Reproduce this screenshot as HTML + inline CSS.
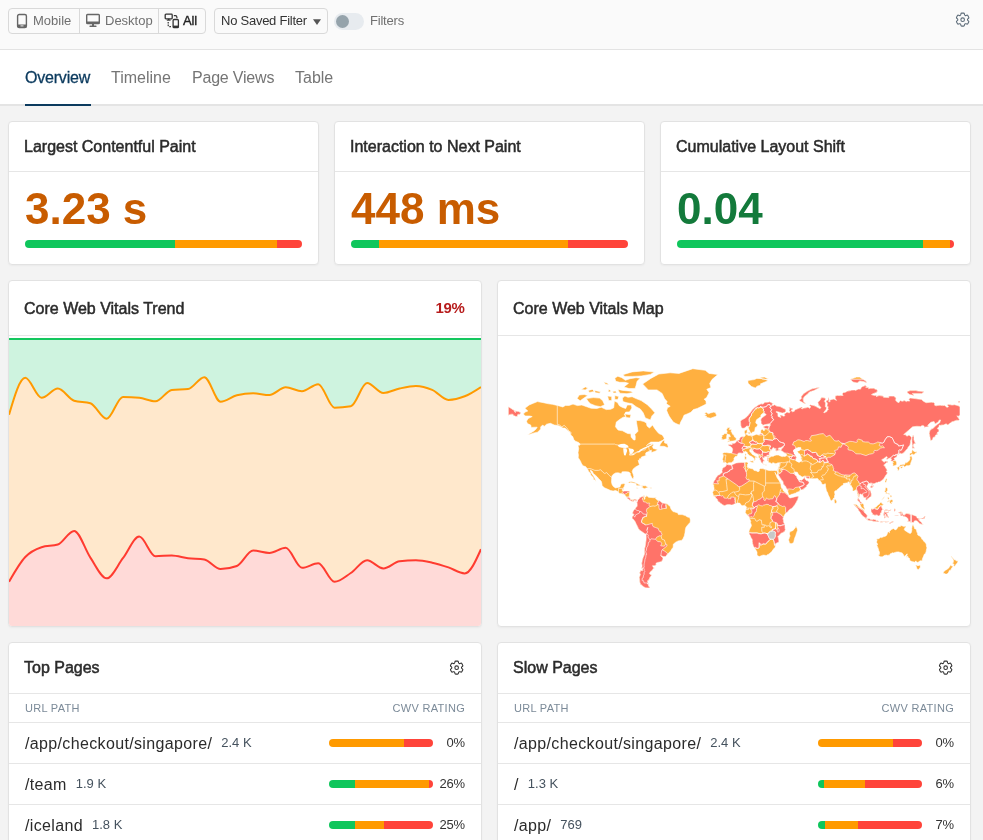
<!DOCTYPE html>
<html><head><meta charset="utf-8">
<style>
*{box-sizing:border-box;margin:0;padding:0}
html,body{width:983px;height:840px;overflow:hidden;background:#f3f3f3;font-family:"Liberation Sans",sans-serif;color:#222}
.abs{position:absolute}
#hdr,#tabs,.card{will-change:transform}
#hdr{position:absolute;left:0;top:0;width:983px;height:50px;background:#fafafa;border-bottom:1px solid #e3e3e3}
.btn{position:absolute;top:8px;height:26px;border:1px solid #d9d9d9;border-radius:4px;background:#fafafa}
.txt13{font-size:13px;line-height:13px;position:absolute;white-space:nowrap}
#tabs{position:absolute;left:0;top:50px;width:983px;height:56px;background:#fff;border-bottom:2px solid #e4e4e4}
.tab{position:absolute;top:20px;font-size:16px;line-height:16px;color:#757575;white-space:nowrap}
.card{position:absolute;background:#fff;border:1px solid #e2e2e2;border-radius:4px;box-shadow:0 1px 2px rgba(0,0,0,.04);overflow:hidden}
.ttl{position:absolute;left:15px;font-size:16px;line-height:16px;color:#2b2b2b;white-space:nowrap;-webkit-text-stroke:.5px #2b2b2b}
.hline{position:absolute;left:0;right:0;height:1px;background:#e6e6e6}
.bar{position:absolute;height:8px;border-radius:4px;overflow:hidden;display:flex}
.g{background:#0fc65c}.o{background:#ff9a00}.r{background:#ff443a}
.val{position:absolute;left:16px;font-size:44px;line-height:44px;font-weight:700;white-space:nowrap}
.colh{position:absolute;font-size:11px;line-height:11px;color:#7b8a98;letter-spacing:.3px;white-space:nowrap;margin-top:-.7px}
.url{position:absolute;left:16px;font-size:16px;line-height:16px;color:#2b2b2b;white-space:nowrap;letter-spacing:.35px;margin-top:-.5px}
.url small{font-size:13px;color:#45525e;margin-left:9px;letter-spacing:0;position:relative;top:-2px}
.pct{position:absolute;right:16.2px;font-size:13px;line-height:13px;color:#333;white-space:nowrap;letter-spacing:-.2px;margin-top:-3.3px}
</style></head><body>

<div id="hdr">
  <div class="btn" style="left:8px;width:198px"></div>
  <div class="abs" style="left:79px;top:9px;width:1px;height:24px;background:#d9d9d9"></div>
  <div class="abs" style="left:158px;top:9px;width:1px;height:24px;background:#d9d9d9"></div>
  <!-- mobile icon -->
  <svg class="abs" style="left:16px;top:13px" width="12" height="16" viewBox="0 0 12 16"><rect x="1.6" y="1.5" width="8.8" height="13" rx="1.6" fill="none" stroke="#666" stroke-width="1.4"/><rect x="1.6" y="11.5" width="8.8" height="3" fill="#666"/><rect x="4.5" y="12.4" width="3" height="1" fill="#eee"/></svg>
  <div class="txt13" style="left:33px;top:14px;color:#707070">Mobile</div>
  <!-- desktop icon -->
  <svg class="abs" style="left:85px;top:13px" width="16" height="16" viewBox="0 0 16 16"><rect x="1.7" y="1.5" width="12.6" height="9" rx=".8" fill="none" stroke="#666" stroke-width="1.4"/><rect x="1.7" y="8.5" width="12.6" height="2" fill="#666"/><rect x="7" y="10" width="2" height="3.5" fill="#666"/><rect x="4.5" y="12.6" width="7" height="1.4" rx=".5" fill="#666"/></svg>
  <div class="txt13" style="left:105px;top:14px;color:#707070">Desktop</div>
  <!-- all icon -->
  <svg class="abs" style="left:164px;top:13px" width="16" height="16" viewBox="0 0 16 16"><rect x="1.2" y="1.2" width="7" height="4.6" rx=".8" fill="none" stroke="#333" stroke-width="1.3"/><path d="M4.7 5.8v1.2" stroke="#333" stroke-width="1.4"/><rect x="2.8" y="6.6" width="3.8" height="1.1" fill="#333"/><path d="M4.2 9v3.2c0 1 .6 1.5 1.6 1.5h2" fill="none" stroke="#333" stroke-width="1.2" stroke-dasharray="1.6 1"/><path d="M9.8 2.6h1.6c.9 0 1.5.6 1.5 1.6v1" fill="none" stroke="#333" stroke-width="1.2"/><rect x="9.1" y="6.5" width="5.3" height="8.2" rx="1" fill="none" stroke="#333" stroke-width="1.3"/><rect x="9.1" y="12.6" width="5.3" height="2.1" fill="#333"/></svg>
  <div class="txt13" style="left:183px;top:14px;color:#222;-webkit-text-stroke:.35px #222;letter-spacing:-.1px">All</div>

  <div class="btn" style="left:214px;width:114px"></div>
  <div class="txt13" style="left:221px;top:14px;color:#333;letter-spacing:-.25px">No Saved Filter</div>
  <svg class="abs" style="left:312px;top:18px" width="10" height="8" viewBox="0 0 10 8"><path d="M1 1.2h8L5 7z" fill="#555"/></svg>

  <div class="abs" style="left:334px;top:13px;width:30px;height:17px;border-radius:9px;background:#e7ebef"></div>
  <div class="abs" style="left:336px;top:15px;width:13px;height:13px;border-radius:50%;background:#95a3ab"></div>
  <div class="txt13" style="left:370px;top:14px;color:#707070;letter-spacing:-.2px">Filters</div>

  <svg class="abs" style="left:954.4px;top:11.4px" width="17.3" height="17.3" viewBox="0 0 24 24" stroke="#5c6b78"><path d="M9.594 3.94c.09-.542.56-.94 1.11-.94h2.593c.55 0 1.02.398 1.11.94l.213 1.281c.063.374.313.686.645.87.074.04.147.083.22.127.325.196.72.257 1.075.124l1.217-.456a1.125 1.125 0 0 1 1.37.49l1.296 2.247a1.125 1.125 0 0 1-.26 1.431l-1.003.827c-.293.241-.438.613-.43.992a7.723 7.723 0 0 1 0 .255c-.008.378.137.75.43.991l1.004.827c.424.35.534.955.26 1.43l-1.298 2.247a1.125 1.125 0 0 1-1.369.491l-1.217-.456c-.355-.133-.75-.072-1.076.124a6.47 6.47 0 0 1-.22.128c-.331.183-.581.495-.644.869l-.213 1.281c-.09.543-.56.94-1.11.94h-2.594c-.55 0-1.019-.398-1.11-.94l-.213-1.281c-.062-.374-.312-.686-.644-.87a6.52 6.52 0 0 1-.22-.127c-.325-.196-.72-.257-1.076-.124l-1.217.456a1.125 1.125 0 0 1-1.369-.49l-1.297-2.247a1.125 1.125 0 0 1 .26-1.431l1.004-.827c.292-.24.437-.613.43-.991a6.932 6.932 0 0 1 0-.255c.007-.38-.138-.751-.43-.992l-1.004-.827a1.125 1.125 0 0 1-.26-1.43l1.297-2.247a1.125 1.125 0 0 1 1.37-.491l1.216.456c.356.133.751.072 1.076-.124.072-.044.146-.086.22-.128.332-.183.582-.495.644-.869l.214-1.28Z M14.5 12a2.5 2.5 0 1 1-5 0 2.5 2.5 0 0 1 5 0Z" fill="none" stroke-width="1.5" stroke-linejoin="round"/></svg>
</div>

<div id="tabs">
  <div class="tab" style="left:25px;color:#0b3a5e;-webkit-text-stroke:.3px #0b3a5e;letter-spacing:-.2px">Overview</div>
  <div class="abs" style="left:25px;top:54px;width:66px;height:2px;background:#0b3a5e"></div>
  <div class="tab" style="left:111px">Timeline</div>
  <div class="tab" style="left:192px;letter-spacing:-.2px">Page Views</div>
  <div class="tab" style="left:295px">Table</div>
</div>

<!-- KPI cards -->
<div class="card" style="left:8px;top:121px;width:311px;height:144px">
  <div class="ttl" style="top:17px">Largest Contentful Paint</div>
  <div class="hline" style="top:49px"></div>
  <div class="val" style="top:65px;color:#c85c00">3.23 s</div>
  <div class="bar" style="left:16px;top:118px;width:277px"><div class="g" style="width:150px"></div><div class="o" style="width:102px"></div><div class="r" style="flex:1"></div></div>
</div>
<div class="card" style="left:334px;top:121px;width:311px;height:144px">
  <div class="ttl" style="top:17px">Interaction to Next Paint</div>
  <div class="hline" style="top:49px"></div>
  <div class="val" style="top:65px;color:#c85c00">448 ms</div>
  <div class="bar" style="left:16px;top:118px;width:277px"><div class="g" style="width:27.5px"></div><div class="o" style="width:189px"></div><div class="r" style="flex:1"></div></div>
</div>
<div class="card" style="left:660px;top:121px;width:311px;height:144px">
  <div class="ttl" style="top:17px">Cumulative Layout Shift</div>
  <div class="hline" style="top:49px"></div>
  <div class="val" style="top:65px;color:#137a3b">0.04</div>
  <div class="bar" style="left:16px;top:118px;width:277px"><div class="g" style="width:246px"></div><div class="o" style="width:27px"></div><div class="r" style="flex:1"></div></div>
</div>

<!-- Trend -->
<div class="card" style="left:8px;top:280px;width:474px;height:347px">
  <div class="ttl" style="top:20px">Core Web Vitals Trend</div>
  <div class="abs" style="right:16.5px;top:18.5px;font-size:15px;line-height:15px;color:#b71c1c;font-weight:700;letter-spacing:-.3px">19%</div>
  <div class="hline" style="top:54px"></div>
  <svg id="trend" class="abs" style="left:0;top:55px" width="472" height="290" viewBox="0 0 472 290"><path d="M0,3H472V51.00L472.00,51.00C466.57,54.58 461.15,58.15 455.72,60.30C450.30,62.45 444.87,63.90 439.45,63.90C434.02,63.90 428.60,56.22 423.17,53.90C417.75,51.58 412.32,50.00 406.90,50.00C401.47,50.00 396.05,51.33 390.62,52.50C385.20,53.67 379.77,57.00 374.34,57.00C368.92,57.00 363.49,47.10 358.07,47.10C352.64,47.10 347.22,69.37 341.79,70.30C336.37,71.23 330.94,71.70 325.52,71.70C320.09,71.70 314.67,48.20 309.24,48.20C303.82,48.20 298.39,55.20 292.97,55.20C287.54,55.20 282.11,51.30 276.69,51.30C271.26,51.30 265.84,59.00 260.41,59.00C254.99,59.00 249.56,57.30 244.14,57.30C238.71,57.30 233.29,57.97 227.86,59.30C222.44,60.63 217.01,65.70 211.59,65.70C206.16,65.70 200.74,41.20 195.31,41.20C189.89,41.20 184.46,52.40 179.03,53.00C173.61,53.60 168.18,53.30 162.76,53.90C157.33,54.50 151.91,65.30 146.48,65.30C141.06,65.30 135.63,62.40 130.21,61.80C124.78,61.20 119.36,60.90 113.93,60.90C108.51,60.90 103.08,82.70 97.66,82.70C92.23,82.70 86.80,68.87 81.38,67.20C75.95,65.53 70.53,66.37 65.10,64.70C59.68,63.03 54.25,52.60 48.83,52.60C43.40,52.60 37.98,61.80 32.55,61.80C27.13,61.80 21.70,41.80 16.28,41.80C10.85,41.80 5.43,60.25 0.00,78.70Z" fill="#cef3df"/>
<path d="M0.00,78.70C5.43,60.25 10.85,41.80 16.28,41.80C21.70,41.80 27.13,61.80 32.55,61.80C37.98,61.80 43.40,52.60 48.83,52.60C54.25,52.60 59.68,63.03 65.10,64.70C70.53,66.37 75.95,65.53 81.38,67.20C86.80,68.87 92.23,82.70 97.66,82.70C103.08,82.70 108.51,60.90 113.93,60.90C119.36,60.90 124.78,61.20 130.21,61.80C135.63,62.40 141.06,65.30 146.48,65.30C151.91,65.30 157.33,54.50 162.76,53.90C168.18,53.30 173.61,53.60 179.03,53.00C184.46,52.40 189.89,41.20 195.31,41.20C200.74,41.20 206.16,65.70 211.59,65.70C217.01,65.70 222.44,60.63 227.86,59.30C233.29,57.97 238.71,57.30 244.14,57.30C249.56,57.30 254.99,59.00 260.41,59.00C265.84,59.00 271.26,51.30 276.69,51.30C282.11,51.30 287.54,55.20 292.97,55.20C298.39,55.20 303.82,48.20 309.24,48.20C314.67,48.20 320.09,71.70 325.52,71.70C330.94,71.70 336.37,71.23 341.79,70.30C347.22,69.37 352.64,47.10 358.07,47.10C363.49,47.10 368.92,57.00 374.34,57.00C379.77,57.00 385.20,53.67 390.62,52.50C396.05,51.33 401.47,50.00 406.90,50.00C412.32,50.00 417.75,51.58 423.17,53.90C428.60,56.22 434.02,63.90 439.45,63.90C444.87,63.90 450.30,62.45 455.72,60.30C461.15,58.15 466.57,54.58 472.00,51.00L472,213.20L472.00,213.20C466.57,225.30 461.15,237.40 455.72,237.40C450.30,237.40 444.87,233.18 439.45,231.40C434.02,229.62 428.60,227.88 423.17,226.70C417.75,225.52 412.32,224.30 406.90,224.30C401.47,224.30 396.05,224.63 390.62,225.30C385.20,225.97 379.77,232.40 374.34,232.40C368.92,232.40 363.49,224.30 358.07,224.30C352.64,224.30 347.22,233.42 341.79,237.00C336.37,240.58 330.94,245.80 325.52,245.80C320.09,245.80 314.67,227.30 309.24,227.30C303.82,227.30 298.39,231.80 292.97,231.80C287.54,231.80 282.11,211.80 276.69,211.80C271.26,211.80 265.84,216.90 260.41,216.90C254.99,216.90 249.56,214.60 244.14,214.60C238.71,214.60 233.29,228.00 227.86,230.00C222.44,232.00 217.01,233.00 211.59,233.00C206.16,233.00 200.74,224.37 195.31,223.50C189.89,222.63 184.46,222.88 179.03,222.20C173.61,221.52 168.18,219.40 162.76,219.40C157.33,219.40 151.91,220.30 146.48,220.30C141.06,220.30 135.63,200.60 130.21,200.60C124.78,200.60 119.36,215.25 113.93,222.20C108.51,229.15 103.08,242.30 97.66,242.30C92.23,242.30 86.80,229.50 81.38,221.60C75.95,213.70 70.53,194.90 65.10,194.90C59.68,194.90 54.25,206.70 48.83,208.50C43.40,210.30 37.98,209.40 32.55,211.20C27.13,213.00 21.70,215.23 16.28,221.00C10.85,226.77 5.43,236.28 0.00,245.80Z" fill="#ffe8cc"/>
<path d="M0.00,245.80C5.43,236.28 10.85,226.77 16.28,221.00C21.70,215.23 27.13,213.00 32.55,211.20C37.98,209.40 43.40,210.30 48.83,208.50C54.25,206.70 59.68,194.90 65.10,194.90C70.53,194.90 75.95,213.70 81.38,221.60C86.80,229.50 92.23,242.30 97.66,242.30C103.08,242.30 108.51,229.15 113.93,222.20C119.36,215.25 124.78,200.60 130.21,200.60C135.63,200.60 141.06,220.30 146.48,220.30C151.91,220.30 157.33,219.40 162.76,219.40C168.18,219.40 173.61,221.52 179.03,222.20C184.46,222.88 189.89,222.63 195.31,223.50C200.74,224.37 206.16,233.00 211.59,233.00C217.01,233.00 222.44,232.00 227.86,230.00C233.29,228.00 238.71,214.60 244.14,214.60C249.56,214.60 254.99,216.90 260.41,216.90C265.84,216.90 271.26,211.80 276.69,211.80C282.11,211.80 287.54,231.80 292.97,231.80C298.39,231.80 303.82,227.30 309.24,227.30C314.67,227.30 320.09,245.80 325.52,245.80C330.94,245.80 336.37,240.58 341.79,237.00C347.22,233.42 352.64,224.30 358.07,224.30C363.49,224.30 368.92,232.40 374.34,232.40C379.77,232.40 385.20,225.97 390.62,225.30C396.05,224.63 401.47,224.30 406.90,224.30C412.32,224.30 417.75,225.52 423.17,226.70C428.60,227.88 434.02,229.62 439.45,231.40C444.87,233.18 450.30,237.40 455.72,237.40C461.15,237.40 466.57,225.30 472.00,213.20L472,290L0,290Z" fill="#ffdad8"/>
<path d="M0,3H472" stroke="#14c75e" stroke-width="2" fill="none"/>
<path d="M0.00,78.70C5.43,60.25 10.85,41.80 16.28,41.80C21.70,41.80 27.13,61.80 32.55,61.80C37.98,61.80 43.40,52.60 48.83,52.60C54.25,52.60 59.68,63.03 65.10,64.70C70.53,66.37 75.95,65.53 81.38,67.20C86.80,68.87 92.23,82.70 97.66,82.70C103.08,82.70 108.51,60.90 113.93,60.90C119.36,60.90 124.78,61.20 130.21,61.80C135.63,62.40 141.06,65.30 146.48,65.30C151.91,65.30 157.33,54.50 162.76,53.90C168.18,53.30 173.61,53.60 179.03,53.00C184.46,52.40 189.89,41.20 195.31,41.20C200.74,41.20 206.16,65.70 211.59,65.70C217.01,65.70 222.44,60.63 227.86,59.30C233.29,57.97 238.71,57.30 244.14,57.30C249.56,57.30 254.99,59.00 260.41,59.00C265.84,59.00 271.26,51.30 276.69,51.30C282.11,51.30 287.54,55.20 292.97,55.20C298.39,55.20 303.82,48.20 309.24,48.20C314.67,48.20 320.09,71.70 325.52,71.70C330.94,71.70 336.37,71.23 341.79,70.30C347.22,69.37 352.64,47.10 358.07,47.10C363.49,47.10 368.92,57.00 374.34,57.00C379.77,57.00 385.20,53.67 390.62,52.50C396.05,51.33 401.47,50.00 406.90,50.00C412.32,50.00 417.75,51.58 423.17,53.90C428.60,56.22 434.02,63.90 439.45,63.90C444.87,63.90 450.30,62.45 455.72,60.30C461.15,58.15 466.57,54.58 472.00,51.00" stroke="#ff9a00" stroke-width="2" fill="none"/>
<path d="M0.00,245.80C5.43,236.28 10.85,226.77 16.28,221.00C21.70,215.23 27.13,213.00 32.55,211.20C37.98,209.40 43.40,210.30 48.83,208.50C54.25,206.70 59.68,194.90 65.10,194.90C70.53,194.90 75.95,213.70 81.38,221.60C86.80,229.50 92.23,242.30 97.66,242.30C103.08,242.30 108.51,229.15 113.93,222.20C119.36,215.25 124.78,200.60 130.21,200.60C135.63,200.60 141.06,220.30 146.48,220.30C151.91,220.30 157.33,219.40 162.76,219.40C168.18,219.40 173.61,221.52 179.03,222.20C184.46,222.88 189.89,222.63 195.31,223.50C200.74,224.37 206.16,233.00 211.59,233.00C217.01,233.00 222.44,232.00 227.86,230.00C233.29,228.00 238.71,214.60 244.14,214.60C249.56,214.60 254.99,216.90 260.41,216.90C265.84,216.90 271.26,211.80 276.69,211.80C282.11,211.80 287.54,231.80 292.97,231.80C298.39,231.80 303.82,227.30 309.24,227.30C314.67,227.30 320.09,245.80 325.52,245.80C330.94,245.80 336.37,240.58 341.79,237.00C347.22,233.42 352.64,224.30 358.07,224.30C363.49,224.30 368.92,232.40 374.34,232.40C379.77,232.40 385.20,225.97 390.62,225.30C396.05,224.63 401.47,224.30 406.90,224.30C412.32,224.30 417.75,225.52 423.17,226.70C428.60,227.88 434.02,229.62 439.45,231.40C444.87,233.18 450.30,237.40 455.72,237.40C461.15,237.40 466.57,225.30 472.00,213.20" stroke="#ff3b30" stroke-width="2" fill="none"/></svg>
</div>

<!-- Map -->
<div class="card" style="left:497px;top:280px;width:474px;height:347px">
  <div class="ttl" style="top:20px">Core Web Vitals Map</div>
  <div class="hline" style="top:54px"></div>
  <svg id="map" class="abs" style="left:0;top:55px" width="472" height="290" viewBox="0 0 472 290"><defs><clipPath id="lc"><path d="M25.3,78.0 27.3,76.1 29.8,75.0 26.9,72.3 31.1,69.0 35.4,67.2 39.5,65.6 45.5,66.7 50.5,67.8 54.3,68.3 59.3,69.4 64.9,71.0 67.4,69.4 71.2,69.4 75.0,68.1 79.4,69.6 83.8,69.0 89.4,71.0 93.2,72.3 98.8,72.5 103.2,71.2 108.2,73.6 112.6,73.3 115.7,71.8 116.4,65.1 119.5,66.5 121.4,69.8 124.5,71.4 127.7,72.5 129.2,69.0 133.3,69.0 133.9,72.0 131.4,75.9 127.7,76.1 126.4,78.6 128.0,80.8 125.2,81.2 122.0,83.2 118.3,86.1 117.5,90.8 120.1,94.1 124.5,94.8 129.6,97.5 132.9,97.8 133.1,101.1 135.6,104.0 137.1,104.0 137.3,100.6 136.8,98.5 140.0,95.2 139.2,90.5 138.7,87.5 138.3,84.4 142.1,84.6 145.9,85.5 148.4,87.1 149.0,89.9 151.5,92.1 154.6,89.0 156.5,92.3 159.0,95.4 160.9,97.6 164.3,98.9 166.3,102.3 165.3,104.1 160.9,106.1 152.8,106.1 148.4,109.7 150.3,108.1 154.9,107.7 155.6,108.9 154.4,110.5 155.3,112.4 158.4,113.3 159.7,113.8 160.9,113.0 157.2,115.2 153.4,116.6 153.3,114.1 151.5,115.2 148.1,116.6 147.4,118.2 148.4,119.3 146.5,120.0 143.4,121.1 143.1,122.7 141.5,122.7 141.1,125.2 140.2,124.2 140.8,126.7 141.5,128.8 139.8,129.8 137.7,130.9 135.2,133.0 134.2,135.5 135.2,138.3 135.8,140.6 135.3,142.7 134.3,142.6 133.3,140.6 132.4,138.9 132.3,137.3 130.8,136.1 128.3,135.7 125.2,135.7 123.9,135.9 124.0,137.3 122.6,137.4 120.1,136.8 117.6,136.9 115.1,138.5 114.0,139.9 113.7,142.3 113.5,146.3 114.2,148.7 115.4,150.5 117.5,151.9 120.1,151.4 122.0,150.9 122.6,148.9 123.2,148.0 125.8,147.6 127.2,147.9 126.4,150.2 125.7,151.5 125.4,153.3 124.7,154.9 126.2,154.9 128.9,154.9 130.6,155.0 131.8,156.0 131.4,158.6 131.2,161.1 132.7,162.9 134.2,163.8 136.3,163.0 138.3,163.4 139.2,164.2 139.3,165.1 138.0,165.6 137.6,164.2 135.8,164.6 135.3,165.8 133.9,165.3 132.2,164.8 131.3,163.6 129.4,162.5 128.4,161.1 127.5,159.9 126.3,158.6 124.2,158.0 121.6,157.4 119.5,155.3 117.4,154.5 115.1,155.1 112.6,154.5 108.8,152.8 106.3,151.8 104.1,149.6 103.8,147.3 103.2,145.2 100.7,142.7 99.1,140.8 97.4,139.2 95.4,137.7 94.4,135.4 92.3,133.9 92.9,136.2 94.7,138.9 96.2,141.0 97.6,144.0 98.3,145.8 97.1,144.3 95.4,143.2 95.3,141.5 92.9,139.2 92.2,136.9 90.7,135.5 89.3,132.7 87.5,130.6 84.9,129.8 83.3,127.2 82.5,125.2 80.9,122.7 80.2,121.4 80.4,119.0 80.0,116.7 80.7,112.5 79.9,109.2 81.6,109.2 82.1,108.1 80.6,106.4 77.5,105.3 75.8,103.6 74.7,100.6 72.7,98.9 72.1,96.4 69.1,93.9 66.9,92.1 64.9,92.1 62.4,90.6 59.9,89.5 56.2,89.0 52.4,87.3 48.6,88.2 46.1,90.5 44.9,89.0 42.7,90.8 42.7,93.0 39.6,96.2 36.1,96.9 32.9,98.0 29.6,98.9 31.7,97.5 35.2,95.5 37.7,93.4 39.2,91.2 37.3,91.2 33.2,91.4 32.7,89.0 29.4,87.6 28.5,85.2 30.1,82.6 34.2,80.6 31.7,80.0 27.3,80.0 25.3,78.0ZM181.6,89.1 177.9,87.5 175.3,86.1 172.8,82.6 171.2,80.2 169.7,77.1 168.7,74.6 169.4,71.8 172.2,70.3 168.4,67.8 169.1,65.6 166.6,62.8 164.1,57.4 159.0,53.9 150.3,53.9 144.6,48.0 152.8,42.4 160.9,38.0 172.2,36.8 181.0,37.4 194.8,32.7 207.3,34.3 211.1,37.4 219.9,38.6 214.2,43.3 211.7,47.5 213.0,51.5 208.8,53.3 211.1,56.7 208.6,61.6 206.1,63.2 208.0,65.1 208.2,68.1 204.2,70.1 199.2,72.5 195.4,73.6 192.9,76.3 189.1,78.0 186.0,79.2 184.8,82.2 182.7,86.1 181.6,89.1ZM161.8,110.3 165.9,110.3 169.7,111.7 170.2,110.3 169.1,107.6 166.6,106.9 166.4,103.8 164.2,105.3 161.9,108.9ZM129.7,147.1 131.4,145.8 133.3,145.4 136.5,146.2 139.0,147.6 141.5,148.7 143.1,149.3 141.1,149.7 138.7,149.7 137.7,147.6 135.2,147.1 132.7,146.6 131.4,147.0ZM142.9,149.8 145.2,149.7 147.7,149.8 150.4,151.4 148.4,151.9 146.5,152.7 144.9,152.0 142.9,151.8 144.9,151.0ZM138.0,151.7 140.5,152.0 139.3,152.6 138.1,151.9ZM151.9,151.5 153.9,151.7 153.8,152.2 151.9,152.2ZM139.2,164.2 140.8,163.0 141.5,161.7 143.1,160.9 144.9,160.1 146.0,159.4 147.0,160.0 146.1,161.1 146.4,162.2 145.9,163.4 147.1,162.7 146.6,161.3 148.2,160.6 148.6,159.4 150.6,161.3 153.1,161.5 155.5,161.7 158.5,161.5 157.5,162.4 159.8,164.3 162.0,164.9 163.9,166.8 166.9,167.5 169.1,167.8 171.3,169.7 172.2,170.6 172.8,172.6 173.5,173.7 175.0,175.6 176.2,175.8 179.9,177.0 180.4,178.6 184.1,178.6 187.3,179.6 189.5,181.0 191.7,181.5 192.4,183.9 192.2,186.3 189.8,188.9 187.9,191.4 187.3,194.0 187.0,196.8 186.3,199.9 184.9,202.9 183.5,204.4 180.2,204.9 177.4,206.4 175.3,208.2 175.2,211.3 174.0,212.7 172.6,215.2 170.6,217.0 169.2,218.9 167.3,220.6 165.7,220.6 163.7,220.1 162.9,219.2 162.8,219.9 164.4,221.2 165.1,222.8 163.7,225.4 161.8,226.1 159.4,226.5 158.0,227.3 158.2,229.1 156.2,229.8 154.5,229.7 155.4,231.6 156.5,231.9 155.4,232.4 154.4,234.0 152.8,235.6 151.8,236.5 151.4,237.6 152.6,238.7 153.9,239.0 151.9,241.4 150.9,243.9 149.5,244.7 149.9,246.5 150.6,247.4 149.0,247.4 150.1,247.9 150.6,250.1 152.1,251.8 150.1,252.0 147.7,251.8 145.5,250.8 144.2,249.4 142.5,248.2 141.8,246.2 141.3,241.4 142.5,238.1 141.5,237.1 142.9,234.2 144.4,234.8 145.0,231.6 143.6,233.1 144.1,229.7 143.7,227.3 144.4,223.8 145.1,221.5 146.5,218.0 146.4,215.0 146.6,212.3 147.2,210.5 147.9,205.2 148.2,202.3 148.0,198.2 146.6,197.6 144.1,195.8 141.8,194.3 140.3,192.4 139.5,190.4 138.2,188.1 137.1,185.6 135.3,183.2 134.3,182.7 134.1,180.9 135.4,179.3 136.1,178.4 134.7,177.8 134.7,176.3 135.7,174.0 137.1,172.9 137.8,171.7 139.1,170.2 139.2,169.1 139.0,166.6 138.5,166.0ZM228.8,128.1 230.4,128.8 233.4,128.9 236.1,127.9 238.1,126.9 240.2,126.7 243.1,126.5 246.7,126.5 248.1,125.9 249.9,126.4 250.1,127.8 249.1,128.9 249.8,129.9 248.9,130.9 250.1,131.6 252.1,132.3 255.3,133.0 255.9,134.3 258.2,134.8 260.0,135.8 261.4,135.0 261.0,133.7 262.4,132.5 264.9,132.6 267.6,133.6 270.8,134.4 273.5,134.6 276.4,134.4 278.6,134.8 279.2,134.6 280.0,136.9 279.1,138.9 278.4,139.2 276.9,136.3 278.0,138.7 279.0,141.5 281.0,144.4 282.5,147.0 282.9,148.3 283.3,151.4 284.4,152.2 285.5,154.9 287.9,156.7 289.7,158.6 290.5,159.4 290.3,160.5 292.2,161.9 294.7,161.4 296.4,160.9 298.6,160.4 300.2,159.9 300.3,161.1 300.2,161.9 299.7,163.4 298.3,166.2 297.2,168.3 296.0,169.7 294.7,171.4 293.4,172.5 291.5,173.6 289.9,175.4 288.6,176.8 287.5,177.6 286.5,179.1 285.9,180.4 285.4,181.3 284.9,183.2 285.6,183.9 285.4,185.7 286.3,187.7 286.8,188.0 287.0,189.9 287.1,192.9 287.4,193.6 287.0,194.5 286.5,195.4 284.5,196.7 283.1,197.3 281.7,198.7 280.4,199.9 279.9,200.4 280.4,202.1 280.6,203.2 280.9,205.3 280.1,206.4 277.6,207.6 277.1,208.5 277.4,210.5 277.0,211.5 275.5,213.0 274.0,215.3 272.5,216.8 270.7,218.2 269.3,218.8 268.6,219.4 267.6,219.4 265.8,219.1 264.6,219.2 263.2,219.8 261.4,220.5 260.3,220.1 259.3,219.5 259.0,218.4 259.0,216.1 258.3,214.8 257.7,213.7 256.7,211.9 255.8,210.8 255.3,209.8 254.6,207.6 254.3,205.6 254.3,204.0 254.1,203.2 253.0,201.6 252.0,199.1 251.0,198.0 250.9,196.1 251.0,195.0 251.4,193.8 251.9,192.7 253.3,190.1 253.4,189.2 253.0,188.1 252.4,186.6 252.8,185.8 252.1,183.8 251.5,182.7 251.6,182.2 251.1,181.3 250.1,179.9 248.9,178.7 248.0,177.6 247.2,176.4 247.5,175.6 247.9,173.5 248.2,172.1 248.5,171.1 248.0,170.4 247.4,170.1 246.9,169.4 245.6,169.5 245.1,169.4 244.6,169.7 243.6,169.6 243.0,168.8 242.5,168.0 241.6,167.1 239.6,167.1 238.6,167.3 237.6,167.6 235.6,168.3 234.8,168.7 233.7,169.1 232.6,168.7 231.2,168.5 230.4,168.5 228.9,168.7 226.8,169.6 226.5,169.5 224.9,169.0 223.7,168.0 222.6,167.3 221.9,166.5 221.5,166.2 220.6,165.8 220.0,165.2 219.8,164.7 219.6,163.8 219.0,163.0 218.5,162.5 217.9,162.2 217.3,161.1 216.5,160.5 216.0,160.5 215.7,160.1 215.4,159.6 215.2,159.4 215.1,158.3 214.7,156.8 214.1,156.4 214.6,156.2 215.2,155.3 215.5,154.6 216.0,153.5 216.0,152.0 215.6,150.1 215.7,149.4 215.5,148.8 214.7,148.3 214.9,147.7 215.7,146.0 216.1,144.7 217.3,143.6 217.6,142.8 218.1,141.2 218.9,140.8 219.8,139.5 220.4,138.9 221.5,138.8 222.5,137.8 223.2,137.4 224.2,136.3 223.9,134.6 224.4,133.4 224.5,132.6 225.3,131.8 226.5,131.1 227.5,130.5 228.4,129.1 228.8,128.1ZM298.3,190.8 299.1,192.2 299.6,194.2 299.2,195.2 298.7,196.7 298.3,197.8 297.7,199.9 297.1,201.1 296.3,203.6 295.8,206.0 295.3,206.9 294.3,207.3 293.2,207.8 292.4,207.4 291.4,207.0 291.2,206.4 291.0,205.2 290.5,204.1 290.7,203.2 291.3,202.0 291.3,201.5 291.9,200.6 292.0,199.6 291.7,199.1 291.4,198.2 291.4,197.0 291.8,196.4 291.9,195.5 293.3,195.2 293.8,195.0 294.3,195.0 295.0,194.2 296.0,193.4 296.4,192.8 296.3,192.3 296.8,192.4 297.4,191.5 297.6,190.8 297.9,190.1ZM124.9,38.7 134.1,35.9 145.2,34.9 156.4,36.1 152.4,38.4 143.2,40.0 134.1,40.4 126.9,40.4ZM116.8,42.2 119.8,40.2 123.9,41.7 127.4,44.3 132.0,42.7 138.1,41.7 142.2,42.2 139.1,45.3 138.1,49.3 137.1,52.4 131.0,52.6 125.9,50.9 130.5,47.3 126.9,46.3 121.8,46.3 117.8,45.3ZM105.6,45.8 109.6,47.3 110.7,48.8 107.6,48.3ZM83.2,53.4 87.3,50.9 89.8,51.9 87.3,53.9ZM90.3,54.4 94.4,53.4 96.4,55.4 91.3,56.5ZM96.4,54.4 102.5,55.7 101.5,57.2 97.4,56.7ZM110.7,53.4 112.7,54.4 112.2,56.0 110.1,55.7ZM114.7,55.4 117.8,54.9 118.3,57.0 115.2,57.0ZM119.8,53.4 124.9,54.4 133.0,55.2 135.1,56.5 129.0,57.7 121.8,57.2ZM79.1,62.6 81.2,59.0 86.2,58.5 89.8,59.5 85.2,62.6 82.2,64.8ZM88.3,62.6 95.4,61.6 101.5,62.1 104.6,64.6 106.6,68.7 102.5,70.7 97.4,69.7 92.3,67.7 90.3,65.6ZM109.6,60.0 113.7,60.5 113.7,64.6 110.7,64.6ZM116.8,59.5 120.8,60.5 119.8,63.6 116.8,63.6ZM124.4,62.1 126.9,60.0 130.0,61.3 134.1,60.7 138.1,62.6 143.2,64.6 149.3,68.7 153.4,72.7 156.9,76.8 153.9,79.9 152.4,83.9 147.3,81.9 145.2,76.8 142.2,72.9 138.1,70.7 134.1,67.7 129.0,66.8 124.9,65.6ZM126.9,78.0 133.0,78.8 132.0,82.1 128.0,81.4ZM224.9,126.4 225.2,124.5 224.3,123.7 225.2,120.8 225.0,119.0 224.5,117.5 226.2,116.4 228.7,116.6 231.2,116.9 233.8,116.9 234.4,115.2 234.7,112.9 233.4,111.1 232.4,110.3 230.6,109.8 230.4,108.6 232.4,108.4 234.2,108.7 233.8,106.8 234.7,107.4 236.5,107.3 238.0,106.3 238.2,105.0 239.3,104.6 240.3,104.3 241.2,104.0 242.1,101.6 243.0,100.9 244.9,100.6 246.4,100.6 247.2,99.7 247.0,98.0 246.4,97.1 246.4,95.2 247.0,94.3 249.5,93.2 249.1,94.6 249.2,95.9 249.9,95.4 249.6,96.4 248.2,97.1 248.6,98.3 249.9,99.0 251.1,99.4 251.9,98.9 253.3,99.6 253.9,99.9 256.8,98.9 258.3,98.3 260.9,99.0 262.4,98.2 262.9,97.6 262.7,96.2 262.7,94.8 263.3,93.7 264.4,93.1 265.4,94.5 266.4,94.5 266.8,91.9 265.6,91.6 265.7,90.5 267.1,89.9 268.7,89.7 270.1,89.9 271.3,89.9 272.7,89.0 271.5,88.0 269.2,88.2 266.9,88.8 264.9,89.3 264.2,88.2 262.9,87.6 263.2,85.7 262.7,84.0 263.2,82.8 264.3,81.6 267.2,79.4 268.1,79.0 267.9,78.2 266.2,77.1 264.1,77.8 262.8,79.2 263.1,80.4 261.0,82.0 258.5,83.8 257.7,86.5 258.5,87.8 259.8,88.8 258.7,90.9 257.3,91.4 256.8,94.5 256.1,96.1 254.6,95.9 253.9,97.3 252.4,97.3 252.0,95.7 251.0,93.7 250.0,91.0 249.2,89.9 246.7,92.1 245.0,92.5 243.4,91.6 242.8,89.5 242.5,85.2 243.6,84.0 247.0,82.2 249.4,80.2 251.8,77.3 254.8,73.3 256.8,71.6 260.3,69.0 263.1,67.8 265.1,68.1 266.9,66.2 269.3,66.3 271.6,65.8 275.5,67.4 273.8,68.1 275.2,69.4 276.5,68.7 278.6,70.1 282.0,70.5 286.8,73.1 287.8,74.0 287.8,75.5 286.4,76.5 284.4,77.1 278.7,75.5 277.9,75.9 279.9,77.3 280.0,80.4 281.6,81.0 282.6,81.6 282.7,80.6 282.0,79.6 282.9,79.0 285.9,80.2 286.9,79.6 286.1,78.2 289.0,76.1 291.3,76.9 292.0,75.5 291.0,74.2 291.7,72.9 290.8,71.6 294.3,72.3 294.9,73.6 293.4,73.8 293.4,75.0 294.3,75.7 296.3,75.3 296.6,74.0 303.6,71.0 304.6,71.2 303.3,72.5 304.8,72.7 305.7,72.0 308.1,71.8 310.0,71.0 311.4,72.3 312.9,71.0 311.5,69.6 312.1,68.7 315.9,69.6 317.6,70.3 322.1,72.7 323.0,71.6 321.8,70.5 321.6,69.8 320.1,69.6 320.6,68.7 319.9,66.9 319.9,66.2 322.1,64.2 323.0,62.0 323.9,61.6 327.3,62.0 327.5,63.5 326.3,65.3 327.2,66.0 327.5,67.6 327.3,70.7 328.7,72.0 328.0,73.6 325.7,76.5 327.0,76.7 327.5,76.1 328.9,75.5 329.3,74.4 330.4,73.3 329.7,72.3 330.2,70.7 328.8,70.5 329.5,67.2 327.9,65.3 330.2,63.7 329.9,62.0 330.6,61.8 331.2,63.2 330.7,65.6 332.1,65.8 331.6,64.2 335.2,63.0 333.6,62.3 336.1,63.2 338.5,64.4 337.3,62.5 337.2,60.1 339.3,59.4 342.5,59.6 345.1,59.4 344.1,57.9 345.6,56.4 347.0,56.4 349.5,55.1 352.8,54.6 353.1,54.1 356.5,53.9 357.5,54.4 360.3,53.1 362.7,53.1 362.9,51.8 364.2,50.7 367.2,49.6 369.3,50.5 367.6,51.2 370.4,51.6 370.7,52.8 372.0,52.3 375.6,52.3 378.4,53.6 379.4,54.6 379.1,55.9 377.7,56.7 374.5,57.9 373.5,58.6 375.0,59.1 376.9,59.6 378.0,59.1 378.6,60.8 379.2,60.1 381.2,59.6 385.3,60.1 385.5,61.3 390.8,61.6 390.9,59.9 393.5,60.1 395.5,60.1 397.6,61.6 398.2,63.0 397.4,63.9 398.9,65.8 400.9,66.7 402.2,64.4 404.2,65.3 406.3,64.6 408.7,65.6 409.6,64.9 411.7,65.1 410.7,63.0 412.5,62.0 423.8,63.5 424.9,64.9 428.1,66.7 433.2,66.2 435.7,66.5 436.7,67.4 436.6,69.2 438.1,69.8 439.8,69.4 442.1,69.2 444.4,69.6 446.7,69.4 449.0,71.4 450.5,70.7 449.5,69.2 450.1,68.3 454.0,69.0 456.7,68.7 460.3,69.8 462.0,70.7 462.0,79.2 460.4,80.2 458.8,80.0 459.9,81.0 460.7,82.6 461.3,83.2 461.0,84.6 458.8,84.2 455.3,85.5 454.1,85.7 452.3,87.1 450.4,88.4 449.9,89.1 448.1,87.8 444.9,89.3 444.2,88.6 443.1,89.5 441.3,89.1 441.0,90.5 439.5,92.3 439.6,93.0 441.0,93.4 440.8,95.9 439.6,96.1 439.1,97.5 439.6,98.2 437.5,99.2 437.0,101.1 435.1,101.4 434.7,103.3 432.9,104.8 432.4,103.6 431.9,101.1 431.2,97.3 431.8,94.8 432.9,93.7 432.9,93.0 434.9,92.5 437.2,90.3 439.3,88.4 441.6,86.9 442.6,84.0 441.1,84.2 440.3,85.9 437.1,88.0 436.1,85.5 432.8,86.3 429.7,89.3 430.7,90.6 427.9,91.0 426.0,91.2 426.0,89.9 424.2,89.5 422.5,90.5 418.8,90.3 414.6,90.8 410.6,94.3 405.7,98.5 407.7,98.7 408.3,99.8 409.6,100.1 410.4,99.2 411.7,99.4 413.5,101.3 413.6,102.8 412.6,104.5 412.5,106.4 412.0,109.0 410.1,111.3 409.6,112.4 405.5,116.9 403.7,117.8 402.9,117.8 402.2,117.0 400.3,118.7 400.3,118.7 399.8,118.5 399.3,119.1 398.9,119.6 398.9,120.6 398.3,120.9 398.1,121.2 396.8,122.0 396.2,122.3 396.0,123.0 396.6,123.3 397.2,124.0 398.3,125.8 398.7,126.7 398.7,128.4 398.2,129.1 397.1,129.4 396.0,129.9 394.9,130.1 394.8,129.4 395.0,128.2 394.4,126.8 395.4,126.5 394.5,125.3 393.9,125.3 393.5,125.1 392.7,124.8 393.0,124.2 393.3,123.9 393.5,122.9 392.2,122.1 390.4,122.6 389.4,123.2 388.1,123.6 388.8,122.9 388.5,122.3 389.5,121.4 388.8,120.6 387.8,121.1 386.3,122.1 385.5,123.0 384.3,123.2 383.6,123.9 384.4,124.8 385.4,125.1 385.4,125.8 386.4,126.1 387.8,125.1 388.9,125.6 389.8,125.6 389.9,126.5 388.1,126.8 387.5,127.7 386.4,128.4 385.8,129.4 387.0,130.1 387.5,131.5 388.3,132.7 389.1,133.9 389.1,135.0 388.4,135.2 388.6,136.1 389.4,136.5 389.1,137.6 388.9,138.7 388.1,138.8 387.3,140.2 386.3,142.0 385.1,143.6 383.4,144.8 381.6,145.9 380.2,146.0 379.5,146.7 379.0,146.3 378.2,146.8 376.5,147.5 375.2,147.7 374.7,149.2 374.1,149.2 373.7,148.3 374.1,147.7 372.3,147.3 371.8,147.5 370.5,147.2 370.0,148.3 369.1,149.8 368.8,150.7 369.7,152.2 371.0,153.9 372.1,154.6 372.8,155.7 373.3,158.1 373.2,160.3 372.2,161.1 370.7,161.9 369.7,163.0 368.2,164.2 367.7,163.4 368.1,162.5 367.1,161.8 366.1,161.7 365.6,160.9 364.9,159.6 364.6,158.1 362.9,159.0 362.9,158.1 361.8,158.1 361.7,159.5 360.7,162.5 360.7,163.4 361.5,163.4 362.0,164.6 362.3,165.7 362.9,166.3 363.7,166.6 364.3,167.2 364.7,167.5 365.4,168.1 365.9,168.8 365.9,169.7 365.8,170.4 365.9,170.7 366.1,171.5 366.6,171.9 366.9,173.0 366.9,173.4 366.1,173.5 364.9,172.5 363.4,171.5 363.3,170.9 362.5,170.1 362.4,169.0 361.9,168.3 362.0,167.5 361.8,166.8 361.3,166.5 361.0,165.8 360.4,165.1 359.8,164.4 359.5,165.2 359.4,164.4 359.5,163.4 359.9,162.5 359.8,161.5 360.2,160.6 359.7,159.9 359.8,158.5 359.3,157.8 358.9,156.3 358.7,154.6 358.2,153.6 357.3,154.2 355.9,155.1 355.1,155.0 354.4,154.8 354.8,153.1 354.5,151.9 353.5,150.4 353.8,150.0 353.0,149.7 352.1,148.7 351.8,148.0 351.6,147.3 351.4,146.7 350.9,145.9 349.8,145.9 349.9,146.4 349.5,147.2 348.9,147.0 348.7,147.1 348.4,147.0 347.9,146.8 347.7,147.3 346.9,147.3 345.3,147.6 345.4,148.7 344.7,149.3 343.0,150.2 341.5,151.8 340.6,152.6 339.3,153.5 339.3,154.0 338.7,154.4 337.6,154.8 337.0,154.9 336.6,155.9 336.8,157.6 337.0,158.6 336.5,159.7 336.5,161.9 335.7,162.0 335.2,163.0 335.6,163.4 334.4,163.8 333.9,164.6 333.4,165.0 332.3,163.8 331.7,162.0 331.2,160.8 330.8,160.1 330.2,159.0 329.8,157.3 329.5,156.6 328.4,154.8 327.9,152.3 327.5,150.6 327.5,149.1 327.3,147.7 325.5,148.5 324.7,148.4 323.0,146.8 323.5,146.3 323.2,145.9 321.8,144.7 320.8,144.4 320.4,143.4 319.5,142.4 317.1,142.7 315.1,142.7 313.4,142.8 311.0,142.4 309.6,142.2 308.2,142.0 307.7,140.3 307.1,140.2 306.1,140.3 304.8,141.0 303.3,140.6 302.1,139.5 300.8,139.1 300.1,137.8 299.1,136.1 298.4,136.2 297.6,135.8 297.2,136.3 296.4,136.2 296.7,137.6 296.9,138.3 297.4,139.3 298.1,139.6 298.3,140.2 299.2,140.7 299.1,141.6 299.8,143.0 300.2,143.5 300.7,143.5 300.9,142.7 300.9,141.9 300.6,141.5 300.9,144.0 301.2,144.3 302.2,144.0 304.0,144.2 304.8,143.2 305.7,142.4 306.6,141.5 307.0,141.1 307.1,141.2 307.0,141.8 306.8,142.0 307.0,143.1 308.2,144.4 309.1,144.7 309.9,144.8 310.9,146.0 311.2,146.3 310.6,147.7 310.1,148.1 309.6,149.1 309.0,148.9 308.7,149.3 308.6,150.0 308.7,150.7 308.1,151.0 307.2,151.4 307.1,152.0 306.8,152.3 306.1,152.3 305.6,152.7 305.6,153.2 305.0,153.5 304.2,153.5 303.5,153.9 302.8,153.9 301.9,154.2 301.7,154.9 301.7,155.3 300.4,155.8 298.4,156.4 297.3,157.3 296.7,157.4 296.3,157.3 295.7,157.8 294.8,158.1 293.8,158.2 293.4,158.2 293.2,158.6 292.8,158.7 292.6,159.0 292.0,159.0 291.7,159.1 290.8,159.1 290.4,158.3 290.5,157.6 290.3,157.2 290.0,156.3 289.7,155.8 289.9,155.7 289.8,155.1 289.9,154.9 289.9,154.4 289.7,153.7 289.3,153.3 289.3,152.8 288.6,152.4 287.9,151.3 287.5,150.2 286.6,149.3 286.1,149.2 285.3,147.9 285.1,146.2 284.5,144.7 283.9,144.2 283.3,143.9 282.9,143.1 282.9,142.8 282.5,142.2 282.1,141.9 281.6,140.8 280.9,139.8 280.2,138.8 279.6,138.8 279.9,138.1 279.9,137.3 280.1,137.0 279.6,134.1 280.1,132.0 280.7,130.8 281.4,129.8 281.2,128.7 281.5,128.1 281.4,126.5 280.9,126.9 279.7,126.7 278.9,127.5 277.0,127.7 276.0,126.9 274.6,126.8 274.3,127.4 273.5,127.7 272.2,126.8 270.8,126.8 270.1,125.3 269.2,124.6 269.8,123.5 269.1,122.7 270.5,121.4 272.3,121.2 272.8,120.2 275.2,120.3 276.7,119.4 278.2,119.0 280.4,119.0 282.5,120.0 284.3,120.6 285.8,120.3 286.9,120.5 288.4,119.7 288.5,119.0 288.3,118.1 287.5,117.5 286.8,117.3 286.3,116.9 284.8,115.5 283.3,114.9 282.2,114.1 283.1,113.8 284.1,112.5 283.5,111.9 285.3,111.3 285.3,110.8 284.1,111.1 283.1,111.3 282.4,111.7 281.1,111.9 280.1,112.4 280.1,113.3 280.7,113.6 282.0,113.6 281.7,114.3 280.4,114.6 278.7,115.3 278.0,115.0 278.2,114.4 277.1,113.9 277.1,113.6 278.4,113.0 278.0,112.7 276.0,112.4 276.0,111.7 274.7,111.9 274.3,112.9 273.3,113.9 273.3,114.4 272.7,114.7 272.3,114.6 272.1,116.4 271.3,117.0 271.0,118.1 271.3,119.0 271.5,119.6 272.6,120.0 272.3,120.3 270.8,120.5 270.3,120.9 269.3,121.7 268.8,120.8 268.1,120.6 267.4,120.6 265.9,120.9 266.8,121.8 266.2,122.0 265.4,122.0 264.8,121.2 264.6,121.5 264.8,122.4 265.6,123.2 265.0,123.5 265.7,124.2 266.3,124.6 266.3,125.3 265.2,125.1 265.6,125.8 264.8,125.9 265.3,127.2 264.4,127.2 263.4,126.7 262.9,125.5 262.7,124.5 262.2,123.7 261.5,123.0 261.5,122.6 261.3,122.4 261.2,122.1 260.5,121.5 260.4,120.9 260.5,119.9 260.7,119.4 260.5,119.1 260.3,119.1 259.9,118.5 259.4,118.1 258.2,117.8 257.4,117.2 256.3,116.7 255.3,115.6 255.5,115.5 254.9,114.9 254.9,114.3 254.1,114.1 253.7,114.7 253.4,114.3 253.4,113.6 253.6,113.5 252.6,113.3 251.6,113.8 251.8,114.6 251.6,115.0 252.0,115.8 253.1,116.6 253.8,117.8 255.1,119.1 256.1,119.1 256.5,119.4 256.1,119.7 258.2,120.6 259.3,121.4 259.4,121.7 259.2,122.3 258.4,121.5 257.4,121.4 256.8,122.3 257.8,122.9 257.6,123.6 257.0,123.7 256.4,124.9 255.9,125.1 255.9,124.6 256.1,123.7 256.4,123.5 255.5,122.0 255.0,121.7 254.6,121.1 253.9,120.8 253.3,120.2 252.4,120.0 251.4,119.4 250.3,118.4 249.4,117.6 249.0,116.1 248.4,116.0 247.4,115.3 246.7,115.6 246.1,116.3 245.5,116.4 244.4,117.3 242.0,116.9 240.1,117.3 240.0,118.2 240.0,119.1 238.8,120.2 237.2,120.5 237.1,120.9 236.3,121.8 235.8,123.0 236.3,123.9 235.6,124.5 235.3,125.5 234.4,125.8 233.6,126.8 230.7,126.8 229.9,127.4 229.4,127.9 228.8,127.8 228.4,127.2 228.0,126.5 226.8,126.2 226.3,126.7 225.7,126.4 224.9,126.4ZM10.4,70.7 13.4,72.5 16.8,74.6 16.6,75.9 17.5,76.5 17.1,74.8 20.5,75.3 23.0,77.1 21.8,78.2 19.8,78.4 19.2,80.6 18.0,80.6 15.4,79.4 15.1,78.4 13.9,78.2 12.4,78.4 10.4,79.2ZM229.0,106.3 230.8,105.8 232.4,105.3 234.9,105.1 237.8,104.6 238.2,103.0 238.3,102.0 236.6,101.1 235.9,99.0 234.6,98.3 233.9,96.6 233.1,95.2 233.8,93.4 231.2,93.4 232.3,91.6 229.9,91.6 228.4,93.6 229.2,95.7 228.4,97.3 229.9,98.3 231.7,98.7 232.1,99.9 232.4,100.8 230.8,100.8 230.4,101.6 230.9,102.6 229.6,103.6 231.9,104.1 230.8,104.5ZM228.7,102.8 228.7,101.1 228.7,99.7 229.2,98.7 228.4,97.6 226.7,97.6 225.8,98.5 223.7,99.4 224.2,100.8 223.4,101.6 224.0,102.5 223.2,103.5 225.4,103.8 227.7,103.0ZM207.7,81.3 208.8,80.4 206.1,79.4 208.3,78.4 206.2,77.6 208.3,76.3 210.4,77.8 212.5,76.9 215.9,76.1 218.0,77.1 217.8,78.2 219.1,79.0 217.5,80.4 212.7,82.2 207.6,81.3ZM250.0,47.2 253.5,50.5 257.3,52.0 259.2,50.2 263.2,49.1 262.2,48.0 270.1,44.7 265.7,42.7 258.8,42.4 256.3,43.6 249.9,44.4ZM261.9,41.5 265.1,43.6 270.6,43.0 266.3,41.0ZM302.1,65.1 306.0,67.2 308.3,66.9 307.6,67.2 305.5,65.6 305.2,62.5 306.6,60.4 309.0,58.6 311.5,55.9 315.9,54.6 320.3,52.3 321.8,51.6 319.0,51.8 314.0,52.8 309.6,55.1 305.8,57.4 303.3,60.4 303.3,62.8 301.1,64.2ZM355.0,46.1 359.2,46.9 361.7,45.0 365.7,45.5 368.4,46.9 368.1,45.3 361.5,41.0 358.5,41.0 352.3,43.3ZM409.3,56.7 411.7,58.6 416.2,59.4 414.4,57.4 423.8,57.4 426.3,55.6 420.0,55.1 417.8,54.6 412.5,54.6 409.3,55.4ZM460.2,66.5 462.0,66.2 462.0,64.9 460.4,65.1ZM416.4,105.3 417.8,108.1 415.9,107.6 415.1,109.8 416.2,111.6 416.2,112.7 415.2,111.7 414.5,112.9 414.2,111.6 414.4,110.0 414.2,108.2 413.9,105.6 413.9,103.3 414.0,100.9 415.1,100.1 414.6,99.4 415.2,99.0 416.0,101.4 415.9,103.5ZM414.2,123.2 413.1,126.2 412.6,127.4 412.9,128.1 412.2,129.1 410.6,129.7 408.3,129.8 406.6,131.3 405.7,129.8 403.5,130.1 402.1,130.8 400.6,130.8 401.8,131.9 400.9,134.1 400.2,134.8 399.6,134.3 399.8,133.0 399.1,132.6 398.6,131.6 399.8,131.2 400.4,130.4 401.7,129.7 402.6,128.7 405.1,128.2 406.5,128.5 407.7,125.9 408.6,126.7 410.5,125.2 411.1,124.6 412.0,122.9 411.7,121.1 412.2,120.2 413.6,119.9 414.2,122.0ZM402.3,131.3 403.1,132.5 405.1,130.9 404.6,130.4 403.5,130.4ZM413.6,116.9 413.9,114.7 414.3,113.5 415.7,115.2 417.6,116.0 418.5,115.3 418.8,117.0 417.0,117.5 415.9,119.0 413.9,117.9 413.2,119.3 411.9,119.6 411.6,118.1 412.2,117.0ZM389.0,143.8 388.3,145.9 387.6,147.0 386.9,145.6 387.6,143.6 388.6,142.6 389.2,143.0ZM374.6,151.3 373.6,151.9 372.6,151.5 372.5,150.4 373.1,149.8 374.5,149.4 375.2,149.4 375.5,150.0ZM338.8,165.6 338.6,166.8 338.1,167.2 337.0,167.5 336.5,166.5 336.2,164.7 336.7,162.7 337.6,163.3ZM387.8,151.5 389.6,151.9 389.5,153.3 389.9,154.4 388.9,154.9 388.6,155.9 388.9,156.9 389.6,157.1 390.4,157.3 391.7,157.6 391.5,158.3 391.9,159.2 390.9,158.6 390.4,157.8 390.2,158.3 389.3,157.6 388.1,157.8 387.5,156.9 388.0,156.7 387.6,156.3 387.5,156.8 386.9,156.0 386.6,155.5 386.6,154.2 387.1,154.8 387.3,152.7ZM394.8,164.4 394.9,165.2 394.5,167.1 394.0,165.8 393.5,166.5 393.9,167.5 393.5,168.0 392.0,167.2 391.7,166.3 392.0,165.7 391.3,165.2 390.9,165.7 390.3,165.6 389.4,166.3 389.1,166.0 389.6,164.9 390.4,164.7 391.2,164.1 391.5,164.7 392.5,164.3 392.8,163.7 393.5,163.7 393.5,162.7ZM389.9,162.8 390.7,163.7 391.2,162.4 390.5,161.1 389.3,161.9ZM392.2,159.1 393.4,159.2 394.0,161.1 393.0,161.1 393.4,162.0 392.2,160.5ZM383.3,164.4 386.1,161.7 386.4,160.6 384.9,161.9ZM355.8,168.1 358.5,168.5 359.7,169.6 360.5,170.5 361.3,171.0 362.4,172.4 363.4,172.5 364.8,173.2 365.6,174.2 366.4,174.9 365.9,175.9 367.3,177.3 367.8,177.9 368.7,178.8 369.3,178.9 369.1,180.4 368.9,182.3 367.6,182.4 366.6,181.3 364.9,180.3 364.4,179.5 363.4,178.5 362.8,177.6 361.8,175.9 360.8,174.7 360.4,173.7 359.9,172.7 358.8,171.9 358.2,170.9 357.2,170.0 355.9,168.7ZM369.3,182.4 370.8,182.5 372.3,183.0 372.5,183.5 374.8,183.7 375.2,183.2 377.5,183.7 378.0,184.6 379.9,184.8 381.4,185.6 380.0,186.0 378.6,185.4 377.5,185.6 376.1,185.4 375.0,185.2 373.5,184.7 372.6,184.6 372.1,184.8 369.8,184.3 369.6,183.7 368.4,183.7 369.3,182.4ZM384.1,169.9 383.4,171.0 384.3,172.1 384.1,172.7 385.5,173.9 384.0,174.0 383.6,174.9 383.6,176.0 382.5,176.9 382.4,178.1 381.9,180.0 381.7,179.6 380.4,180.1 379.9,179.4 378.4,178.9 376.9,179.4 376.3,178.8 375.5,178.8 374.5,178.6 374.3,177.0 373.7,176.6 373.1,175.6 373.0,174.5 373.1,173.4 373.8,172.5 374.7,172.9 375.7,172.6 376.0,171.6 378.0,171.1 378.9,170.1 380.0,168.8 381.1,168.2 382.0,167.3 382.6,166.3 383.1,166.3 383.8,167.0 383.9,167.5 384.6,167.8 385.8,168.2 385.6,168.7 384.8,168.8 385.0,169.4ZM393.3,173.2 392.3,174.5 391.4,174.7 390.2,174.5 388.1,174.5 387.0,174.7 386.9,175.6 387.9,176.8 388.6,176.2 390.9,175.8 390.9,176.4 389.9,176.8 388.6,177.4 389.9,179.0 389.6,179.4 390.8,180.9 390.5,181.8 389.6,181.7 390.0,180.6 388.9,181.2 388.6,180.8 388.8,180.3 388.0,180.3 388.0,178.3 387.1,178.6 387.3,180.0 387.3,181.9 386.5,182.2 386.0,181.8 386.4,180.6 386.1,179.4 385.6,179.4 385.3,178.5 385.8,177.6 385.9,176.8 386.5,174.8 386.8,174.2 387.9,173.4 388.9,173.7 390.4,173.9 391.9,173.9ZM393.0,186.2 393.2,185.9 394.2,185.6 395.9,185.6 395.0,186.3 393.2,186.8 392.3,187.7 391.3,188.1 391.2,187.8 391.8,186.7ZM386.6,185.6 388.4,185.7 390.5,185.6 390.3,185.9 387.6,186.2 386.6,186.1ZM382.0,185.7 383.8,185.6 385.4,185.4 385.6,185.9 383.4,186.3 382.6,186.3ZM396.7,172.2 397.7,173.6 397.2,174.2 396.8,176.1 396.0,174.5 396.3,172.7ZM396.9,179.0 399.9,178.9 400.3,179.9 398.3,179.4 396.7,179.3ZM404.5,176.4 404.8,178.5 406.2,179.3 408.6,177.1 409.7,177.1 410.9,177.6 413.1,178.3 417.6,179.9 418.5,180.5 419.1,181.9 421.4,182.7 421.8,183.3 420.6,183.4 420.9,184.3 422.0,185.1 423.5,186.4 424.4,188.1 425.4,188.0 424.2,188.7 421.8,187.7 419.4,185.2 417.8,184.6 416.8,184.9 416.0,185.3 416.1,186.3 415.1,186.7 413.1,186.4 410.7,185.2 409.5,185.4 410.2,184.2 409.9,182.8 409.2,181.8 406.8,180.6 405.8,180.6 404.0,179.4 403.6,180.0 403.1,180.1 402.8,179.6 401.8,178.5 403.2,178.1 404.1,178.1 404.0,177.8 402.1,177.8 401.6,177.0 400.4,176.8 399.9,176.1 401.7,175.9 402.3,175.5 404.3,176.0ZM422.3,182.0 424.2,181.9 424.8,181.9 425.8,181.3 426.8,180.3 427.3,180.4 426.3,182.4 424.7,182.9 423.0,182.5ZM378.4,203.0 379.5,202.8 380.0,203.0 381.1,202.4 382.6,201.3 383.6,201.6 385.3,200.8 387.9,200.0 388.9,198.7 389.5,196.7 390.5,195.8 391.5,196.7 391.3,195.4 392.2,194.7 392.9,194.1 393.3,193.6 394.4,193.1 395.7,192.4 397.1,193.9 398.6,193.2 399.2,192.2 400.3,190.6 401.4,190.5 402.6,190.3 402.6,189.6 403.1,189.4 404.8,190.1 406.0,190.4 407.2,190.1 408.0,190.6 407.5,191.8 406.8,191.8 406.7,193.1 406.1,193.6 407.2,194.7 408.2,195.2 409.7,196.3 411.0,197.0 412.1,197.4 413.0,197.0 413.5,195.8 413.9,193.4 413.7,192.3 414.0,191.3 414.1,190.1 414.5,189.2 414.5,188.9 415.0,188.5 415.4,189.1 415.7,190.0 415.9,190.5 416.2,191.1 416.4,191.9 416.4,192.4 417.6,192.9 418.6,193.9 418.5,194.5 418.8,195.6 418.9,196.3 419.3,196.4 419.6,197.6 419.5,198.1 419.9,199.1 421.3,199.8 422.9,200.9 423.5,202.1 424.0,203.4 424.5,203.2 425.0,203.8 425.3,204.4 425.4,205.0 426.4,205.8 428.0,207.4 428.3,208.5 428.4,209.2 428.3,210.1 428.9,211.2 428.8,212.4 428.3,214.3 428.3,215.0 428.0,216.0 427.5,217.4 426.5,218.0 426.0,219.1 425.7,219.8 425.3,221.1 424.8,221.8 424.5,222.8 424.3,223.8 424.4,224.2 423.7,224.8 422.3,224.8 421.1,225.4 420.5,226.0 419.8,226.5 418.8,226.0 418.0,225.7 418.1,224.9 417.5,225.2 416.4,226.3 415.2,225.8 414.6,225.7 413.9,225.5 412.6,225.1 411.8,224.2 411.6,223.1 411.4,222.3 410.7,221.8 409.5,221.6 409.9,220.9 409.6,219.9 409.0,220.9 407.8,221.2 408.6,220.3 408.7,219.5 409.2,218.8 409.1,217.8 408.1,219.1 407.3,219.5 406.8,220.6 405.8,220.1 405.8,219.2 405.1,218.2 404.5,217.7 404.7,217.4 403.1,216.6 402.2,216.6 400.9,215.9 398.7,216.0 397.1,216.4 395.7,217.0 394.4,216.8 393.2,217.5 392.0,218.0 391.8,218.7 391.4,219.2 390.3,219.2 389.5,219.4 388.4,219.1 387.5,219.2 386.6,219.3 385.9,220.1 385.5,220.1 384.9,220.3 384.3,220.9 383.4,220.8 382.5,220.8 381.2,219.9 380.5,219.6 380.5,218.8 381.1,218.7 381.4,218.4 381.4,217.8 381.5,216.8 381.4,216.0 380.7,214.6 380.5,213.8 380.5,213.1 380.0,212.2 380.0,211.7 379.5,211.2 379.2,210.1 378.7,209.0 378.4,208.5 379.0,209.0 378.5,207.8 379.1,208.2 379.5,208.8 379.5,208.1 378.9,207.0 378.7,206.6 378.5,206.2 378.6,205.4 378.9,205.2 379.0,204.5 378.9,203.7ZM421.5,229.2 422.3,229.4 422.4,231.2 421.9,231.6 421.8,232.8 421.4,232.4 420.5,233.4 420.3,233.4 419.4,233.3 418.6,232.1 418.5,231.0 417.8,229.8 417.8,229.1 418.6,229.2 419.9,229.7ZM453.3,220.1 455.3,222.5 456.3,223.9 456.8,223.6 458.8,225.0 460.2,224.7 459.5,226.8 458.3,227.9 457.0,230.0 456.0,230.6 455.9,230.1 455.4,230.0 456.0,228.8 455.6,227.9 454.3,227.3 455.3,226.3 455.4,224.2 454.9,223.2 454.9,222.9 454.3,222.3 453.4,221.1 452.8,220.1ZM453.0,228.8 453.5,230.0 454.8,230.0 454.8,230.7 453.5,232.5 452.9,233.1 453.4,233.9 451.4,234.4 451.0,235.4 450.3,237.0 449.2,237.8 448.6,238.1 447.5,238.1 446.7,237.6 445.4,237.5 445.1,237.0 445.7,235.7 447.4,234.2 448.1,233.9 450.1,232.5 450.9,231.8 451.5,230.7 451.9,230.3 452.1,229.4 453.0,228.8ZM255.6,124.6 255.3,125.8 255.4,126.2 255.1,126.9 254.1,126.4 253.5,126.2 251.8,125.5 252.0,124.8 253.4,124.9 254.8,124.8ZM247.7,120.2 248.5,121.2 248.4,123.2 247.7,123.2 247.2,123.6 246.7,123.2 246.7,121.4 246.5,120.6 247.1,120.6ZM248.2,118.7 247.7,119.9 247.2,119.6 246.9,118.5 247.1,118.1 248.0,117.5ZM265.9,128.2 266.6,128.7 267.6,128.7 268.6,128.7 268.6,129.2 267.6,129.3 266.7,128.9 265.7,128.8ZM278.8,129.1 279.6,128.2 278.7,128.9 278.2,129.2 277.2,129.1 277.5,128.7 277.9,128.9ZM252.1,96.9 251.4,98.3 250.0,97.3 250.3,96.3 251.8,96.1Z"/></clipPath></defs><path d="M25.3,78.0 27.3,76.1 29.8,75.0 26.9,72.3 31.1,69.0 35.4,67.2 39.5,65.6 45.5,66.7 50.5,67.8 54.3,68.3 59.3,69.4 64.9,71.0 67.4,69.4 71.2,69.4 75.0,68.1 79.4,69.6 83.8,69.0 89.4,71.0 93.2,72.3 98.8,72.5 103.2,71.2 108.2,73.6 112.6,73.3 115.7,71.8 116.4,65.1 119.5,66.5 121.4,69.8 124.5,71.4 127.7,72.5 129.2,69.0 133.3,69.0 133.9,72.0 131.4,75.9 127.7,76.1 126.4,78.6 128.0,80.8 125.2,81.2 122.0,83.2 118.3,86.1 117.5,90.8 120.1,94.1 124.5,94.8 129.6,97.5 132.9,97.8 133.1,101.1 135.6,104.0 137.1,104.0 137.3,100.6 136.8,98.5 140.0,95.2 139.2,90.5 138.7,87.5 138.3,84.4 142.1,84.6 145.9,85.5 148.4,87.1 149.0,89.9 151.5,92.1 154.6,89.0 156.5,92.3 159.0,95.4 160.9,97.6 164.3,98.9 166.3,102.3 165.3,104.1 160.9,106.1 152.8,106.1 148.4,109.7 150.3,108.1 154.9,107.7 155.6,108.9 154.4,110.5 155.3,112.4 158.4,113.3 159.7,113.8 160.9,113.0 157.2,115.2 153.4,116.6 153.3,114.1 151.5,115.2 148.1,116.6 147.4,118.2 148.4,119.3 146.5,120.0 143.4,121.1 143.1,122.7 141.5,122.7 141.1,125.2 140.2,124.2 140.8,126.7 141.5,128.8 139.8,129.8 137.7,130.9 135.2,133.0 134.2,135.5 135.2,138.3 135.8,140.6 135.3,142.7 134.3,142.6 133.3,140.6 132.4,138.9 132.3,137.3 130.8,136.1 128.3,135.7 125.2,135.7 123.9,135.9 124.0,137.3 122.6,137.4 120.1,136.8 117.6,136.9 115.1,138.5 114.0,139.9 113.7,142.3 113.5,146.3 114.2,148.7 115.4,150.5 117.5,151.9 120.1,151.4 122.0,150.9 122.6,148.9 123.2,148.0 125.8,147.6 127.2,147.9 126.4,150.2 125.7,151.5 125.4,153.3 124.7,154.9 126.2,154.9 128.9,154.9 130.6,155.0 131.8,156.0 131.4,158.6 131.2,161.1 132.7,162.9 134.2,163.8 136.3,163.0 138.3,163.4 139.2,164.2 139.3,165.1 138.0,165.6 137.6,164.2 135.8,164.6 135.3,165.8 133.9,165.3 132.2,164.8 131.3,163.6 129.4,162.5 128.4,161.1 127.5,159.9 126.3,158.6 124.2,158.0 121.6,157.4 119.5,155.3 117.4,154.5 115.1,155.1 112.6,154.5 108.8,152.8 106.3,151.8 104.1,149.6 103.8,147.3 103.2,145.2 100.7,142.7 99.1,140.8 97.4,139.2 95.4,137.7 94.4,135.4 92.3,133.9 92.9,136.2 94.7,138.9 96.2,141.0 97.6,144.0 98.3,145.8 97.1,144.3 95.4,143.2 95.3,141.5 92.9,139.2 92.2,136.9 90.7,135.5 89.3,132.7 87.5,130.6 84.9,129.8 83.3,127.2 82.5,125.2 80.9,122.7 80.2,121.4 80.4,119.0 80.0,116.7 80.7,112.5 79.9,109.2 81.6,109.2 82.1,108.1 80.6,106.4 77.5,105.3 75.8,103.6 74.7,100.6 72.7,98.9 72.1,96.4 69.1,93.9 66.9,92.1 64.9,92.1 62.4,90.6 59.9,89.5 56.2,89.0 52.4,87.3 48.6,88.2 46.1,90.5 44.9,89.0 42.7,90.8 42.7,93.0 39.6,96.2 36.1,96.9 32.9,98.0 29.6,98.9 31.7,97.5 35.2,95.5 37.7,93.4 39.2,91.2 37.3,91.2 33.2,91.4 32.7,89.0 29.4,87.6 28.5,85.2 30.1,82.6 34.2,80.6 31.7,80.0 27.3,80.0 25.3,78.0ZM181.6,89.1 177.9,87.5 175.3,86.1 172.8,82.6 171.2,80.2 169.7,77.1 168.7,74.6 169.4,71.8 172.2,70.3 168.4,67.8 169.1,65.6 166.6,62.8 164.1,57.4 159.0,53.9 150.3,53.9 144.6,48.0 152.8,42.4 160.9,38.0 172.2,36.8 181.0,37.4 194.8,32.7 207.3,34.3 211.1,37.4 219.9,38.6 214.2,43.3 211.7,47.5 213.0,51.5 208.8,53.3 211.1,56.7 208.6,61.6 206.1,63.2 208.0,65.1 208.2,68.1 204.2,70.1 199.2,72.5 195.4,73.6 192.9,76.3 189.1,78.0 186.0,79.2 184.8,82.2 182.7,86.1 181.6,89.1ZM161.8,110.3 165.9,110.3 169.7,111.7 170.2,110.3 169.1,107.6 166.6,106.9 166.4,103.8 164.2,105.3 161.9,108.9ZM129.7,147.1 131.4,145.8 133.3,145.4 136.5,146.2 139.0,147.6 141.5,148.7 143.1,149.3 141.1,149.7 138.7,149.7 137.7,147.6 135.2,147.1 132.7,146.6 131.4,147.0ZM142.9,149.8 145.2,149.7 147.7,149.8 150.4,151.4 148.4,151.9 146.5,152.7 144.9,152.0 142.9,151.8 144.9,151.0ZM138.0,151.7 140.5,152.0 139.3,152.6 138.1,151.9ZM151.9,151.5 153.9,151.7 153.8,152.2 151.9,152.2ZM139.2,164.2 140.8,163.0 141.5,161.7 143.1,160.9 144.9,160.1 146.0,159.4 147.0,160.0 146.1,161.1 146.4,162.2 145.9,163.4 147.1,162.7 146.6,161.3 148.2,160.6 148.6,159.4 150.6,161.3 153.1,161.5 155.5,161.7 158.5,161.5 157.5,162.4 159.8,164.3 162.0,164.9 163.9,166.8 166.9,167.5 169.1,167.8 171.3,169.7 172.2,170.6 172.8,172.6 173.5,173.7 175.0,175.6 176.2,175.8 179.9,177.0 180.4,178.6 184.1,178.6 187.3,179.6 189.5,181.0 191.7,181.5 192.4,183.9 192.2,186.3 189.8,188.9 187.9,191.4 187.3,194.0 187.0,196.8 186.3,199.9 184.9,202.9 183.5,204.4 180.2,204.9 177.4,206.4 175.3,208.2 175.2,211.3 174.0,212.7 172.6,215.2 170.6,217.0 169.2,218.9 167.3,220.6 165.7,220.6 163.7,220.1 162.9,219.2 162.8,219.9 164.4,221.2 165.1,222.8 163.7,225.4 161.8,226.1 159.4,226.5 158.0,227.3 158.2,229.1 156.2,229.8 154.5,229.7 155.4,231.6 156.5,231.9 155.4,232.4 154.4,234.0 152.8,235.6 151.8,236.5 151.4,237.6 152.6,238.7 153.9,239.0 151.9,241.4 150.9,243.9 149.5,244.7 149.9,246.5 150.6,247.4 149.0,247.4 150.1,247.9 150.6,250.1 152.1,251.8 150.1,252.0 147.7,251.8 145.5,250.8 144.2,249.4 142.5,248.2 141.8,246.2 141.3,241.4 142.5,238.1 141.5,237.1 142.9,234.2 144.4,234.8 145.0,231.6 143.6,233.1 144.1,229.7 143.7,227.3 144.4,223.8 145.1,221.5 146.5,218.0 146.4,215.0 146.6,212.3 147.2,210.5 147.9,205.2 148.2,202.3 148.0,198.2 146.6,197.6 144.1,195.8 141.8,194.3 140.3,192.4 139.5,190.4 138.2,188.1 137.1,185.6 135.3,183.2 134.3,182.7 134.1,180.9 135.4,179.3 136.1,178.4 134.7,177.8 134.7,176.3 135.7,174.0 137.1,172.9 137.8,171.7 139.1,170.2 139.2,169.1 139.0,166.6 138.5,166.0ZM228.8,128.1 230.4,128.8 233.4,128.9 236.1,127.9 238.1,126.9 240.2,126.7 243.1,126.5 246.7,126.5 248.1,125.9 249.9,126.4 250.1,127.8 249.1,128.9 249.8,129.9 248.9,130.9 250.1,131.6 252.1,132.3 255.3,133.0 255.9,134.3 258.2,134.8 260.0,135.8 261.4,135.0 261.0,133.7 262.4,132.5 264.9,132.6 267.6,133.6 270.8,134.4 273.5,134.6 276.4,134.4 278.6,134.8 279.2,134.6 280.0,136.9 279.1,138.9 278.4,139.2 276.9,136.3 278.0,138.7 279.0,141.5 281.0,144.4 282.5,147.0 282.9,148.3 283.3,151.4 284.4,152.2 285.5,154.9 287.9,156.7 289.7,158.6 290.5,159.4 290.3,160.5 292.2,161.9 294.7,161.4 296.4,160.9 298.6,160.4 300.2,159.9 300.3,161.1 300.2,161.9 299.7,163.4 298.3,166.2 297.2,168.3 296.0,169.7 294.7,171.4 293.4,172.5 291.5,173.6 289.9,175.4 288.6,176.8 287.5,177.6 286.5,179.1 285.9,180.4 285.4,181.3 284.9,183.2 285.6,183.9 285.4,185.7 286.3,187.7 286.8,188.0 287.0,189.9 287.1,192.9 287.4,193.6 287.0,194.5 286.5,195.4 284.5,196.7 283.1,197.3 281.7,198.7 280.4,199.9 279.9,200.4 280.4,202.1 280.6,203.2 280.9,205.3 280.1,206.4 277.6,207.6 277.1,208.5 277.4,210.5 277.0,211.5 275.5,213.0 274.0,215.3 272.5,216.8 270.7,218.2 269.3,218.8 268.6,219.4 267.6,219.4 265.8,219.1 264.6,219.2 263.2,219.8 261.4,220.5 260.3,220.1 259.3,219.5 259.0,218.4 259.0,216.1 258.3,214.8 257.7,213.7 256.7,211.9 255.8,210.8 255.3,209.8 254.6,207.6 254.3,205.6 254.3,204.0 254.1,203.2 253.0,201.6 252.0,199.1 251.0,198.0 250.9,196.1 251.0,195.0 251.4,193.8 251.9,192.7 253.3,190.1 253.4,189.2 253.0,188.1 252.4,186.6 252.8,185.8 252.1,183.8 251.5,182.7 251.6,182.2 251.1,181.3 250.1,179.9 248.9,178.7 248.0,177.6 247.2,176.4 247.5,175.6 247.9,173.5 248.2,172.1 248.5,171.1 248.0,170.4 247.4,170.1 246.9,169.4 245.6,169.5 245.1,169.4 244.6,169.7 243.6,169.6 243.0,168.8 242.5,168.0 241.6,167.1 239.6,167.1 238.6,167.3 237.6,167.6 235.6,168.3 234.8,168.7 233.7,169.1 232.6,168.7 231.2,168.5 230.4,168.5 228.9,168.7 226.8,169.6 226.5,169.5 224.9,169.0 223.7,168.0 222.6,167.3 221.9,166.5 221.5,166.2 220.6,165.8 220.0,165.2 219.8,164.7 219.6,163.8 219.0,163.0 218.5,162.5 217.9,162.2 217.3,161.1 216.5,160.5 216.0,160.5 215.7,160.1 215.4,159.6 215.2,159.4 215.1,158.3 214.7,156.8 214.1,156.4 214.6,156.2 215.2,155.3 215.5,154.6 216.0,153.5 216.0,152.0 215.6,150.1 215.7,149.4 215.5,148.8 214.7,148.3 214.9,147.7 215.7,146.0 216.1,144.7 217.3,143.6 217.6,142.8 218.1,141.2 218.9,140.8 219.8,139.5 220.4,138.9 221.5,138.8 222.5,137.8 223.2,137.4 224.2,136.3 223.9,134.6 224.4,133.4 224.5,132.6 225.3,131.8 226.5,131.1 227.5,130.5 228.4,129.1 228.8,128.1ZM298.3,190.8 299.1,192.2 299.6,194.2 299.2,195.2 298.7,196.7 298.3,197.8 297.7,199.9 297.1,201.1 296.3,203.6 295.8,206.0 295.3,206.9 294.3,207.3 293.2,207.8 292.4,207.4 291.4,207.0 291.2,206.4 291.0,205.2 290.5,204.1 290.7,203.2 291.3,202.0 291.3,201.5 291.9,200.6 292.0,199.6 291.7,199.1 291.4,198.2 291.4,197.0 291.8,196.4 291.9,195.5 293.3,195.2 293.8,195.0 294.3,195.0 295.0,194.2 296.0,193.4 296.4,192.8 296.3,192.3 296.8,192.4 297.4,191.5 297.6,190.8 297.9,190.1ZM124.9,38.7 134.1,35.9 145.2,34.9 156.4,36.1 152.4,38.4 143.2,40.0 134.1,40.4 126.9,40.4ZM116.8,42.2 119.8,40.2 123.9,41.7 127.4,44.3 132.0,42.7 138.1,41.7 142.2,42.2 139.1,45.3 138.1,49.3 137.1,52.4 131.0,52.6 125.9,50.9 130.5,47.3 126.9,46.3 121.8,46.3 117.8,45.3ZM105.6,45.8 109.6,47.3 110.7,48.8 107.6,48.3ZM83.2,53.4 87.3,50.9 89.8,51.9 87.3,53.9ZM90.3,54.4 94.4,53.4 96.4,55.4 91.3,56.5ZM96.4,54.4 102.5,55.7 101.5,57.2 97.4,56.7ZM110.7,53.4 112.7,54.4 112.2,56.0 110.1,55.7ZM114.7,55.4 117.8,54.9 118.3,57.0 115.2,57.0ZM119.8,53.4 124.9,54.4 133.0,55.2 135.1,56.5 129.0,57.7 121.8,57.2ZM79.1,62.6 81.2,59.0 86.2,58.5 89.8,59.5 85.2,62.6 82.2,64.8ZM88.3,62.6 95.4,61.6 101.5,62.1 104.6,64.6 106.6,68.7 102.5,70.7 97.4,69.7 92.3,67.7 90.3,65.6ZM109.6,60.0 113.7,60.5 113.7,64.6 110.7,64.6ZM116.8,59.5 120.8,60.5 119.8,63.6 116.8,63.6ZM124.4,62.1 126.9,60.0 130.0,61.3 134.1,60.7 138.1,62.6 143.2,64.6 149.3,68.7 153.4,72.7 156.9,76.8 153.9,79.9 152.4,83.9 147.3,81.9 145.2,76.8 142.2,72.9 138.1,70.7 134.1,67.7 129.0,66.8 124.9,65.6ZM126.9,78.0 133.0,78.8 132.0,82.1 128.0,81.4ZM224.9,126.4 225.2,124.5 224.3,123.7 225.2,120.8 225.0,119.0 224.5,117.5 226.2,116.4 228.7,116.6 231.2,116.9 233.8,116.9 234.4,115.2 234.7,112.9 233.4,111.1 232.4,110.3 230.6,109.8 230.4,108.6 232.4,108.4 234.2,108.7 233.8,106.8 234.7,107.4 236.5,107.3 238.0,106.3 238.2,105.0 239.3,104.6 240.3,104.3 241.2,104.0 242.1,101.6 243.0,100.9 244.9,100.6 246.4,100.6 247.2,99.7 247.0,98.0 246.4,97.1 246.4,95.2 247.0,94.3 249.5,93.2 249.1,94.6 249.2,95.9 249.9,95.4 249.6,96.4 248.2,97.1 248.6,98.3 249.9,99.0 251.1,99.4 251.9,98.9 253.3,99.6 253.9,99.9 256.8,98.9 258.3,98.3 260.9,99.0 262.4,98.2 262.9,97.6 262.7,96.2 262.7,94.8 263.3,93.7 264.4,93.1 265.4,94.5 266.4,94.5 266.8,91.9 265.6,91.6 265.7,90.5 267.1,89.9 268.7,89.7 270.1,89.9 271.3,89.9 272.7,89.0 271.5,88.0 269.2,88.2 266.9,88.8 264.9,89.3 264.2,88.2 262.9,87.6 263.2,85.7 262.7,84.0 263.2,82.8 264.3,81.6 267.2,79.4 268.1,79.0 267.9,78.2 266.2,77.1 264.1,77.8 262.8,79.2 263.1,80.4 261.0,82.0 258.5,83.8 257.7,86.5 258.5,87.8 259.8,88.8 258.7,90.9 257.3,91.4 256.8,94.5 256.1,96.1 254.6,95.9 253.9,97.3 252.4,97.3 252.0,95.7 251.0,93.7 250.0,91.0 249.2,89.9 246.7,92.1 245.0,92.5 243.4,91.6 242.8,89.5 242.5,85.2 243.6,84.0 247.0,82.2 249.4,80.2 251.8,77.3 254.8,73.3 256.8,71.6 260.3,69.0 263.1,67.8 265.1,68.1 266.9,66.2 269.3,66.3 271.6,65.8 275.5,67.4 273.8,68.1 275.2,69.4 276.5,68.7 278.6,70.1 282.0,70.5 286.8,73.1 287.8,74.0 287.8,75.5 286.4,76.5 284.4,77.1 278.7,75.5 277.9,75.9 279.9,77.3 280.0,80.4 281.6,81.0 282.6,81.6 282.7,80.6 282.0,79.6 282.9,79.0 285.9,80.2 286.9,79.6 286.1,78.2 289.0,76.1 291.3,76.9 292.0,75.5 291.0,74.2 291.7,72.9 290.8,71.6 294.3,72.3 294.9,73.6 293.4,73.8 293.4,75.0 294.3,75.7 296.3,75.3 296.6,74.0 303.6,71.0 304.6,71.2 303.3,72.5 304.8,72.7 305.7,72.0 308.1,71.8 310.0,71.0 311.4,72.3 312.9,71.0 311.5,69.6 312.1,68.7 315.9,69.6 317.6,70.3 322.1,72.7 323.0,71.6 321.8,70.5 321.6,69.8 320.1,69.6 320.6,68.7 319.9,66.9 319.9,66.2 322.1,64.2 323.0,62.0 323.9,61.6 327.3,62.0 327.5,63.5 326.3,65.3 327.2,66.0 327.5,67.6 327.3,70.7 328.7,72.0 328.0,73.6 325.7,76.5 327.0,76.7 327.5,76.1 328.9,75.5 329.3,74.4 330.4,73.3 329.7,72.3 330.2,70.7 328.8,70.5 329.5,67.2 327.9,65.3 330.2,63.7 329.9,62.0 330.6,61.8 331.2,63.2 330.7,65.6 332.1,65.8 331.6,64.2 335.2,63.0 333.6,62.3 336.1,63.2 338.5,64.4 337.3,62.5 337.2,60.1 339.3,59.4 342.5,59.6 345.1,59.4 344.1,57.9 345.6,56.4 347.0,56.4 349.5,55.1 352.8,54.6 353.1,54.1 356.5,53.9 357.5,54.4 360.3,53.1 362.7,53.1 362.9,51.8 364.2,50.7 367.2,49.6 369.3,50.5 367.6,51.2 370.4,51.6 370.7,52.8 372.0,52.3 375.6,52.3 378.4,53.6 379.4,54.6 379.1,55.9 377.7,56.7 374.5,57.9 373.5,58.6 375.0,59.1 376.9,59.6 378.0,59.1 378.6,60.8 379.2,60.1 381.2,59.6 385.3,60.1 385.5,61.3 390.8,61.6 390.9,59.9 393.5,60.1 395.5,60.1 397.6,61.6 398.2,63.0 397.4,63.9 398.9,65.8 400.9,66.7 402.2,64.4 404.2,65.3 406.3,64.6 408.7,65.6 409.6,64.9 411.7,65.1 410.7,63.0 412.5,62.0 423.8,63.5 424.9,64.9 428.1,66.7 433.2,66.2 435.7,66.5 436.7,67.4 436.6,69.2 438.1,69.8 439.8,69.4 442.1,69.2 444.4,69.6 446.7,69.4 449.0,71.4 450.5,70.7 449.5,69.2 450.1,68.3 454.0,69.0 456.7,68.7 460.3,69.8 462.0,70.7 462.0,79.2 460.4,80.2 458.8,80.0 459.9,81.0 460.7,82.6 461.3,83.2 461.0,84.6 458.8,84.2 455.3,85.5 454.1,85.7 452.3,87.1 450.4,88.4 449.9,89.1 448.1,87.8 444.9,89.3 444.2,88.6 443.1,89.5 441.3,89.1 441.0,90.5 439.5,92.3 439.6,93.0 441.0,93.4 440.8,95.9 439.6,96.1 439.1,97.5 439.6,98.2 437.5,99.2 437.0,101.1 435.1,101.4 434.7,103.3 432.9,104.8 432.4,103.6 431.9,101.1 431.2,97.3 431.8,94.8 432.9,93.7 432.9,93.0 434.9,92.5 437.2,90.3 439.3,88.4 441.6,86.9 442.6,84.0 441.1,84.2 440.3,85.9 437.1,88.0 436.1,85.5 432.8,86.3 429.7,89.3 430.7,90.6 427.9,91.0 426.0,91.2 426.0,89.9 424.2,89.5 422.5,90.5 418.8,90.3 414.6,90.8 410.6,94.3 405.7,98.5 407.7,98.7 408.3,99.8 409.6,100.1 410.4,99.2 411.7,99.4 413.5,101.3 413.6,102.8 412.6,104.5 412.5,106.4 412.0,109.0 410.1,111.3 409.6,112.4 405.5,116.9 403.7,117.8 402.9,117.8 402.2,117.0 400.3,118.7 400.3,118.7 399.8,118.5 399.3,119.1 398.9,119.6 398.9,120.6 398.3,120.9 398.1,121.2 396.8,122.0 396.2,122.3 396.0,123.0 396.6,123.3 397.2,124.0 398.3,125.8 398.7,126.7 398.7,128.4 398.2,129.1 397.1,129.4 396.0,129.9 394.9,130.1 394.8,129.4 395.0,128.2 394.4,126.8 395.4,126.5 394.5,125.3 393.9,125.3 393.5,125.1 392.7,124.8 393.0,124.2 393.3,123.9 393.5,122.9 392.2,122.1 390.4,122.6 389.4,123.2 388.1,123.6 388.8,122.9 388.5,122.3 389.5,121.4 388.8,120.6 387.8,121.1 386.3,122.1 385.5,123.0 384.3,123.2 383.6,123.9 384.4,124.8 385.4,125.1 385.4,125.8 386.4,126.1 387.8,125.1 388.9,125.6 389.8,125.6 389.9,126.5 388.1,126.8 387.5,127.7 386.4,128.4 385.8,129.4 387.0,130.1 387.5,131.5 388.3,132.7 389.1,133.9 389.1,135.0 388.4,135.2 388.6,136.1 389.4,136.5 389.1,137.6 388.9,138.7 388.1,138.8 387.3,140.2 386.3,142.0 385.1,143.6 383.4,144.8 381.6,145.9 380.2,146.0 379.5,146.7 379.0,146.3 378.2,146.8 376.5,147.5 375.2,147.7 374.7,149.2 374.1,149.2 373.7,148.3 374.1,147.7 372.3,147.3 371.8,147.5 370.5,147.2 370.0,148.3 369.1,149.8 368.8,150.7 369.7,152.2 371.0,153.9 372.1,154.6 372.8,155.7 373.3,158.1 373.2,160.3 372.2,161.1 370.7,161.9 369.7,163.0 368.2,164.2 367.7,163.4 368.1,162.5 367.1,161.8 366.1,161.7 365.6,160.9 364.9,159.6 364.6,158.1 362.9,159.0 362.9,158.1 361.8,158.1 361.7,159.5 360.7,162.5 360.7,163.4 361.5,163.4 362.0,164.6 362.3,165.7 362.9,166.3 363.7,166.6 364.3,167.2 364.7,167.5 365.4,168.1 365.9,168.8 365.9,169.7 365.8,170.4 365.9,170.7 366.1,171.5 366.6,171.9 366.9,173.0 366.9,173.4 366.1,173.5 364.9,172.5 363.4,171.5 363.3,170.9 362.5,170.1 362.4,169.0 361.9,168.3 362.0,167.5 361.8,166.8 361.3,166.5 361.0,165.8 360.4,165.1 359.8,164.4 359.5,165.2 359.4,164.4 359.5,163.4 359.9,162.5 359.8,161.5 360.2,160.6 359.7,159.9 359.8,158.5 359.3,157.8 358.9,156.3 358.7,154.6 358.2,153.6 357.3,154.2 355.9,155.1 355.1,155.0 354.4,154.8 354.8,153.1 354.5,151.9 353.5,150.4 353.8,150.0 353.0,149.7 352.1,148.7 351.8,148.0 351.6,147.3 351.4,146.7 350.9,145.9 349.8,145.9 349.9,146.4 349.5,147.2 348.9,147.0 348.7,147.1 348.4,147.0 347.9,146.8 347.7,147.3 346.9,147.3 345.3,147.6 345.4,148.7 344.7,149.3 343.0,150.2 341.5,151.8 340.6,152.6 339.3,153.5 339.3,154.0 338.7,154.4 337.6,154.8 337.0,154.9 336.6,155.9 336.8,157.6 337.0,158.6 336.5,159.7 336.5,161.9 335.7,162.0 335.2,163.0 335.6,163.4 334.4,163.8 333.9,164.6 333.4,165.0 332.3,163.8 331.7,162.0 331.2,160.8 330.8,160.1 330.2,159.0 329.8,157.3 329.5,156.6 328.4,154.8 327.9,152.3 327.5,150.6 327.5,149.1 327.3,147.7 325.5,148.5 324.7,148.4 323.0,146.8 323.5,146.3 323.2,145.9 321.8,144.7 320.8,144.4 320.4,143.4 319.5,142.4 317.1,142.7 315.1,142.7 313.4,142.8 311.0,142.4 309.6,142.2 308.2,142.0 307.7,140.3 307.1,140.2 306.1,140.3 304.8,141.0 303.3,140.6 302.1,139.5 300.8,139.1 300.1,137.8 299.1,136.1 298.4,136.2 297.6,135.8 297.2,136.3 296.4,136.2 296.7,137.6 296.9,138.3 297.4,139.3 298.1,139.6 298.3,140.2 299.2,140.7 299.1,141.6 299.8,143.0 300.2,143.5 300.7,143.5 300.9,142.7 300.9,141.9 300.6,141.5 300.9,144.0 301.2,144.3 302.2,144.0 304.0,144.2 304.8,143.2 305.7,142.4 306.6,141.5 307.0,141.1 307.1,141.2 307.0,141.8 306.8,142.0 307.0,143.1 308.2,144.4 309.1,144.7 309.9,144.8 310.9,146.0 311.2,146.3 310.6,147.7 310.1,148.1 309.6,149.1 309.0,148.9 308.7,149.3 308.6,150.0 308.7,150.7 308.1,151.0 307.2,151.4 307.1,152.0 306.8,152.3 306.1,152.3 305.6,152.7 305.6,153.2 305.0,153.5 304.2,153.5 303.5,153.9 302.8,153.9 301.9,154.2 301.7,154.9 301.7,155.3 300.4,155.8 298.4,156.4 297.3,157.3 296.7,157.4 296.3,157.3 295.7,157.8 294.8,158.1 293.8,158.2 293.4,158.2 293.2,158.6 292.8,158.7 292.6,159.0 292.0,159.0 291.7,159.1 290.8,159.1 290.4,158.3 290.5,157.6 290.3,157.2 290.0,156.3 289.7,155.8 289.9,155.7 289.8,155.1 289.9,154.9 289.9,154.4 289.7,153.7 289.3,153.3 289.3,152.8 288.6,152.4 287.9,151.3 287.5,150.2 286.6,149.3 286.1,149.2 285.3,147.9 285.1,146.2 284.5,144.7 283.9,144.2 283.3,143.9 282.9,143.1 282.9,142.8 282.5,142.2 282.1,141.9 281.6,140.8 280.9,139.8 280.2,138.8 279.6,138.8 279.9,138.1 279.9,137.3 280.1,137.0 279.6,134.1 280.1,132.0 280.7,130.8 281.4,129.8 281.2,128.7 281.5,128.1 281.4,126.5 280.9,126.9 279.7,126.7 278.9,127.5 277.0,127.7 276.0,126.9 274.6,126.8 274.3,127.4 273.5,127.7 272.2,126.8 270.8,126.8 270.1,125.3 269.2,124.6 269.8,123.5 269.1,122.7 270.5,121.4 272.3,121.2 272.8,120.2 275.2,120.3 276.7,119.4 278.2,119.0 280.4,119.0 282.5,120.0 284.3,120.6 285.8,120.3 286.9,120.5 288.4,119.7 288.5,119.0 288.3,118.1 287.5,117.5 286.8,117.3 286.3,116.9 284.8,115.5 283.3,114.9 282.2,114.1 283.1,113.8 284.1,112.5 283.5,111.9 285.3,111.3 285.3,110.8 284.1,111.1 283.1,111.3 282.4,111.7 281.1,111.9 280.1,112.4 280.1,113.3 280.7,113.6 282.0,113.6 281.7,114.3 280.4,114.6 278.7,115.3 278.0,115.0 278.2,114.4 277.1,113.9 277.1,113.6 278.4,113.0 278.0,112.7 276.0,112.4 276.0,111.7 274.7,111.9 274.3,112.9 273.3,113.9 273.3,114.4 272.7,114.7 272.3,114.6 272.1,116.4 271.3,117.0 271.0,118.1 271.3,119.0 271.5,119.6 272.6,120.0 272.3,120.3 270.8,120.5 270.3,120.9 269.3,121.7 268.8,120.8 268.1,120.6 267.4,120.6 265.9,120.9 266.8,121.8 266.2,122.0 265.4,122.0 264.8,121.2 264.6,121.5 264.8,122.4 265.6,123.2 265.0,123.5 265.7,124.2 266.3,124.6 266.3,125.3 265.2,125.1 265.6,125.8 264.8,125.9 265.3,127.2 264.4,127.2 263.4,126.7 262.9,125.5 262.7,124.5 262.2,123.7 261.5,123.0 261.5,122.6 261.3,122.4 261.2,122.1 260.5,121.5 260.4,120.9 260.5,119.9 260.7,119.4 260.5,119.1 260.3,119.1 259.9,118.5 259.4,118.1 258.2,117.8 257.4,117.2 256.3,116.7 255.3,115.6 255.5,115.5 254.9,114.9 254.9,114.3 254.1,114.1 253.7,114.7 253.4,114.3 253.4,113.6 253.6,113.5 252.6,113.3 251.6,113.8 251.8,114.6 251.6,115.0 252.0,115.8 253.1,116.6 253.8,117.8 255.1,119.1 256.1,119.1 256.5,119.4 256.1,119.7 258.2,120.6 259.3,121.4 259.4,121.7 259.2,122.3 258.4,121.5 257.4,121.4 256.8,122.3 257.8,122.9 257.6,123.6 257.0,123.7 256.4,124.9 255.9,125.1 255.9,124.6 256.1,123.7 256.4,123.5 255.5,122.0 255.0,121.7 254.6,121.1 253.9,120.8 253.3,120.2 252.4,120.0 251.4,119.4 250.3,118.4 249.4,117.6 249.0,116.1 248.4,116.0 247.4,115.3 246.7,115.6 246.1,116.3 245.5,116.4 244.4,117.3 242.0,116.9 240.1,117.3 240.0,118.2 240.0,119.1 238.8,120.2 237.2,120.5 237.1,120.9 236.3,121.8 235.8,123.0 236.3,123.9 235.6,124.5 235.3,125.5 234.4,125.8 233.6,126.8 230.7,126.8 229.9,127.4 229.4,127.9 228.8,127.8 228.4,127.2 228.0,126.5 226.8,126.2 226.3,126.7 225.7,126.4 224.9,126.4ZM10.4,70.7 13.4,72.5 16.8,74.6 16.6,75.9 17.5,76.5 17.1,74.8 20.5,75.3 23.0,77.1 21.8,78.2 19.8,78.4 19.2,80.6 18.0,80.6 15.4,79.4 15.1,78.4 13.9,78.2 12.4,78.4 10.4,79.2ZM229.0,106.3 230.8,105.8 232.4,105.3 234.9,105.1 237.8,104.6 238.2,103.0 238.3,102.0 236.6,101.1 235.9,99.0 234.6,98.3 233.9,96.6 233.1,95.2 233.8,93.4 231.2,93.4 232.3,91.6 229.9,91.6 228.4,93.6 229.2,95.7 228.4,97.3 229.9,98.3 231.7,98.7 232.1,99.9 232.4,100.8 230.8,100.8 230.4,101.6 230.9,102.6 229.6,103.6 231.9,104.1 230.8,104.5ZM228.7,102.8 228.7,101.1 228.7,99.7 229.2,98.7 228.4,97.6 226.7,97.6 225.8,98.5 223.7,99.4 224.2,100.8 223.4,101.6 224.0,102.5 223.2,103.5 225.4,103.8 227.7,103.0ZM207.7,81.3 208.8,80.4 206.1,79.4 208.3,78.4 206.2,77.6 208.3,76.3 210.4,77.8 212.5,76.9 215.9,76.1 218.0,77.1 217.8,78.2 219.1,79.0 217.5,80.4 212.7,82.2 207.6,81.3ZM250.0,47.2 253.5,50.5 257.3,52.0 259.2,50.2 263.2,49.1 262.2,48.0 270.1,44.7 265.7,42.7 258.8,42.4 256.3,43.6 249.9,44.4ZM261.9,41.5 265.1,43.6 270.6,43.0 266.3,41.0ZM302.1,65.1 306.0,67.2 308.3,66.9 307.6,67.2 305.5,65.6 305.2,62.5 306.6,60.4 309.0,58.6 311.5,55.9 315.9,54.6 320.3,52.3 321.8,51.6 319.0,51.8 314.0,52.8 309.6,55.1 305.8,57.4 303.3,60.4 303.3,62.8 301.1,64.2ZM355.0,46.1 359.2,46.9 361.7,45.0 365.7,45.5 368.4,46.9 368.1,45.3 361.5,41.0 358.5,41.0 352.3,43.3ZM409.3,56.7 411.7,58.6 416.2,59.4 414.4,57.4 423.8,57.4 426.3,55.6 420.0,55.1 417.8,54.6 412.5,54.6 409.3,55.4ZM460.2,66.5 462.0,66.2 462.0,64.9 460.4,65.1ZM416.4,105.3 417.8,108.1 415.9,107.6 415.1,109.8 416.2,111.6 416.2,112.7 415.2,111.7 414.5,112.9 414.2,111.6 414.4,110.0 414.2,108.2 413.9,105.6 413.9,103.3 414.0,100.9 415.1,100.1 414.6,99.4 415.2,99.0 416.0,101.4 415.9,103.5ZM414.2,123.2 413.1,126.2 412.6,127.4 412.9,128.1 412.2,129.1 410.6,129.7 408.3,129.8 406.6,131.3 405.7,129.8 403.5,130.1 402.1,130.8 400.6,130.8 401.8,131.9 400.9,134.1 400.2,134.8 399.6,134.3 399.8,133.0 399.1,132.6 398.6,131.6 399.8,131.2 400.4,130.4 401.7,129.7 402.6,128.7 405.1,128.2 406.5,128.5 407.7,125.9 408.6,126.7 410.5,125.2 411.1,124.6 412.0,122.9 411.7,121.1 412.2,120.2 413.6,119.9 414.2,122.0ZM402.3,131.3 403.1,132.5 405.1,130.9 404.6,130.4 403.5,130.4ZM413.6,116.9 413.9,114.7 414.3,113.5 415.7,115.2 417.6,116.0 418.5,115.3 418.8,117.0 417.0,117.5 415.9,119.0 413.9,117.9 413.2,119.3 411.9,119.6 411.6,118.1 412.2,117.0ZM389.0,143.8 388.3,145.9 387.6,147.0 386.9,145.6 387.6,143.6 388.6,142.6 389.2,143.0ZM374.6,151.3 373.6,151.9 372.6,151.5 372.5,150.4 373.1,149.8 374.5,149.4 375.2,149.4 375.5,150.0ZM338.8,165.6 338.6,166.8 338.1,167.2 337.0,167.5 336.5,166.5 336.2,164.7 336.7,162.7 337.6,163.3ZM387.8,151.5 389.6,151.9 389.5,153.3 389.9,154.4 388.9,154.9 388.6,155.9 388.9,156.9 389.6,157.1 390.4,157.3 391.7,157.6 391.5,158.3 391.9,159.2 390.9,158.6 390.4,157.8 390.2,158.3 389.3,157.6 388.1,157.8 387.5,156.9 388.0,156.7 387.6,156.3 387.5,156.8 386.9,156.0 386.6,155.5 386.6,154.2 387.1,154.8 387.3,152.7ZM394.8,164.4 394.9,165.2 394.5,167.1 394.0,165.8 393.5,166.5 393.9,167.5 393.5,168.0 392.0,167.2 391.7,166.3 392.0,165.7 391.3,165.2 390.9,165.7 390.3,165.6 389.4,166.3 389.1,166.0 389.6,164.9 390.4,164.7 391.2,164.1 391.5,164.7 392.5,164.3 392.8,163.7 393.5,163.7 393.5,162.7ZM389.9,162.8 390.7,163.7 391.2,162.4 390.5,161.1 389.3,161.9ZM392.2,159.1 393.4,159.2 394.0,161.1 393.0,161.1 393.4,162.0 392.2,160.5ZM383.3,164.4 386.1,161.7 386.4,160.6 384.9,161.9ZM355.8,168.1 358.5,168.5 359.7,169.6 360.5,170.5 361.3,171.0 362.4,172.4 363.4,172.5 364.8,173.2 365.6,174.2 366.4,174.9 365.9,175.9 367.3,177.3 367.8,177.9 368.7,178.8 369.3,178.9 369.1,180.4 368.9,182.3 367.6,182.4 366.6,181.3 364.9,180.3 364.4,179.5 363.4,178.5 362.8,177.6 361.8,175.9 360.8,174.7 360.4,173.7 359.9,172.7 358.8,171.9 358.2,170.9 357.2,170.0 355.9,168.7ZM369.3,182.4 370.8,182.5 372.3,183.0 372.5,183.5 374.8,183.7 375.2,183.2 377.5,183.7 378.0,184.6 379.9,184.8 381.4,185.6 380.0,186.0 378.6,185.4 377.5,185.6 376.1,185.4 375.0,185.2 373.5,184.7 372.6,184.6 372.1,184.8 369.8,184.3 369.6,183.7 368.4,183.7 369.3,182.4ZM384.1,169.9 383.4,171.0 384.3,172.1 384.1,172.7 385.5,173.9 384.0,174.0 383.6,174.9 383.6,176.0 382.5,176.9 382.4,178.1 381.9,180.0 381.7,179.6 380.4,180.1 379.9,179.4 378.4,178.9 376.9,179.4 376.3,178.8 375.5,178.8 374.5,178.6 374.3,177.0 373.7,176.6 373.1,175.6 373.0,174.5 373.1,173.4 373.8,172.5 374.7,172.9 375.7,172.6 376.0,171.6 378.0,171.1 378.9,170.1 380.0,168.8 381.1,168.2 382.0,167.3 382.6,166.3 383.1,166.3 383.8,167.0 383.9,167.5 384.6,167.8 385.8,168.2 385.6,168.7 384.8,168.8 385.0,169.4ZM393.3,173.2 392.3,174.5 391.4,174.7 390.2,174.5 388.1,174.5 387.0,174.7 386.9,175.6 387.9,176.8 388.6,176.2 390.9,175.8 390.9,176.4 389.9,176.8 388.6,177.4 389.9,179.0 389.6,179.4 390.8,180.9 390.5,181.8 389.6,181.7 390.0,180.6 388.9,181.2 388.6,180.8 388.8,180.3 388.0,180.3 388.0,178.3 387.1,178.6 387.3,180.0 387.3,181.9 386.5,182.2 386.0,181.8 386.4,180.6 386.1,179.4 385.6,179.4 385.3,178.5 385.8,177.6 385.9,176.8 386.5,174.8 386.8,174.2 387.9,173.4 388.9,173.7 390.4,173.9 391.9,173.9ZM393.0,186.2 393.2,185.9 394.2,185.6 395.9,185.6 395.0,186.3 393.2,186.8 392.3,187.7 391.3,188.1 391.2,187.8 391.8,186.7ZM386.6,185.6 388.4,185.7 390.5,185.6 390.3,185.9 387.6,186.2 386.6,186.1ZM382.0,185.7 383.8,185.6 385.4,185.4 385.6,185.9 383.4,186.3 382.6,186.3ZM396.7,172.2 397.7,173.6 397.2,174.2 396.8,176.1 396.0,174.5 396.3,172.7ZM396.9,179.0 399.9,178.9 400.3,179.9 398.3,179.4 396.7,179.3ZM404.5,176.4 404.8,178.5 406.2,179.3 408.6,177.1 409.7,177.1 410.9,177.6 413.1,178.3 417.6,179.9 418.5,180.5 419.1,181.9 421.4,182.7 421.8,183.3 420.6,183.4 420.9,184.3 422.0,185.1 423.5,186.4 424.4,188.1 425.4,188.0 424.2,188.7 421.8,187.7 419.4,185.2 417.8,184.6 416.8,184.9 416.0,185.3 416.1,186.3 415.1,186.7 413.1,186.4 410.7,185.2 409.5,185.4 410.2,184.2 409.9,182.8 409.2,181.8 406.8,180.6 405.8,180.6 404.0,179.4 403.6,180.0 403.1,180.1 402.8,179.6 401.8,178.5 403.2,178.1 404.1,178.1 404.0,177.8 402.1,177.8 401.6,177.0 400.4,176.8 399.9,176.1 401.7,175.9 402.3,175.5 404.3,176.0ZM422.3,182.0 424.2,181.9 424.8,181.9 425.8,181.3 426.8,180.3 427.3,180.4 426.3,182.4 424.7,182.9 423.0,182.5ZM378.4,203.0 379.5,202.8 380.0,203.0 381.1,202.4 382.6,201.3 383.6,201.6 385.3,200.8 387.9,200.0 388.9,198.7 389.5,196.7 390.5,195.8 391.5,196.7 391.3,195.4 392.2,194.7 392.9,194.1 393.3,193.6 394.4,193.1 395.7,192.4 397.1,193.9 398.6,193.2 399.2,192.2 400.3,190.6 401.4,190.5 402.6,190.3 402.6,189.6 403.1,189.4 404.8,190.1 406.0,190.4 407.2,190.1 408.0,190.6 407.5,191.8 406.8,191.8 406.7,193.1 406.1,193.6 407.2,194.7 408.2,195.2 409.7,196.3 411.0,197.0 412.1,197.4 413.0,197.0 413.5,195.8 413.9,193.4 413.7,192.3 414.0,191.3 414.1,190.1 414.5,189.2 414.5,188.9 415.0,188.5 415.4,189.1 415.7,190.0 415.9,190.5 416.2,191.1 416.4,191.9 416.4,192.4 417.6,192.9 418.6,193.9 418.5,194.5 418.8,195.6 418.9,196.3 419.3,196.4 419.6,197.6 419.5,198.1 419.9,199.1 421.3,199.8 422.9,200.9 423.5,202.1 424.0,203.4 424.5,203.2 425.0,203.8 425.3,204.4 425.4,205.0 426.4,205.8 428.0,207.4 428.3,208.5 428.4,209.2 428.3,210.1 428.9,211.2 428.8,212.4 428.3,214.3 428.3,215.0 428.0,216.0 427.5,217.4 426.5,218.0 426.0,219.1 425.7,219.8 425.3,221.1 424.8,221.8 424.5,222.8 424.3,223.8 424.4,224.2 423.7,224.8 422.3,224.8 421.1,225.4 420.5,226.0 419.8,226.5 418.8,226.0 418.0,225.7 418.1,224.9 417.5,225.2 416.4,226.3 415.2,225.8 414.6,225.7 413.9,225.5 412.6,225.1 411.8,224.2 411.6,223.1 411.4,222.3 410.7,221.8 409.5,221.6 409.9,220.9 409.6,219.9 409.0,220.9 407.8,221.2 408.6,220.3 408.7,219.5 409.2,218.8 409.1,217.8 408.1,219.1 407.3,219.5 406.8,220.6 405.8,220.1 405.8,219.2 405.1,218.2 404.5,217.7 404.7,217.4 403.1,216.6 402.2,216.6 400.9,215.9 398.7,216.0 397.1,216.4 395.7,217.0 394.4,216.8 393.2,217.5 392.0,218.0 391.8,218.7 391.4,219.2 390.3,219.2 389.5,219.4 388.4,219.1 387.5,219.2 386.6,219.3 385.9,220.1 385.5,220.1 384.9,220.3 384.3,220.9 383.4,220.8 382.5,220.8 381.2,219.9 380.5,219.6 380.5,218.8 381.1,218.7 381.4,218.4 381.4,217.8 381.5,216.8 381.4,216.0 380.7,214.6 380.5,213.8 380.5,213.1 380.0,212.2 380.0,211.7 379.5,211.2 379.2,210.1 378.7,209.0 378.4,208.5 379.0,209.0 378.5,207.8 379.1,208.2 379.5,208.8 379.5,208.1 378.9,207.0 378.7,206.6 378.5,206.2 378.6,205.4 378.9,205.2 379.0,204.5 378.9,203.7ZM421.5,229.2 422.3,229.4 422.4,231.2 421.9,231.6 421.8,232.8 421.4,232.4 420.5,233.4 420.3,233.4 419.4,233.3 418.6,232.1 418.5,231.0 417.8,229.8 417.8,229.1 418.6,229.2 419.9,229.7ZM453.3,220.1 455.3,222.5 456.3,223.9 456.8,223.6 458.8,225.0 460.2,224.7 459.5,226.8 458.3,227.9 457.0,230.0 456.0,230.6 455.9,230.1 455.4,230.0 456.0,228.8 455.6,227.9 454.3,227.3 455.3,226.3 455.4,224.2 454.9,223.2 454.9,222.9 454.3,222.3 453.4,221.1 452.8,220.1ZM453.0,228.8 453.5,230.0 454.8,230.0 454.8,230.7 453.5,232.5 452.9,233.1 453.4,233.9 451.4,234.4 451.0,235.4 450.3,237.0 449.2,237.8 448.6,238.1 447.5,238.1 446.7,237.6 445.4,237.5 445.1,237.0 445.7,235.7 447.4,234.2 448.1,233.9 450.1,232.5 450.9,231.8 451.5,230.7 451.9,230.3 452.1,229.4 453.0,228.8ZM255.6,124.6 255.3,125.8 255.4,126.2 255.1,126.9 254.1,126.4 253.5,126.2 251.8,125.5 252.0,124.8 253.4,124.9 254.8,124.8ZM247.7,120.2 248.5,121.2 248.4,123.2 247.7,123.2 247.2,123.6 246.7,123.2 246.7,121.4 246.5,120.6 247.1,120.6ZM248.2,118.7 247.7,119.9 247.2,119.6 246.9,118.5 247.1,118.1 248.0,117.5ZM265.9,128.2 266.6,128.7 267.6,128.7 268.6,128.7 268.6,129.2 267.6,129.3 266.7,128.9 265.7,128.8ZM278.8,129.1 279.6,128.2 278.7,128.9 278.2,129.2 277.2,129.1 277.5,128.7 277.9,128.9ZM252.1,96.9 251.4,98.3 250.0,97.3 250.3,96.3 251.8,96.1Z" fill="#ffb040"/><g clip-path="url(#lc)"><path d="M275.7,43.3 275.7,68.7 274.8,69.0 272.5,70.7 271.8,71.8 273.8,73.6 272.7,75.3 274.1,77.6 273.3,79.4 274.3,80.8 273.8,82.0 275.7,83.4 274.1,85.5 271.5,88.0 271.3,89.9 271.0,91.0 270.6,93.0 271.1,93.9 271.6,95.9 275.0,96.9 274.8,98.3 277.2,100.8 276.1,103.0 278.6,102.5 280.1,104.0 281.6,105.8 283.9,106.6 286.0,107.1 286.5,108.4 286.0,110.0 284.1,111.1 282.6,113.9 283.6,115.5 286.4,116.9 288.3,117.2 289.5,117.2 291.4,117.9 293.3,118.2 294.7,119.1 296.2,120.2 297.2,119.3 298.3,116.0 297.9,112.2 297.2,110.5 295.7,108.9 294.5,109.0 295.8,105.8 297.3,105.5 299.9,103.8 302.1,104.0 306.1,105.5 307.7,104.6 309.6,104.6 311.4,105.1 313.2,105.1 313.5,104.3 311.5,103.1 312.7,101.4 313.4,99.7 318.0,99.0 321.8,98.0 325.2,97.6 328.3,100.6 331.9,99.2 332.7,100.1 336.6,104.8 339.0,105.1 340.8,104.6 343.2,107.1 345.7,107.7 346.4,107.7 346.4,107.7 348.7,106.6 351.8,105.3 354.5,105.5 358.2,106.4 359.4,105.8 358.9,104.8 360.3,103.0 364.3,104.3 364.6,105.6 367.4,106.0 370.3,106.0 372.3,107.6 375.1,107.9 378.4,106.8 379.7,106.0 382.6,106.6 382.6,106.6 384.1,107.3 385.9,106.3 387.0,103.8 389.1,100.8 391.3,100.6 394.2,101.8 395.0,103.5 395.9,105.3 396.4,106.8 400.1,108.6 400.6,110.0 404.2,109.4 405.6,108.9 405.0,110.3 404.1,112.7 403.2,114.3 401.7,113.9 400.6,114.6 400.9,115.8 400.7,117.6 400.1,117.6 400.1,118.4 401.2,119.7 406.8,118.2 411.6,113.6 413.7,113.1 415.1,113.1 418.8,114.7 424.4,112.9 443.2,103.1 462.7,85.2 462.7,43.3ZM260.8,99.0 264.8,99.0 264.7,97.8 262.8,97.6 261.3,97.1 260.7,98.3ZM9.1,68.5 13.4,72.5 16.8,74.6 25.4,76.1 24.2,81.2 9.1,81.2ZM400.1,118.4 400.1,117.6 400.7,117.6 400.9,115.8 400.6,114.6 401.7,113.9 403.2,114.3 404.1,112.7 405.0,110.3 405.6,108.9 404.2,109.4 400.6,110.0 400.1,108.6 396.4,106.8 395.9,105.3 395.0,103.5 394.2,101.8 391.3,100.6 389.1,100.8 387.0,103.8 385.9,106.3 384.1,107.3 382.6,106.6 382.6,106.6 381.1,109.5 382.0,110.0 383.4,110.2 384.4,109.7 386.5,111.7 384.3,111.7 382.4,112.2 380.5,113.8 378.6,114.7 376.6,114.3 375.8,115.2 376.3,116.4 374.7,117.6 371.3,118.2 367.9,119.6 362.7,117.9 357.9,117.8 355.8,115.6 353.5,114.4 350.3,113.9 349.9,112.9 350.4,111.4 349.2,109.8 346.9,108.9 346.4,107.7 346.4,107.7 345.4,108.1 343.9,109.0 343.1,111.3 340.6,110.8 339.7,113.6 336.5,114.6 337.7,117.2 336.8,117.6 337.0,118.5 333.7,120.5 332.2,121.4 330.9,121.1 330.1,121.4 328.8,122.1 328.9,122.7 328.5,122.9 328.9,124.2 330.2,125.8 330.2,126.4 330.6,127.1 331.8,127.9 333.8,128.5 334.9,130.2 335.1,131.9 335.9,132.6 335.1,134.4 338.0,135.9 339.5,136.1 340.7,136.9 343.9,138.7 346.7,139.1 347.6,138.9 351.3,139.2 352.3,139.1 354.9,137.2 356.8,136.9 358.3,138.5 359.4,139.2 360.0,140.7 358.8,143.0 359.2,144.2 361.0,145.8 360.7,146.8 362.2,147.5 363.2,147.2 363.9,146.4 364.4,146.3 365.7,146.0 368.3,145.1 370.1,145.9 370.0,146.7 371.5,147.5 372.1,148.9 371.1,152.8 376.1,152.8 383.0,147.6 385.9,143.2 387.8,140.3 391.2,136.2 390.5,125.6 391.2,123.0 392.2,122.1 393.4,121.1 395.4,119.3 397.1,119.7 396.9,119.0 398.7,118.4 400.1,118.4ZM392.2,122.1 393.4,121.1 395.4,119.3 397.1,119.7 396.9,119.0 398.7,118.4 400.1,118.4 400.6,119.0 399.3,122.7 397.3,124.0 395.7,124.5 395.2,125.1 394.4,125.3 393.3,125.5 391.8,123.5ZM371.5,147.5 370.0,146.7 370.1,145.9 368.3,145.1 365.7,146.0 364.4,146.3 363.9,146.4 363.2,147.2 362.2,147.5 361.8,149.1 360.4,149.8 359.5,150.0 358.9,151.4 358.4,151.7 358.7,154.1 359.8,155.7 359.4,155.9 360.4,157.6 360.7,158.9 361.2,160.4 360.2,161.9 359.8,162.5 358.5,163.0 358.5,165.6 361.8,166.8 363.1,167.8 363.9,167.7 364.3,167.2 365.4,166.8 374.2,162.4 374.2,147.0ZM354.1,167.5 369.8,177.5 369.8,183.8 365.4,183.8 354.1,172.5ZM367.3,181.9 380.5,182.5 396.2,184.9 396.2,188.2 367.3,186.3ZM372.3,173.7 373.7,172.5 374.7,172.9 375.7,172.6 376.0,171.6 377.9,173.1 380.0,173.2 381.0,171.2 382.0,169.9 384.1,169.9 385.5,170.0 386.1,181.3 371.7,181.3ZM384.9,172.5 394.3,172.5 394.3,182.5 384.9,182.5ZM394.9,171.2 401.2,177.5 401.2,181.3 394.9,181.3ZM398.7,175.4 413.1,178.3 413.1,186.4 399.3,186.3ZM413.1,178.3 430.7,177.5 430.7,190.1 413.1,186.4ZM279.6,138.9 282.4,136.9 283.3,136.2 283.9,134.7 285.4,133.2 286.9,133.6 289.0,134.7 292.3,137.3 294.7,137.4 295.8,137.6 296.9,138.3 298.1,139.6 299.2,140.7 299.1,141.6 299.8,143.0 300.2,143.5 300.9,144.0 301.4,145.6 305.2,146.3 305.5,147.0 306.1,148.3 305.2,149.6 301.4,150.9 297.8,151.4 296.7,151.9 295.8,153.3 294.9,153.6 293.9,153.2 291.5,153.0 290.7,152.7 290.3,153.6 289.9,154.4 288.9,154.4 284.5,148.3 280.7,141.6ZM300.9,144.0 301.4,145.6 305.2,146.3 305.5,147.0 306.1,148.3 305.2,149.6 301.4,150.9 302.8,153.9 302.7,156.0 311.5,149.6 311.5,140.3 305.8,140.3 304.0,142.3ZM306.5,114.4 309.6,113.5 312.7,115.3 314.0,116.7 317.6,116.4 319.1,117.5 319.0,119.0 322.3,120.9 322.8,119.9 324.5,118.8 325.7,120.3 327.9,120.6 326.3,121.8 324.8,122.1 323.4,121.8 323.2,122.7 321.1,122.6 321.8,123.6 322.0,124.6 321.3,126.2 320.4,125.8 319.6,125.8 319.6,124.3 316.8,122.7 315.9,122.9 314.5,121.8 313.9,120.3 312.1,120.2 311.6,119.0 310.2,118.5 309.7,117.8 308.7,118.7 307.6,119.3 306.5,120.0ZM321.3,126.2 322.0,124.6 321.8,123.6 321.1,122.6 323.2,122.7 323.4,121.8 324.8,122.1 326.3,121.8 327.9,122.4 328.7,122.9 330.2,125.8 327.3,126.4 326.3,126.8 325.9,125.1 325.0,124.2 324.5,124.6 323.4,125.5 322.0,126.2ZM290.9,120.3 292.7,120.5 294.7,120.2 294.7,119.1 296.2,120.2 297.2,119.3 298.3,121.2 297.7,124.3 296.4,123.7 294.5,123.6 292.4,122.4 291.0,121.5ZM241.2,92.7 245.0,92.5 246.7,92.1 249.2,89.9 250.1,90.8 250.9,91.0 251.6,88.8 252.0,86.5 251.3,85.5 251.1,83.0 252.0,81.0 253.3,80.0 253.6,77.8 254.5,76.9 255.5,75.3 256.8,73.8 257.3,72.7 258.4,72.9 258.8,71.6 261.2,72.0 262.4,70.7 264.3,71.2 265.7,71.2 268.4,70.5 269.7,68.7 271.8,68.5 272.5,70.7 274.8,69.0 275.7,68.7 276.4,63.9 241.2,63.9ZM272.5,70.7 271.8,71.8 273.8,73.6 272.7,75.3 274.1,77.6 273.3,79.4 274.3,80.8 273.8,82.0 275.7,83.4 274.1,85.5 271.5,88.0 263.8,90.3 261.9,88.0 262.5,82.2 266.3,78.8 266.6,77.6 266.2,77.1 265.8,76.3 266.2,75.3 265.2,74.4 265.7,73.1 263.7,71.6 262.0,70.5 264.3,71.2 265.7,71.2 268.4,70.5 269.7,68.7 271.8,68.5ZM271.3,89.9 271.0,91.0 270.6,93.0 268.3,92.8 266.7,92.8 265.1,92.7 263.8,90.8 266.3,89.0 270.1,89.3ZM238.2,104.9 239.3,104.6 239.6,105.1 241.6,106.6 243.4,107.3 244.0,107.3 245.7,107.7 246.5,108.1 245.7,110.3 245.0,110.6 243.9,112.4 245.0,113.3 244.7,114.6 245.6,115.8 245.5,116.4 243.7,119.0 240.1,118.4 238.5,118.4 234.3,117.5 233.1,116.7 228.7,108.9 234.9,105.6ZM239.3,104.6 239.6,105.1 241.6,106.6 243.4,107.3 244.0,107.3 243.9,106.3 243.7,105.3 243.6,104.8 244.0,104.1 243.7,103.3 244.7,102.8 245.1,101.1 244.9,100.1 240.0,100.6 238.7,104.0ZM243.9,112.4 245.0,110.6 245.7,110.3 248.2,110.5 248.1,111.1 249.2,111.4 249.2,112.1 248.6,112.4 247.7,112.2 246.7,112.9 245.4,113.2 244.7,112.9ZM251.5,106.0 252.5,105.6 254.1,104.6 255.0,104.6 256.5,105.3 257.2,106.1 258.3,105.8 259.9,107.3 258.7,108.2 257.7,108.4 256.9,108.4 255.0,108.1 253.3,108.2 251.9,107.3ZM253.3,113.6 255.4,113.6 255.9,112.2 258.3,113.0 259.9,113.0 261.7,112.7 263.2,114.1 264.6,115.0 264.4,116.0 264.9,116.3 264.3,117.5 264.4,118.4 262.0,119.1 261.3,118.1 259.4,118.2 258.2,117.6 256.3,116.7 255.0,115.5 254.0,114.4ZM264.3,117.5 264.9,116.3 264.4,116.0 265.4,116.1 266.9,116.4 268.3,116.4 270.3,115.6 272.1,116.4 272.6,117.5 271.5,119.6 268.9,119.3 269.6,120.0 268.8,120.8 270.7,121.5 270.1,126.4 263.8,129.9 260.0,122.7 261.5,122.6 262.0,121.8 262.5,121.1 262.5,120.6 264.6,120.3 264.9,120.0 264.4,118.4ZM263.9,109.0 264.7,107.1 266.3,105.3 265.7,103.8 267.9,103.3 270.7,103.8 274.6,104.3 276.1,103.0 278.6,102.5 280.1,104.0 281.6,105.8 283.9,106.6 286.0,107.1 286.5,108.4 286.0,110.0 284.1,111.1 283.3,112.9 282.4,113.9 276.4,116.0 273.3,114.1 272.2,113.9 271.6,112.9 271.6,111.9 272.2,111.1 272.7,110.0 271.5,109.4 270.0,109.2 266.8,109.7 264.7,109.5ZM228.8,127.9 233.4,128.9 233.9,129.9 234.1,130.8 234.4,132.2 234.8,132.5 234.6,133.0 232.9,133.3 232.3,133.9 231.7,134.0 231.6,135.0 230.1,135.5 229.7,136.2 228.5,136.6 227.3,136.8 225.3,137.8 225.3,139.3 225.3,139.8 225.3,140.2 221.1,141.6 221.1,145.0 218.8,144.7 220.5,147.9 217.6,147.6 214.9,147.7 211.1,148.3 213.6,138.9 221.1,132.0 227.4,127.1ZM233.4,128.9 233.9,129.9 234.1,130.8 234.4,132.2 234.8,132.5 234.6,133.0 232.9,133.3 232.3,133.9 231.7,134.0 231.6,135.0 230.1,135.5 229.7,136.2 228.5,136.6 227.3,136.8 225.3,137.8 225.3,139.3 225.3,139.8 230.1,143.0 238.5,148.8 240.1,150.0 240.2,150.7 241.6,150.6 243.4,150.1 246.0,148.5 251.2,145.0 250.8,143.0 249.1,143.8 247.9,141.5 248.4,140.2 248.6,138.9 248.5,137.0 248.1,135.8 246.7,132.7 245.6,131.6 246.6,129.7 246.7,128.5 246.7,126.5 246.2,124.9 234.9,127.1ZM219.0,159.6 219.9,159.2 220.5,159.5 221.8,159.4 221.9,159.7 222.5,159.6 223.4,160.1 224.9,159.7 225.7,160.6 225.9,161.9 226.3,162.0 227.5,162.2 228.5,162.3 229.6,162.0 230.8,162.9 231.8,162.5 232.7,162.9 232.9,161.9 232.7,161.1 234.9,161.1 236.2,161.1 236.1,161.5 236.7,162.2 236.7,163.0 236.8,164.1 237.1,164.6 236.8,165.7 237.0,166.3 237.6,167.2 237.5,171.2 216.1,171.2 216.1,161.8 217.3,161.1 217.9,160.5 218.1,159.9ZM254.4,168.7 254.4,169.6 255.5,170.9 256.3,172.1 256.9,171.0 259.4,169.7 260.7,168.7 262.4,169.6 264.3,170.0 265.4,169.2 267.3,168.8 267.9,168.3 270.6,168.5 271.3,169.5 272.8,169.5 274.8,170.6 276.2,170.5 278.1,170.2 278.8,169.7 280.5,168.1 278.9,166.0 277.5,165.2 278.6,164.4 278.7,163.0 277.9,161.5 277.2,159.9 276.9,159.6 276.2,159.9 274.8,162.8 272.6,162.9 271.3,163.2 269.8,163.0 268.6,161.9 267.1,164.7 266.2,164.2 265.7,163.7 265.8,162.3 264.9,161.0 264.1,161.2 263.4,161.7 262.5,163.0 260.2,163.6 259.8,163.7 258.7,165.1 257.2,165.6 255.4,165.7 254.8,167.0ZM280.5,168.1 278.9,166.0 277.5,165.2 278.6,164.4 278.7,163.0 279.2,161.7 279.7,161.3 280.5,159.7 281.5,159.0 281.9,156.8 283.8,156.1 284.5,156.7 285.5,156.7 286.4,156.7 287.5,157.2 289.4,159.2 290.3,159.0 291.4,161.8 301.4,159.2 301.4,162.4 291.4,177.5 288.4,177.1 287.6,176.1 287.6,171.5 286.4,170.0 285.9,170.2 284.4,170.5 283.6,170.0 282.5,169.5 281.1,169.0 281.1,168.3ZM250.1,180.0 251.1,181.3 251.6,180.8 252.0,180.5 252.5,181.0 252.9,181.2 253.9,180.6 254.4,181.2 255.3,180.4 256.0,179.9 256.3,179.4 257.0,176.5 258.2,175.9 258.5,174.6 258.5,172.9 258.9,172.0 259.3,171.4 259.4,170.6 257.7,170.4 256.9,171.0 256.3,172.1 255.5,172.6 254.1,172.2 252.6,172.1 252.5,173.4 253.8,173.2 254.1,173.5 253.5,175.0 254.1,175.8 253.5,177.6 251.9,178.0 251.1,178.1 250.6,178.5 251.1,179.3 248.7,178.8ZM278.7,176.2 283.5,178.9 283.6,179.6 285.4,180.9 287.6,181.3 287.6,188.2 286.8,188.0 285.8,188.7 283.6,189.2 283.3,189.6 282.0,189.7 280.5,189.4 279.6,189.5 279.2,187.8 278.5,186.8 277.4,186.6 276.6,186.2 275.3,185.8 274.7,185.4 274.1,183.9 273.0,182.5 273.1,180.5 274.7,179.3 274.5,178.0 274.8,177.1 274.3,176.4 274.8,176.3 276.2,176.3ZM279.6,189.5 280.5,189.4 282.0,189.7 283.3,189.6 283.6,189.2 285.8,188.7 286.8,188.0 288.9,188.2 287.6,196.5 282.6,207.0 277.6,209.7 276.5,209.3 276.2,206.2 275.3,203.4 276.6,201.9 277.4,200.0 277.2,198.7 277.4,196.1 275.3,195.1 274.2,195.1 274.1,193.7 277.9,192.6 278.6,193.3 279.5,193.4 279.5,192.8 279.6,192.2 280.0,192.2 279.6,190.9ZM250.9,196.9 251.5,196.7 252.3,196.4 253.9,197.0 254.0,197.0 259.2,196.9 260.0,197.6 263.1,197.8 265.3,197.2 266.3,196.9 267.2,197.0 267.7,197.4 267.9,197.4 269.3,197.8 270.8,201.1 271.3,202.4 273.1,203.2 271.3,204.1 270.2,205.2 269.8,206.0 268.7,206.6 268.6,207.3 268.4,207.7 267.6,208.0 266.6,208.0 265.4,207.4 264.8,207.7 264.6,208.4 263.9,208.8 263.3,209.3 262.4,209.4 262.2,209.0 262.4,208.2 261.5,206.9 261.2,206.8 261.2,211.6 260.0,212.4 259.4,212.4 258.5,212.3 258.0,212.2 257.7,211.2 256.7,211.9 248.7,211.1 248.7,196.5ZM124.0,156.8 124.8,157.2 125.7,157.4 126.3,158.5 127.0,158.6 127.7,157.6 128.5,157.6 129.7,156.3 131.8,156.2 132.1,153.5 124.5,153.5 125.5,155.1ZM128.7,161.0 129.7,161.2 130.6,161.1 131.3,161.3 132.1,162.4 134.6,164.9 137.1,162.4 139.1,164.1 139.1,165.3 138.5,166.0 138.3,167.5 128.3,163.7ZM139.1,165.3 138.5,166.0 139.1,164.1 140.8,163.0 141.5,161.1 145.4,160.1 145.6,161.0 144.7,161.8 144.2,163.4 145.0,164.2 145.4,164.9 145.4,165.7 145.9,165.8 147.5,166.1 149.1,167.3 151.3,167.1 151.8,167.3 151.1,168.5 151.1,169.4 151.8,170.6 151.1,171.5 148.6,172.9 149.0,174.1 148.4,174.4 148.4,175.3 149.1,176.4 148.5,180.4 147.4,180.4 144.7,181.7 144.7,182.7 143.4,184.4 143.7,184.9 143.4,186.2 144.4,187.0 145.5,187.5 145.6,187.7 147.7,188.9 149.0,188.8 151.9,188.0 154.3,187.3 154.3,188.9 155.4,190.8 157.4,191.4 158.8,192.0 160.3,192.4 160.3,193.2 161.7,195.6 163.1,195.6 163.1,196.9 164.1,198.1 163.2,200.3 162.0,199.6 158.7,201.2 157.5,203.3 159.9,205.6 162.2,205.7 163.9,207.2 162.7,209.8 166.3,210.2 167.7,208.0 168.9,208.5 168.9,210.0 163.9,214.1 164.7,213.9 166.0,215.0 166.4,215.0 168.7,216.6 169.4,217.5 168.7,219.9 171.0,222.2 160.9,261.0 135.8,261.0 133.3,175.0 137.1,167.5ZM160.0,164.2 160.7,166.2 159.4,166.6 159.5,168.5 160.0,168.5 160.9,168.7 160.9,171.7 161.5,173.4 162.8,173.4 165.3,172.6 168.3,172.4 167.8,168.8 168.4,167.5 162.2,163.7Z" fill="#ff7369" stroke="#fff" stroke-width=".6" stroke-linejoin="round"/><path d="M275.3,203.4 276.6,201.9 277.4,200.0 277.2,198.7 277.4,196.1 275.3,195.1 274.2,195.1 272.5,195.2 271.3,195.9 270.0,197.8 267.9,197.4 269.3,197.8 270.8,201.1 271.3,202.4 273.1,203.2Z" fill="#c8c8c8" stroke="#fff" stroke-width=".6"/><path d="M81.6,108.1 116.8,108.1 117.5,108.6 123.8,109.7 129.7,111.4 132.7,113.9 131.4,119.0 136.8,116.9 140.5,115.6 142.2,114.4 147.0,113.9 148.4,111.7 149.4,110.6 150.6,110.6 151.1,113.3 151.5,115.2M59.3,69.4 59.3,88.4 61.8,89.0 63.7,91.0 66.2,89.3 68.8,91.9 71.0,95.2 73.1,96.4 72.7,98.9M89.3,132.7 92.3,132.5 96.9,134.4 100.4,134.4 102.6,133.7 104.8,136.1 106.8,137.6 108.6,136.5 111.4,139.6 114.2,141.8M120.5,156.7 120.5,152.4 122.0,152.4 124.4,152.4 125.4,151.5M151.8,170.6 155.1,169.9 157.0,170.2 157.4,170.0 160.0,168.5M163.2,200.3 163.9,203.2 166.4,204.0 167.7,208.0M267.6,133.9 267.6,147.0 282.6,147.0M246.7,126.4 248.1,135.8 250.6,131.9M251.2,145.0 256.1,145.1 266.3,150.2 266.3,155.1 264.2,156.9 264.4,159.5 264.9,161.0M266.3,150.2 267.6,149.6 267.6,147.0M281.9,156.8 282.6,153.5 284.4,152.2M241.6,150.6 241.6,153.6 240.7,155.3 237.5,156.0 236.7,156.1 235.6,155.9 233.7,156.6 232.3,158.0 230.7,159.2 229.4,161.9M230.1,143.0 228.0,143.1 228.7,148.8 229.3,154.4 224.0,155.7 221.5,155.5 221.0,156.7 220.5,156.0 217.9,154.0 215.5,154.5M221.0,156.7 221.8,159.4 219.0,159.6 215.2,159.4M256.1,145.1 255.4,148.3 255.6,148.7 255.6,154.8 253.7,155.1 253.1,156.8 254.1,158.9 255.0,159.7 254.9,161.0 255.5,162.5 255.4,165.7M239.6,167.1 239.6,165.1 240.7,162.0 240.7,160.3 241.3,158.0 244.7,158.5 247.5,158.9 251.6,158.6 253.1,156.8 254.1,158.9 252.9,162.2 251.1,165.4 247.7,167.0 246.9,169.0M240.7,160.3 239.0,160.0 237.3,158.2 236.2,156.2M237.6,167.2 237.2,161.8 237.3,161.1M248.2,172.1 250.4,172.1 252.5,172.1 254.1,172.2 255.5,172.6 256.3,172.1 255.5,170.9 254.4,169.6 254.4,168.7 254.8,167.0 255.4,165.7M247.9,173.5 250.4,173.6 250.4,172.1M251.5,182.7 252.4,182.4 256.7,182.4 257.4,184.0 258.2,185.2 260.0,185.0 260.5,184.0 261.4,183.7 262.0,183.7 261.9,184.2 263.4,184.2 263.7,187.0 264.1,189.0 266.2,188.7 266.7,189.2 268.1,189.2 268.6,190.4 270.3,189.6 271.6,190.5 272.5,191.7 273.5,191.8 273.3,190.4 271.8,189.9 272.0,186.6 274.7,185.4 274.1,183.9 273.0,182.5 273.1,180.5 273.0,179.1 272.8,177.0 273.3,176.6 273.6,175.3 273.7,174.2 275.3,172.2 274.8,170.6M250.9,196.9 259.2,196.9 263.1,197.8 265.3,197.2 263.8,195.2 263.7,191.3 266.3,191.3 266.2,188.7M265.3,197.2 267.2,197.0 267.9,197.4 270.0,197.8 271.3,195.9 272.5,195.2 274.2,195.1 274.1,193.7 277.9,192.6 277.2,192.3 277.7,190.9 278.0,188.6 277.4,186.6M279.6,189.5 279.2,187.8 278.5,186.8 277.4,186.6 277.7,190.9 277.2,192.3 277.9,192.6 278.6,193.3 280.2,196.3 281.1,195.2 281.0,193.4 280.2,192.0M278.7,176.2 278.7,174.9 280.1,172.6 279.6,170.5 278.8,169.7 278.1,170.2 274.8,170.6 273.7,174.2 273.3,176.6 274.8,176.3M256.7,211.9 258.5,212.3 260.0,212.4 261.2,211.6 261.2,206.8 262.4,208.2 264.6,208.4 267.6,208.0 269.8,206.0 271.3,204.1 273.1,203.2 275.3,203.4 276.2,206.2 276.5,209.3M247.0,98.0 248.6,98.0 248.6,98.3 250.0,99.0 253.9,100.1 254.3,101.1 254.5,102.1 254.6,103.0 255.0,104.6 254.1,104.6 252.5,105.6 251.5,106.0 251.9,107.3 253.3,108.2 252.5,110.3 249.2,110.8 248.2,110.5 245.7,110.3M254.6,103.0 255.0,104.6 256.5,105.3 257.2,106.1 258.3,105.8 259.9,107.3 261.3,107.7 263.3,107.3 264.6,107.9 264.7,107.1 266.3,105.3 265.7,103.8 265.8,102.0 265.7,100.6 266.2,99.9 265.7,99.4 264.8,99.0M262.8,97.6 264.7,97.8 264.8,99.0 265.7,99.4 266.2,99.9 268.2,99.2 269.6,97.6 271.6,95.9 268.3,92.8 266.7,92.8 265.1,92.7M265.7,100.6 265.8,102.0 265.7,103.8 267.9,103.3 270.7,103.8 274.6,104.3 276.1,103.0 274.8,98.3 275.0,96.9 271.6,95.9M248.2,110.5 249.2,110.8 252.5,110.3 253.3,108.2 255.0,108.1 256.9,108.4 257.7,108.4 258.7,108.2 259.9,107.3 261.3,107.7 263.3,107.3 264.6,107.9 263.9,109.0 264.7,109.5 261.7,112.7 259.9,113.0 258.3,113.0 255.9,112.2 253.5,112.1 251.8,111.6 249.2,112.1 249.2,111.4 248.1,111.1M264.7,109.5 266.8,109.7 270.0,109.2 271.5,109.4 272.7,110.0 272.2,111.1 271.6,111.9 271.6,112.9 272.2,113.9 273.3,114.1 272.1,116.4 270.3,115.6 268.3,116.4 265.4,116.1 264.4,116.0 264.6,115.0 263.2,114.1 261.7,112.7M269.6,109.4 272.2,111.1M245.6,115.8 244.7,114.6 245.0,113.3 245.4,113.2 246.7,112.9 247.7,112.2 248.6,112.4 249.2,112.1 251.8,111.6 253.5,112.1 253.4,113.6M225.0,119.0 225.9,119.0 227.9,119.1 227.7,120.5 227.4,121.7 227.3,123.5 226.8,125.5 226.8,126.2M260.5,119.1 262.0,119.1 262.0,120.3 262.5,121.1 261.5,122.6M268.8,120.8 269.6,120.0 268.9,119.3 271.5,119.6M288.4,119.7 290.9,120.3 291.0,121.5 292.4,122.4 291.5,124.9 291.8,126.1 289.9,125.8 287.9,126.2 286.4,126.7 284.8,126.8 284.1,126.5 282.2,126.7 282.2,127.4 281.1,128.1M282.2,127.4 281.9,129.2 281.1,131.6 280.7,132.0 280.0,136.9M289.9,125.8 289.3,126.1 287.6,130.1 284.9,131.5 282.4,133.0 281.0,132.5 280.7,132.0M282.4,133.0 285.4,133.2 282.6,134.1 283.9,135.5 283.3,136.2 282.4,136.9 280.1,137.0M291.8,126.1 293.3,127.8 294.0,128.2 293.2,130.7 294.0,132.0 295.5,132.7 296.2,133.9 296.0,134.9 296.4,135.5 297.2,136.3M294.7,137.4 295.8,137.6 296.0,136.1M301.4,150.9 302.8,153.9M303.8,126.1 305.8,125.0 308.1,124.9 310.5,125.8 312.0,127.1 313.0,127.1 312.9,130.1 312.1,131.1 312.6,131.3 312.1,132.1 312.6,134.1 313.6,134.3 313.7,135.2 312.6,136.5 313.2,137.2 314.6,138.5 315.0,140.0 315.5,140.0 315.6,140.6 313.9,141.4 313.4,142.8M313.0,127.1 314.2,128.8 317.1,127.4 319.6,125.8 320.4,125.8 321.3,126.2 321.6,126.5 323.2,126.1 325.0,124.2 326.3,126.8 327.3,126.4 330.2,125.8 329.8,126.4 326.3,127.1 325.7,127.7 326.0,128.9 325.4,129.7 325.5,130.2 325.2,130.7 323.9,130.6 324.4,131.5 323.7,131.9 323.2,133.6 322.3,133.9 321.3,134.0 320.1,134.4 319.5,135.2 319.4,136.3 317.0,136.8 312.6,136.5M333.8,128.5 332.7,129.7 331.3,129.9 329.3,129.7 328.7,130.2 329.2,131.5 329.7,132.3 330.7,133.0 329.5,133.9 329.8,134.8 328.4,136.2 327.5,137.6 326.3,139.1 324.8,139.0 323.4,140.4 324.3,141.0 324.4,142.0 325.0,142.7 325.3,143.8 322.5,143.8 321.8,144.7M338.0,135.9 337.2,136.6 336.7,137.8 338.0,138.4 340.7,139.8 342.5,140.0 343.2,140.7 344.1,140.8 346.7,141.1 346.7,139.1M347.6,138.9 348.7,140.7 351.6,140.6 351.8,139.6 351.3,139.2M346.7,141.1 347.0,141.9 348.9,141.7 348.4,143.0 352.1,143.0 351.4,144.2 352.0,144.7 352.4,147.9 352.1,148.7M352.4,147.9 353.1,146.6 353.0,146.0 353.3,145.6 353.3,144.2 354.3,144.4 354.9,143.4 354.9,142.7 355.6,141.6 355.5,140.8 357.2,139.9 358.0,140.2 358.3,138.5M364.4,146.3 365.2,147.3 365.7,148.5 367.2,148.5 367.7,149.7 366.9,150.1 367.1,151.0 368.7,152.2 370.0,154.0 370.8,154.9 371.2,155.8 371.0,157.1 371.2,158.0 369.4,161.1 368.2,161.3 367.2,161.8M361.8,149.1 362.3,150.2 363.3,150.2 363.1,152.8 364.9,152.2 367.6,154.2 368.7,155.3 368.6,156.4 365.4,157.1 364.6,158.1M363.1,167.8 363.9,167.7 364.3,167.2M297.9,112.2 302.7,111.4 303.0,113.6 306.3,114.4 306.5,114.4 309.6,113.5 312.7,115.3 314.0,116.7 317.6,116.4 319.1,117.5 319.0,119.0 322.3,120.9 322.8,119.9 324.5,118.8 325.7,117.8 328.4,118.2 329.3,117.0 331.6,117.5 335.4,117.6 337.0,118.5M324.5,118.8 325.7,120.3 327.9,120.6 328.7,122.9M303.8,126.1 303.8,121.1 302.4,120.3 302.7,118.8 304.1,118.5 305.8,120.0 306.5,120.0 307.6,119.3 308.7,118.7 309.7,117.8 310.2,118.5 311.6,119.0 312.1,120.2 313.9,120.3 314.5,121.8 315.9,122.9 316.8,122.7 319.6,124.3 319.6,125.8M290.9,120.3 292.7,120.5 294.7,120.2 292.7,122.4 294.5,123.6 296.4,123.7M395.2,125.1 395.7,124.5 397.3,124.0M359.8,162.5 360.2,161.9 361.2,160.4 360.7,158.9M250.1,90.8 250.9,91.0 251.6,88.8 252.0,86.5 251.3,85.5 251.1,83.0 252.0,81.0 253.3,80.0 253.6,77.8 254.5,76.9 255.5,75.3 256.8,73.8 257.3,72.7 258.4,72.9 258.8,71.6 261.2,72.0 262.4,70.7 262.0,70.5 263.7,71.6 265.7,73.1 265.2,74.4 266.2,75.3 265.8,76.3 266.2,77.1M343.2,107.1 346.4,107.7M373.7,172.5 374.7,172.9 375.7,172.6 376.0,171.6 377.9,173.1 380.0,173.2 381.0,171.2 382.0,169.9 384.1,169.9M413.1,178.3 413.1,186.4M148.5,180.4 147.4,180.4 144.7,181.7 143.4,186.2 145.6,187.7 147.7,188.9M141.8,175.1 141.3,175.4 140.5,174.5 139.1,174.5 137.2,173.2M135.4,179.3 136.7,181.2 137.7,178.8 141.5,177.0 141.8,175.1 144.1,176.4 145.1,178.0 148.4,178.4 148.5,180.4M149.8,191.3 148.9,194.3 149.7,195.9 148.9,197.3 147.9,198.2 149.5,198.2 150.4,199.6 149.9,200.9 152.0,204.0 151.8,205.7 150.4,206.4 150.1,209.0 149.6,210.4 148.7,211.7 148.4,214.2 147.7,215.7 148.6,218.4 148.2,218.1 147.7,221.6 147.0,223.2 146.6,226.4 146.2,227.7 146.0,229.2 146.2,231.3 145.7,231.5 146.0,233.1 146.5,233.7 146.1,234.4 146.9,235.3 146.2,236.1 146.0,238.6 145.4,239.8 145.2,241.8 144.1,242.4 144.2,244.7 145.5,244.7 146.0,246.9 149.0,247.0 150.1,247.4M157.5,203.3 153.0,202.8 152.0,204.0M163.9,214.1 163.3,216.6 162.9,219.2M149.8,191.3 148.9,194.3M164.6,167.5 163.4,170.0 163.9,172.9M167.8,168.8 168.3,172.4M132.1,162.4 132.6,162.9 132.2,164.8M128.7,161.0 129.7,161.2 130.6,161.1 131.3,161.3M124.4,152.4 124.3,154.9M124.0,156.8 123.4,157.4 123.2,157.7" fill="none" stroke="#fff" stroke-width=".6" stroke-linejoin="round"/></g><path d="M25.3,78.0 27.3,76.1 29.8,75.0 26.9,72.3 31.1,69.0 35.4,67.2 39.5,65.6 45.5,66.7 50.5,67.8 54.3,68.3 59.3,69.4 64.9,71.0 67.4,69.4 71.2,69.4 75.0,68.1 79.4,69.6 83.8,69.0 89.4,71.0 93.2,72.3 98.8,72.5 103.2,71.2 108.2,73.6 112.6,73.3 115.7,71.8 116.4,65.1 119.5,66.5 121.4,69.8 124.5,71.4 127.7,72.5 129.2,69.0 133.3,69.0 133.9,72.0 131.4,75.9 127.7,76.1 126.4,78.6 128.0,80.8 125.2,81.2 122.0,83.2 118.3,86.1 117.5,90.8 120.1,94.1 124.5,94.8 129.6,97.5 132.9,97.8 133.1,101.1 135.6,104.0 137.1,104.0 137.3,100.6 136.8,98.5 140.0,95.2 139.2,90.5 138.7,87.5 138.3,84.4 142.1,84.6 145.9,85.5 148.4,87.1 149.0,89.9 151.5,92.1 154.6,89.0 156.5,92.3 159.0,95.4 160.9,97.6 164.3,98.9 166.3,102.3 165.3,104.1 160.9,106.1 152.8,106.1 148.4,109.7 150.3,108.1 154.9,107.7 155.6,108.9 154.4,110.5 155.3,112.4 158.4,113.3 159.7,113.8 160.9,113.0 157.2,115.2 153.4,116.6 153.3,114.1 151.5,115.2 148.1,116.6 147.4,118.2 148.4,119.3 146.5,120.0 143.4,121.1 143.1,122.7 141.5,122.7 141.1,125.2 140.2,124.2 140.8,126.7 141.5,128.8 139.8,129.8 137.7,130.9 135.2,133.0 134.2,135.5 135.2,138.3 135.8,140.6 135.3,142.7 134.3,142.6 133.3,140.6 132.4,138.9 132.3,137.3 130.8,136.1 128.3,135.7 125.2,135.7 123.9,135.9 124.0,137.3 122.6,137.4 120.1,136.8 117.6,136.9 115.1,138.5 114.0,139.9 113.7,142.3 113.5,146.3 114.2,148.7 115.4,150.5 117.5,151.9 120.1,151.4 122.0,150.9 122.6,148.9 123.2,148.0 125.8,147.6 127.2,147.9 126.4,150.2 125.7,151.5 125.4,153.3 124.7,154.9 126.2,154.9 128.9,154.9 130.6,155.0 131.8,156.0 131.4,158.6 131.2,161.1 132.7,162.9 134.2,163.8 136.3,163.0 138.3,163.4 139.2,164.2 139.3,165.1 138.0,165.6 137.6,164.2 135.8,164.6 135.3,165.8 133.9,165.3 132.2,164.8 131.3,163.6 129.4,162.5 128.4,161.1 127.5,159.9 126.3,158.6 124.2,158.0 121.6,157.4 119.5,155.3 117.4,154.5 115.1,155.1 112.6,154.5 108.8,152.8 106.3,151.8 104.1,149.6 103.8,147.3 103.2,145.2 100.7,142.7 99.1,140.8 97.4,139.2 95.4,137.7 94.4,135.4 92.3,133.9 92.9,136.2 94.7,138.9 96.2,141.0 97.6,144.0 98.3,145.8 97.1,144.3 95.4,143.2 95.3,141.5 92.9,139.2 92.2,136.9 90.7,135.5 89.3,132.7 87.5,130.6 84.9,129.8 83.3,127.2 82.5,125.2 80.9,122.7 80.2,121.4 80.4,119.0 80.0,116.7 80.7,112.5 79.9,109.2 81.6,109.2 82.1,108.1 80.6,106.4 77.5,105.3 75.8,103.6 74.7,100.6 72.7,98.9 72.1,96.4 69.1,93.9 66.9,92.1 64.9,92.1 62.4,90.6 59.9,89.5 56.2,89.0 52.4,87.3 48.6,88.2 46.1,90.5 44.9,89.0 42.7,90.8 42.7,93.0 39.6,96.2 36.1,96.9 32.9,98.0 29.6,98.9 31.7,97.5 35.2,95.5 37.7,93.4 39.2,91.2 37.3,91.2 33.2,91.4 32.7,89.0 29.4,87.6 28.5,85.2 30.1,82.6 34.2,80.6 31.7,80.0 27.3,80.0 25.3,78.0ZM181.6,89.1 177.9,87.5 175.3,86.1 172.8,82.6 171.2,80.2 169.7,77.1 168.7,74.6 169.4,71.8 172.2,70.3 168.4,67.8 169.1,65.6 166.6,62.8 164.1,57.4 159.0,53.9 150.3,53.9 144.6,48.0 152.8,42.4 160.9,38.0 172.2,36.8 181.0,37.4 194.8,32.7 207.3,34.3 211.1,37.4 219.9,38.6 214.2,43.3 211.7,47.5 213.0,51.5 208.8,53.3 211.1,56.7 208.6,61.6 206.1,63.2 208.0,65.1 208.2,68.1 204.2,70.1 199.2,72.5 195.4,73.6 192.9,76.3 189.1,78.0 186.0,79.2 184.8,82.2 182.7,86.1 181.6,89.1ZM161.8,110.3 165.9,110.3 169.7,111.7 170.2,110.3 169.1,107.6 166.6,106.9 166.4,103.8 164.2,105.3 161.9,108.9ZM129.7,147.1 131.4,145.8 133.3,145.4 136.5,146.2 139.0,147.6 141.5,148.7 143.1,149.3 141.1,149.7 138.7,149.7 137.7,147.6 135.2,147.1 132.7,146.6 131.4,147.0ZM142.9,149.8 145.2,149.7 147.7,149.8 150.4,151.4 148.4,151.9 146.5,152.7 144.9,152.0 142.9,151.8 144.9,151.0ZM138.0,151.7 140.5,152.0 139.3,152.6 138.1,151.9ZM151.9,151.5 153.9,151.7 153.8,152.2 151.9,152.2ZM139.2,164.2 140.8,163.0 141.5,161.7 143.1,160.9 144.9,160.1 146.0,159.4 147.0,160.0 146.1,161.1 146.4,162.2 145.9,163.4 147.1,162.7 146.6,161.3 148.2,160.6 148.6,159.4 150.6,161.3 153.1,161.5 155.5,161.7 158.5,161.5 157.5,162.4 159.8,164.3 162.0,164.9 163.9,166.8 166.9,167.5 169.1,167.8 171.3,169.7 172.2,170.6 172.8,172.6 173.5,173.7 175.0,175.6 176.2,175.8 179.9,177.0 180.4,178.6 184.1,178.6 187.3,179.6 189.5,181.0 191.7,181.5 192.4,183.9 192.2,186.3 189.8,188.9 187.9,191.4 187.3,194.0 187.0,196.8 186.3,199.9 184.9,202.9 183.5,204.4 180.2,204.9 177.4,206.4 175.3,208.2 175.2,211.3 174.0,212.7 172.6,215.2 170.6,217.0 169.2,218.9 167.3,220.6 165.7,220.6 163.7,220.1 162.9,219.2 162.8,219.9 164.4,221.2 165.1,222.8 163.7,225.4 161.8,226.1 159.4,226.5 158.0,227.3 158.2,229.1 156.2,229.8 154.5,229.7 155.4,231.6 156.5,231.9 155.4,232.4 154.4,234.0 152.8,235.6 151.8,236.5 151.4,237.6 152.6,238.7 153.9,239.0 151.9,241.4 150.9,243.9 149.5,244.7 149.9,246.5 150.6,247.4 149.0,247.4 150.1,247.9 150.6,250.1 152.1,251.8 150.1,252.0 147.7,251.8 145.5,250.8 144.2,249.4 142.5,248.2 141.8,246.2 141.3,241.4 142.5,238.1 141.5,237.1 142.9,234.2 144.4,234.8 145.0,231.6 143.6,233.1 144.1,229.7 143.7,227.3 144.4,223.8 145.1,221.5 146.5,218.0 146.4,215.0 146.6,212.3 147.2,210.5 147.9,205.2 148.2,202.3 148.0,198.2 146.6,197.6 144.1,195.8 141.8,194.3 140.3,192.4 139.5,190.4 138.2,188.1 137.1,185.6 135.3,183.2 134.3,182.7 134.1,180.9 135.4,179.3 136.1,178.4 134.7,177.8 134.7,176.3 135.7,174.0 137.1,172.9 137.8,171.7 139.1,170.2 139.2,169.1 139.0,166.6 138.5,166.0ZM228.8,128.1 230.4,128.8 233.4,128.9 236.1,127.9 238.1,126.9 240.2,126.7 243.1,126.5 246.7,126.5 248.1,125.9 249.9,126.4 250.1,127.8 249.1,128.9 249.8,129.9 248.9,130.9 250.1,131.6 252.1,132.3 255.3,133.0 255.9,134.3 258.2,134.8 260.0,135.8 261.4,135.0 261.0,133.7 262.4,132.5 264.9,132.6 267.6,133.6 270.8,134.4 273.5,134.6 276.4,134.4 278.6,134.8 279.2,134.6 280.0,136.9 279.1,138.9 278.4,139.2 276.9,136.3 278.0,138.7 279.0,141.5 281.0,144.4 282.5,147.0 282.9,148.3 283.3,151.4 284.4,152.2 285.5,154.9 287.9,156.7 289.7,158.6 290.5,159.4 290.3,160.5 292.2,161.9 294.7,161.4 296.4,160.9 298.6,160.4 300.2,159.9 300.3,161.1 300.2,161.9 299.7,163.4 298.3,166.2 297.2,168.3 296.0,169.7 294.7,171.4 293.4,172.5 291.5,173.6 289.9,175.4 288.6,176.8 287.5,177.6 286.5,179.1 285.9,180.4 285.4,181.3 284.9,183.2 285.6,183.9 285.4,185.7 286.3,187.7 286.8,188.0 287.0,189.9 287.1,192.9 287.4,193.6 287.0,194.5 286.5,195.4 284.5,196.7 283.1,197.3 281.7,198.7 280.4,199.9 279.9,200.4 280.4,202.1 280.6,203.2 280.9,205.3 280.1,206.4 277.6,207.6 277.1,208.5 277.4,210.5 277.0,211.5 275.5,213.0 274.0,215.3 272.5,216.8 270.7,218.2 269.3,218.8 268.6,219.4 267.6,219.4 265.8,219.1 264.6,219.2 263.2,219.8 261.4,220.5 260.3,220.1 259.3,219.5 259.0,218.4 259.0,216.1 258.3,214.8 257.7,213.7 256.7,211.9 255.8,210.8 255.3,209.8 254.6,207.6 254.3,205.6 254.3,204.0 254.1,203.2 253.0,201.6 252.0,199.1 251.0,198.0 250.9,196.1 251.0,195.0 251.4,193.8 251.9,192.7 253.3,190.1 253.4,189.2 253.0,188.1 252.4,186.6 252.8,185.8 252.1,183.8 251.5,182.7 251.6,182.2 251.1,181.3 250.1,179.9 248.9,178.7 248.0,177.6 247.2,176.4 247.5,175.6 247.9,173.5 248.2,172.1 248.5,171.1 248.0,170.4 247.4,170.1 246.9,169.4 245.6,169.5 245.1,169.4 244.6,169.7 243.6,169.6 243.0,168.8 242.5,168.0 241.6,167.1 239.6,167.1 238.6,167.3 237.6,167.6 235.6,168.3 234.8,168.7 233.7,169.1 232.6,168.7 231.2,168.5 230.4,168.5 228.9,168.7 226.8,169.6 226.5,169.5 224.9,169.0 223.7,168.0 222.6,167.3 221.9,166.5 221.5,166.2 220.6,165.8 220.0,165.2 219.8,164.7 219.6,163.8 219.0,163.0 218.5,162.5 217.9,162.2 217.3,161.1 216.5,160.5 216.0,160.5 215.7,160.1 215.4,159.6 215.2,159.4 215.1,158.3 214.7,156.8 214.1,156.4 214.6,156.2 215.2,155.3 215.5,154.6 216.0,153.5 216.0,152.0 215.6,150.1 215.7,149.4 215.5,148.8 214.7,148.3 214.9,147.7 215.7,146.0 216.1,144.7 217.3,143.6 217.6,142.8 218.1,141.2 218.9,140.8 219.8,139.5 220.4,138.9 221.5,138.8 222.5,137.8 223.2,137.4 224.2,136.3 223.9,134.6 224.4,133.4 224.5,132.6 225.3,131.8 226.5,131.1 227.5,130.5 228.4,129.1 228.8,128.1ZM298.3,190.8 299.1,192.2 299.6,194.2 299.2,195.2 298.7,196.7 298.3,197.8 297.7,199.9 297.1,201.1 296.3,203.6 295.8,206.0 295.3,206.9 294.3,207.3 293.2,207.8 292.4,207.4 291.4,207.0 291.2,206.4 291.0,205.2 290.5,204.1 290.7,203.2 291.3,202.0 291.3,201.5 291.9,200.6 292.0,199.6 291.7,199.1 291.4,198.2 291.4,197.0 291.8,196.4 291.9,195.5 293.3,195.2 293.8,195.0 294.3,195.0 295.0,194.2 296.0,193.4 296.4,192.8 296.3,192.3 296.8,192.4 297.4,191.5 297.6,190.8 297.9,190.1ZM124.9,38.7 134.1,35.9 145.2,34.9 156.4,36.1 152.4,38.4 143.2,40.0 134.1,40.4 126.9,40.4ZM116.8,42.2 119.8,40.2 123.9,41.7 127.4,44.3 132.0,42.7 138.1,41.7 142.2,42.2 139.1,45.3 138.1,49.3 137.1,52.4 131.0,52.6 125.9,50.9 130.5,47.3 126.9,46.3 121.8,46.3 117.8,45.3ZM105.6,45.8 109.6,47.3 110.7,48.8 107.6,48.3ZM83.2,53.4 87.3,50.9 89.8,51.9 87.3,53.9ZM90.3,54.4 94.4,53.4 96.4,55.4 91.3,56.5ZM96.4,54.4 102.5,55.7 101.5,57.2 97.4,56.7ZM110.7,53.4 112.7,54.4 112.2,56.0 110.1,55.7ZM114.7,55.4 117.8,54.9 118.3,57.0 115.2,57.0ZM119.8,53.4 124.9,54.4 133.0,55.2 135.1,56.5 129.0,57.7 121.8,57.2ZM79.1,62.6 81.2,59.0 86.2,58.5 89.8,59.5 85.2,62.6 82.2,64.8ZM88.3,62.6 95.4,61.6 101.5,62.1 104.6,64.6 106.6,68.7 102.5,70.7 97.4,69.7 92.3,67.7 90.3,65.6ZM109.6,60.0 113.7,60.5 113.7,64.6 110.7,64.6ZM116.8,59.5 120.8,60.5 119.8,63.6 116.8,63.6ZM124.4,62.1 126.9,60.0 130.0,61.3 134.1,60.7 138.1,62.6 143.2,64.6 149.3,68.7 153.4,72.7 156.9,76.8 153.9,79.9 152.4,83.9 147.3,81.9 145.2,76.8 142.2,72.9 138.1,70.7 134.1,67.7 129.0,66.8 124.9,65.6ZM126.9,78.0 133.0,78.8 132.0,82.1 128.0,81.4ZM224.9,126.4 225.2,124.5 224.3,123.7 225.2,120.8 225.0,119.0 224.5,117.5 226.2,116.4 228.7,116.6 231.2,116.9 233.8,116.9 234.4,115.2 234.7,112.9 233.4,111.1 232.4,110.3 230.6,109.8 230.4,108.6 232.4,108.4 234.2,108.7 233.8,106.8 234.7,107.4 236.5,107.3 238.0,106.3 238.2,105.0 239.3,104.6 240.3,104.3 241.2,104.0 242.1,101.6 243.0,100.9 244.9,100.6 246.4,100.6 247.2,99.7 247.0,98.0 246.4,97.1 246.4,95.2 247.0,94.3 249.5,93.2 249.1,94.6 249.2,95.9 249.9,95.4 249.6,96.4 248.2,97.1 248.6,98.3 249.9,99.0 251.1,99.4 251.9,98.9 253.3,99.6 253.9,99.9 256.8,98.9 258.3,98.3 260.9,99.0 262.4,98.2 262.9,97.6 262.7,96.2 262.7,94.8 263.3,93.7 264.4,93.1 265.4,94.5 266.4,94.5 266.8,91.9 265.6,91.6 265.7,90.5 267.1,89.9 268.7,89.7 270.1,89.9 271.3,89.9 272.7,89.0 271.5,88.0 269.2,88.2 266.9,88.8 264.9,89.3 264.2,88.2 262.9,87.6 263.2,85.7 262.7,84.0 263.2,82.8 264.3,81.6 267.2,79.4 268.1,79.0 267.9,78.2 266.2,77.1 264.1,77.8 262.8,79.2 263.1,80.4 261.0,82.0 258.5,83.8 257.7,86.5 258.5,87.8 259.8,88.8 258.7,90.9 257.3,91.4 256.8,94.5 256.1,96.1 254.6,95.9 253.9,97.3 252.4,97.3 252.0,95.7 251.0,93.7 250.0,91.0 249.2,89.9 246.7,92.1 245.0,92.5 243.4,91.6 242.8,89.5 242.5,85.2 243.6,84.0 247.0,82.2 249.4,80.2 251.8,77.3 254.8,73.3 256.8,71.6 260.3,69.0 263.1,67.8 265.1,68.1 266.9,66.2 269.3,66.3 271.6,65.8 275.5,67.4 273.8,68.1 275.2,69.4 276.5,68.7 278.6,70.1 282.0,70.5 286.8,73.1 287.8,74.0 287.8,75.5 286.4,76.5 284.4,77.1 278.7,75.5 277.9,75.9 279.9,77.3 280.0,80.4 281.6,81.0 282.6,81.6 282.7,80.6 282.0,79.6 282.9,79.0 285.9,80.2 286.9,79.6 286.1,78.2 289.0,76.1 291.3,76.9 292.0,75.5 291.0,74.2 291.7,72.9 290.8,71.6 294.3,72.3 294.9,73.6 293.4,73.8 293.4,75.0 294.3,75.7 296.3,75.3 296.6,74.0 303.6,71.0 304.6,71.2 303.3,72.5 304.8,72.7 305.7,72.0 308.1,71.8 310.0,71.0 311.4,72.3 312.9,71.0 311.5,69.6 312.1,68.7 315.9,69.6 317.6,70.3 322.1,72.7 323.0,71.6 321.8,70.5 321.6,69.8 320.1,69.6 320.6,68.7 319.9,66.9 319.9,66.2 322.1,64.2 323.0,62.0 323.9,61.6 327.3,62.0 327.5,63.5 326.3,65.3 327.2,66.0 327.5,67.6 327.3,70.7 328.7,72.0 328.0,73.6 325.7,76.5 327.0,76.7 327.5,76.1 328.9,75.5 329.3,74.4 330.4,73.3 329.7,72.3 330.2,70.7 328.8,70.5 329.5,67.2 327.9,65.3 330.2,63.7 329.9,62.0 330.6,61.8 331.2,63.2 330.7,65.6 332.1,65.8 331.6,64.2 335.2,63.0 333.6,62.3 336.1,63.2 338.5,64.4 337.3,62.5 337.2,60.1 339.3,59.4 342.5,59.6 345.1,59.4 344.1,57.9 345.6,56.4 347.0,56.4 349.5,55.1 352.8,54.6 353.1,54.1 356.5,53.9 357.5,54.4 360.3,53.1 362.7,53.1 362.9,51.8 364.2,50.7 367.2,49.6 369.3,50.5 367.6,51.2 370.4,51.6 370.7,52.8 372.0,52.3 375.6,52.3 378.4,53.6 379.4,54.6 379.1,55.9 377.7,56.7 374.5,57.9 373.5,58.6 375.0,59.1 376.9,59.6 378.0,59.1 378.6,60.8 379.2,60.1 381.2,59.6 385.3,60.1 385.5,61.3 390.8,61.6 390.9,59.9 393.5,60.1 395.5,60.1 397.6,61.6 398.2,63.0 397.4,63.9 398.9,65.8 400.9,66.7 402.2,64.4 404.2,65.3 406.3,64.6 408.7,65.6 409.6,64.9 411.7,65.1 410.7,63.0 412.5,62.0 423.8,63.5 424.9,64.9 428.1,66.7 433.2,66.2 435.7,66.5 436.7,67.4 436.6,69.2 438.1,69.8 439.8,69.4 442.1,69.2 444.4,69.6 446.7,69.4 449.0,71.4 450.5,70.7 449.5,69.2 450.1,68.3 454.0,69.0 456.7,68.7 460.3,69.8 462.0,70.7 462.0,79.2 460.4,80.2 458.8,80.0 459.9,81.0 460.7,82.6 461.3,83.2 461.0,84.6 458.8,84.2 455.3,85.5 454.1,85.7 452.3,87.1 450.4,88.4 449.9,89.1 448.1,87.8 444.9,89.3 444.2,88.6 443.1,89.5 441.3,89.1 441.0,90.5 439.5,92.3 439.6,93.0 441.0,93.4 440.8,95.9 439.6,96.1 439.1,97.5 439.6,98.2 437.5,99.2 437.0,101.1 435.1,101.4 434.7,103.3 432.9,104.8 432.4,103.6 431.9,101.1 431.2,97.3 431.8,94.8 432.9,93.7 432.9,93.0 434.9,92.5 437.2,90.3 439.3,88.4 441.6,86.9 442.6,84.0 441.1,84.2 440.3,85.9 437.1,88.0 436.1,85.5 432.8,86.3 429.7,89.3 430.7,90.6 427.9,91.0 426.0,91.2 426.0,89.9 424.2,89.5 422.5,90.5 418.8,90.3 414.6,90.8 410.6,94.3 405.7,98.5 407.7,98.7 408.3,99.8 409.6,100.1 410.4,99.2 411.7,99.4 413.5,101.3 413.6,102.8 412.6,104.5 412.5,106.4 412.0,109.0 410.1,111.3 409.6,112.4 405.5,116.9 403.7,117.8 402.9,117.8 402.2,117.0 400.3,118.7 400.3,118.7 399.8,118.5 399.3,119.1 398.9,119.6 398.9,120.6 398.3,120.9 398.1,121.2 396.8,122.0 396.2,122.3 396.0,123.0 396.6,123.3 397.2,124.0 398.3,125.8 398.7,126.7 398.7,128.4 398.2,129.1 397.1,129.4 396.0,129.9 394.9,130.1 394.8,129.4 395.0,128.2 394.4,126.8 395.4,126.5 394.5,125.3 393.9,125.3 393.5,125.1 392.7,124.8 393.0,124.2 393.3,123.9 393.5,122.9 392.2,122.1 390.4,122.6 389.4,123.2 388.1,123.6 388.8,122.9 388.5,122.3 389.5,121.4 388.8,120.6 387.8,121.1 386.3,122.1 385.5,123.0 384.3,123.2 383.6,123.9 384.4,124.8 385.4,125.1 385.4,125.8 386.4,126.1 387.8,125.1 388.9,125.6 389.8,125.6 389.9,126.5 388.1,126.8 387.5,127.7 386.4,128.4 385.8,129.4 387.0,130.1 387.5,131.5 388.3,132.7 389.1,133.9 389.1,135.0 388.4,135.2 388.6,136.1 389.4,136.5 389.1,137.6 388.9,138.7 388.1,138.8 387.3,140.2 386.3,142.0 385.1,143.6 383.4,144.8 381.6,145.9 380.2,146.0 379.5,146.7 379.0,146.3 378.2,146.8 376.5,147.5 375.2,147.7 374.7,149.2 374.1,149.2 373.7,148.3 374.1,147.7 372.3,147.3 371.8,147.5 370.5,147.2 370.0,148.3 369.1,149.8 368.8,150.7 369.7,152.2 371.0,153.9 372.1,154.6 372.8,155.7 373.3,158.1 373.2,160.3 372.2,161.1 370.7,161.9 369.7,163.0 368.2,164.2 367.7,163.4 368.1,162.5 367.1,161.8 366.1,161.7 365.6,160.9 364.9,159.6 364.6,158.1 362.9,159.0 362.9,158.1 361.8,158.1 361.7,159.5 360.7,162.5 360.7,163.4 361.5,163.4 362.0,164.6 362.3,165.7 362.9,166.3 363.7,166.6 364.3,167.2 364.7,167.5 365.4,168.1 365.9,168.8 365.9,169.7 365.8,170.4 365.9,170.7 366.1,171.5 366.6,171.9 366.9,173.0 366.9,173.4 366.1,173.5 364.9,172.5 363.4,171.5 363.3,170.9 362.5,170.1 362.4,169.0 361.9,168.3 362.0,167.5 361.8,166.8 361.3,166.5 361.0,165.8 360.4,165.1 359.8,164.4 359.5,165.2 359.4,164.4 359.5,163.4 359.9,162.5 359.8,161.5 360.2,160.6 359.7,159.9 359.8,158.5 359.3,157.8 358.9,156.3 358.7,154.6 358.2,153.6 357.3,154.2 355.9,155.1 355.1,155.0 354.4,154.8 354.8,153.1 354.5,151.9 353.5,150.4 353.8,150.0 353.0,149.7 352.1,148.7 351.8,148.0 351.6,147.3 351.4,146.7 350.9,145.9 349.8,145.9 349.9,146.4 349.5,147.2 348.9,147.0 348.7,147.1 348.4,147.0 347.9,146.8 347.7,147.3 346.9,147.3 345.3,147.6 345.4,148.7 344.7,149.3 343.0,150.2 341.5,151.8 340.6,152.6 339.3,153.5 339.3,154.0 338.7,154.4 337.6,154.8 337.0,154.9 336.6,155.9 336.8,157.6 337.0,158.6 336.5,159.7 336.5,161.9 335.7,162.0 335.2,163.0 335.6,163.4 334.4,163.8 333.9,164.6 333.4,165.0 332.3,163.8 331.7,162.0 331.2,160.8 330.8,160.1 330.2,159.0 329.8,157.3 329.5,156.6 328.4,154.8 327.9,152.3 327.5,150.6 327.5,149.1 327.3,147.7 325.5,148.5 324.7,148.4 323.0,146.8 323.5,146.3 323.2,145.9 321.8,144.7 320.8,144.4 320.4,143.4 319.5,142.4 317.1,142.7 315.1,142.7 313.4,142.8 311.0,142.4 309.6,142.2 308.2,142.0 307.7,140.3 307.1,140.2 306.1,140.3 304.8,141.0 303.3,140.6 302.1,139.5 300.8,139.1 300.1,137.8 299.1,136.1 298.4,136.2 297.6,135.8 297.2,136.3 296.4,136.2 296.7,137.6 296.9,138.3 297.4,139.3 298.1,139.6 298.3,140.2 299.2,140.7 299.1,141.6 299.8,143.0 300.2,143.5 300.7,143.5 300.9,142.7 300.9,141.9 300.6,141.5 300.9,144.0 301.2,144.3 302.2,144.0 304.0,144.2 304.8,143.2 305.7,142.4 306.6,141.5 307.0,141.1 307.1,141.2 307.0,141.8 306.8,142.0 307.0,143.1 308.2,144.4 309.1,144.7 309.9,144.8 310.9,146.0 311.2,146.3 310.6,147.7 310.1,148.1 309.6,149.1 309.0,148.9 308.7,149.3 308.6,150.0 308.7,150.7 308.1,151.0 307.2,151.4 307.1,152.0 306.8,152.3 306.1,152.3 305.6,152.7 305.6,153.2 305.0,153.5 304.2,153.5 303.5,153.9 302.8,153.9 301.9,154.2 301.7,154.9 301.7,155.3 300.4,155.8 298.4,156.4 297.3,157.3 296.7,157.4 296.3,157.3 295.7,157.8 294.8,158.1 293.8,158.2 293.4,158.2 293.2,158.6 292.8,158.7 292.6,159.0 292.0,159.0 291.7,159.1 290.8,159.1 290.4,158.3 290.5,157.6 290.3,157.2 290.0,156.3 289.7,155.8 289.9,155.7 289.8,155.1 289.9,154.9 289.9,154.4 289.7,153.7 289.3,153.3 289.3,152.8 288.6,152.4 287.9,151.3 287.5,150.2 286.6,149.3 286.1,149.2 285.3,147.9 285.1,146.2 284.5,144.7 283.9,144.2 283.3,143.9 282.9,143.1 282.9,142.8 282.5,142.2 282.1,141.9 281.6,140.8 280.9,139.8 280.2,138.8 279.6,138.8 279.9,138.1 279.9,137.3 280.1,137.0 279.6,134.1 280.1,132.0 280.7,130.8 281.4,129.8 281.2,128.7 281.5,128.1 281.4,126.5 280.9,126.9 279.7,126.7 278.9,127.5 277.0,127.7 276.0,126.9 274.6,126.8 274.3,127.4 273.5,127.7 272.2,126.8 270.8,126.8 270.1,125.3 269.2,124.6 269.8,123.5 269.1,122.7 270.5,121.4 272.3,121.2 272.8,120.2 275.2,120.3 276.7,119.4 278.2,119.0 280.4,119.0 282.5,120.0 284.3,120.6 285.8,120.3 286.9,120.5 288.4,119.7 288.5,119.0 288.3,118.1 287.5,117.5 286.8,117.3 286.3,116.9 284.8,115.5 283.3,114.9 282.2,114.1 283.1,113.8 284.1,112.5 283.5,111.9 285.3,111.3 285.3,110.8 284.1,111.1 283.1,111.3 282.4,111.7 281.1,111.9 280.1,112.4 280.1,113.3 280.7,113.6 282.0,113.6 281.7,114.3 280.4,114.6 278.7,115.3 278.0,115.0 278.2,114.4 277.1,113.9 277.1,113.6 278.4,113.0 278.0,112.7 276.0,112.4 276.0,111.7 274.7,111.9 274.3,112.9 273.3,113.9 273.3,114.4 272.7,114.7 272.3,114.6 272.1,116.4 271.3,117.0 271.0,118.1 271.3,119.0 271.5,119.6 272.6,120.0 272.3,120.3 270.8,120.5 270.3,120.9 269.3,121.7 268.8,120.8 268.1,120.6 267.4,120.6 265.9,120.9 266.8,121.8 266.2,122.0 265.4,122.0 264.8,121.2 264.6,121.5 264.8,122.4 265.6,123.2 265.0,123.5 265.7,124.2 266.3,124.6 266.3,125.3 265.2,125.1 265.6,125.8 264.8,125.9 265.3,127.2 264.4,127.2 263.4,126.7 262.9,125.5 262.7,124.5 262.2,123.7 261.5,123.0 261.5,122.6 261.3,122.4 261.2,122.1 260.5,121.5 260.4,120.9 260.5,119.9 260.7,119.4 260.5,119.1 260.3,119.1 259.9,118.5 259.4,118.1 258.2,117.8 257.4,117.2 256.3,116.7 255.3,115.6 255.5,115.5 254.9,114.9 254.9,114.3 254.1,114.1 253.7,114.7 253.4,114.3 253.4,113.6 253.6,113.5 252.6,113.3 251.6,113.8 251.8,114.6 251.6,115.0 252.0,115.8 253.1,116.6 253.8,117.8 255.1,119.1 256.1,119.1 256.5,119.4 256.1,119.7 258.2,120.6 259.3,121.4 259.4,121.7 259.2,122.3 258.4,121.5 257.4,121.4 256.8,122.3 257.8,122.9 257.6,123.6 257.0,123.7 256.4,124.9 255.9,125.1 255.9,124.6 256.1,123.7 256.4,123.5 255.5,122.0 255.0,121.7 254.6,121.1 253.9,120.8 253.3,120.2 252.4,120.0 251.4,119.4 250.3,118.4 249.4,117.6 249.0,116.1 248.4,116.0 247.4,115.3 246.7,115.6 246.1,116.3 245.5,116.4 244.4,117.3 242.0,116.9 240.1,117.3 240.0,118.2 240.0,119.1 238.8,120.2 237.2,120.5 237.1,120.9 236.3,121.8 235.8,123.0 236.3,123.9 235.6,124.5 235.3,125.5 234.4,125.8 233.6,126.8 230.7,126.8 229.9,127.4 229.4,127.9 228.8,127.8 228.4,127.2 228.0,126.5 226.8,126.2 226.3,126.7 225.7,126.4 224.9,126.4ZM10.4,70.7 13.4,72.5 16.8,74.6 16.6,75.9 17.5,76.5 17.1,74.8 20.5,75.3 23.0,77.1 21.8,78.2 19.8,78.4 19.2,80.6 18.0,80.6 15.4,79.4 15.1,78.4 13.9,78.2 12.4,78.4 10.4,79.2ZM229.0,106.3 230.8,105.8 232.4,105.3 234.9,105.1 237.8,104.6 238.2,103.0 238.3,102.0 236.6,101.1 235.9,99.0 234.6,98.3 233.9,96.6 233.1,95.2 233.8,93.4 231.2,93.4 232.3,91.6 229.9,91.6 228.4,93.6 229.2,95.7 228.4,97.3 229.9,98.3 231.7,98.7 232.1,99.9 232.4,100.8 230.8,100.8 230.4,101.6 230.9,102.6 229.6,103.6 231.9,104.1 230.8,104.5ZM228.7,102.8 228.7,101.1 228.7,99.7 229.2,98.7 228.4,97.6 226.7,97.6 225.8,98.5 223.7,99.4 224.2,100.8 223.4,101.6 224.0,102.5 223.2,103.5 225.4,103.8 227.7,103.0ZM207.7,81.3 208.8,80.4 206.1,79.4 208.3,78.4 206.2,77.6 208.3,76.3 210.4,77.8 212.5,76.9 215.9,76.1 218.0,77.1 217.8,78.2 219.1,79.0 217.5,80.4 212.7,82.2 207.6,81.3ZM250.0,47.2 253.5,50.5 257.3,52.0 259.2,50.2 263.2,49.1 262.2,48.0 270.1,44.7 265.7,42.7 258.8,42.4 256.3,43.6 249.9,44.4ZM261.9,41.5 265.1,43.6 270.6,43.0 266.3,41.0ZM302.1,65.1 306.0,67.2 308.3,66.9 307.6,67.2 305.5,65.6 305.2,62.5 306.6,60.4 309.0,58.6 311.5,55.9 315.9,54.6 320.3,52.3 321.8,51.6 319.0,51.8 314.0,52.8 309.6,55.1 305.8,57.4 303.3,60.4 303.3,62.8 301.1,64.2ZM355.0,46.1 359.2,46.9 361.7,45.0 365.7,45.5 368.4,46.9 368.1,45.3 361.5,41.0 358.5,41.0 352.3,43.3ZM409.3,56.7 411.7,58.6 416.2,59.4 414.4,57.4 423.8,57.4 426.3,55.6 420.0,55.1 417.8,54.6 412.5,54.6 409.3,55.4ZM460.2,66.5 462.0,66.2 462.0,64.9 460.4,65.1ZM416.4,105.3 417.8,108.1 415.9,107.6 415.1,109.8 416.2,111.6 416.2,112.7 415.2,111.7 414.5,112.9 414.2,111.6 414.4,110.0 414.2,108.2 413.9,105.6 413.9,103.3 414.0,100.9 415.1,100.1 414.6,99.4 415.2,99.0 416.0,101.4 415.9,103.5ZM414.2,123.2 413.1,126.2 412.6,127.4 412.9,128.1 412.2,129.1 410.6,129.7 408.3,129.8 406.6,131.3 405.7,129.8 403.5,130.1 402.1,130.8 400.6,130.8 401.8,131.9 400.9,134.1 400.2,134.8 399.6,134.3 399.8,133.0 399.1,132.6 398.6,131.6 399.8,131.2 400.4,130.4 401.7,129.7 402.6,128.7 405.1,128.2 406.5,128.5 407.7,125.9 408.6,126.7 410.5,125.2 411.1,124.6 412.0,122.9 411.7,121.1 412.2,120.2 413.6,119.9 414.2,122.0ZM402.3,131.3 403.1,132.5 405.1,130.9 404.6,130.4 403.5,130.4ZM413.6,116.9 413.9,114.7 414.3,113.5 415.7,115.2 417.6,116.0 418.5,115.3 418.8,117.0 417.0,117.5 415.9,119.0 413.9,117.9 413.2,119.3 411.9,119.6 411.6,118.1 412.2,117.0ZM389.0,143.8 388.3,145.9 387.6,147.0 386.9,145.6 387.6,143.6 388.6,142.6 389.2,143.0ZM374.6,151.3 373.6,151.9 372.6,151.5 372.5,150.4 373.1,149.8 374.5,149.4 375.2,149.4 375.5,150.0ZM338.8,165.6 338.6,166.8 338.1,167.2 337.0,167.5 336.5,166.5 336.2,164.7 336.7,162.7 337.6,163.3ZM387.8,151.5 389.6,151.9 389.5,153.3 389.9,154.4 388.9,154.9 388.6,155.9 388.9,156.9 389.6,157.1 390.4,157.3 391.7,157.6 391.5,158.3 391.9,159.2 390.9,158.6 390.4,157.8 390.2,158.3 389.3,157.6 388.1,157.8 387.5,156.9 388.0,156.7 387.6,156.3 387.5,156.8 386.9,156.0 386.6,155.5 386.6,154.2 387.1,154.8 387.3,152.7ZM394.8,164.4 394.9,165.2 394.5,167.1 394.0,165.8 393.5,166.5 393.9,167.5 393.5,168.0 392.0,167.2 391.7,166.3 392.0,165.7 391.3,165.2 390.9,165.7 390.3,165.6 389.4,166.3 389.1,166.0 389.6,164.9 390.4,164.7 391.2,164.1 391.5,164.7 392.5,164.3 392.8,163.7 393.5,163.7 393.5,162.7ZM389.9,162.8 390.7,163.7 391.2,162.4 390.5,161.1 389.3,161.9ZM392.2,159.1 393.4,159.2 394.0,161.1 393.0,161.1 393.4,162.0 392.2,160.5ZM383.3,164.4 386.1,161.7 386.4,160.6 384.9,161.9ZM355.8,168.1 358.5,168.5 359.7,169.6 360.5,170.5 361.3,171.0 362.4,172.4 363.4,172.5 364.8,173.2 365.6,174.2 366.4,174.9 365.9,175.9 367.3,177.3 367.8,177.9 368.7,178.8 369.3,178.9 369.1,180.4 368.9,182.3 367.6,182.4 366.6,181.3 364.9,180.3 364.4,179.5 363.4,178.5 362.8,177.6 361.8,175.9 360.8,174.7 360.4,173.7 359.9,172.7 358.8,171.9 358.2,170.9 357.2,170.0 355.9,168.7ZM369.3,182.4 370.8,182.5 372.3,183.0 372.5,183.5 374.8,183.7 375.2,183.2 377.5,183.7 378.0,184.6 379.9,184.8 381.4,185.6 380.0,186.0 378.6,185.4 377.5,185.6 376.1,185.4 375.0,185.2 373.5,184.7 372.6,184.6 372.1,184.8 369.8,184.3 369.6,183.7 368.4,183.7 369.3,182.4ZM384.1,169.9 383.4,171.0 384.3,172.1 384.1,172.7 385.5,173.9 384.0,174.0 383.6,174.9 383.6,176.0 382.5,176.9 382.4,178.1 381.9,180.0 381.7,179.6 380.4,180.1 379.9,179.4 378.4,178.9 376.9,179.4 376.3,178.8 375.5,178.8 374.5,178.6 374.3,177.0 373.7,176.6 373.1,175.6 373.0,174.5 373.1,173.4 373.8,172.5 374.7,172.9 375.7,172.6 376.0,171.6 378.0,171.1 378.9,170.1 380.0,168.8 381.1,168.2 382.0,167.3 382.6,166.3 383.1,166.3 383.8,167.0 383.9,167.5 384.6,167.8 385.8,168.2 385.6,168.7 384.8,168.8 385.0,169.4ZM393.3,173.2 392.3,174.5 391.4,174.7 390.2,174.5 388.1,174.5 387.0,174.7 386.9,175.6 387.9,176.8 388.6,176.2 390.9,175.8 390.9,176.4 389.9,176.8 388.6,177.4 389.9,179.0 389.6,179.4 390.8,180.9 390.5,181.8 389.6,181.7 390.0,180.6 388.9,181.2 388.6,180.8 388.8,180.3 388.0,180.3 388.0,178.3 387.1,178.6 387.3,180.0 387.3,181.9 386.5,182.2 386.0,181.8 386.4,180.6 386.1,179.4 385.6,179.4 385.3,178.5 385.8,177.6 385.9,176.8 386.5,174.8 386.8,174.2 387.9,173.4 388.9,173.7 390.4,173.9 391.9,173.9ZM393.0,186.2 393.2,185.9 394.2,185.6 395.9,185.6 395.0,186.3 393.2,186.8 392.3,187.7 391.3,188.1 391.2,187.8 391.8,186.7ZM386.6,185.6 388.4,185.7 390.5,185.6 390.3,185.9 387.6,186.2 386.6,186.1ZM382.0,185.7 383.8,185.6 385.4,185.4 385.6,185.9 383.4,186.3 382.6,186.3ZM396.7,172.2 397.7,173.6 397.2,174.2 396.8,176.1 396.0,174.5 396.3,172.7ZM396.9,179.0 399.9,178.9 400.3,179.9 398.3,179.4 396.7,179.3ZM404.5,176.4 404.8,178.5 406.2,179.3 408.6,177.1 409.7,177.1 410.9,177.6 413.1,178.3 417.6,179.9 418.5,180.5 419.1,181.9 421.4,182.7 421.8,183.3 420.6,183.4 420.9,184.3 422.0,185.1 423.5,186.4 424.4,188.1 425.4,188.0 424.2,188.7 421.8,187.7 419.4,185.2 417.8,184.6 416.8,184.9 416.0,185.3 416.1,186.3 415.1,186.7 413.1,186.4 410.7,185.2 409.5,185.4 410.2,184.2 409.9,182.8 409.2,181.8 406.8,180.6 405.8,180.6 404.0,179.4 403.6,180.0 403.1,180.1 402.8,179.6 401.8,178.5 403.2,178.1 404.1,178.1 404.0,177.8 402.1,177.8 401.6,177.0 400.4,176.8 399.9,176.1 401.7,175.9 402.3,175.5 404.3,176.0ZM422.3,182.0 424.2,181.9 424.8,181.9 425.8,181.3 426.8,180.3 427.3,180.4 426.3,182.4 424.7,182.9 423.0,182.5ZM378.4,203.0 379.5,202.8 380.0,203.0 381.1,202.4 382.6,201.3 383.6,201.6 385.3,200.8 387.9,200.0 388.9,198.7 389.5,196.7 390.5,195.8 391.5,196.7 391.3,195.4 392.2,194.7 392.9,194.1 393.3,193.6 394.4,193.1 395.7,192.4 397.1,193.9 398.6,193.2 399.2,192.2 400.3,190.6 401.4,190.5 402.6,190.3 402.6,189.6 403.1,189.4 404.8,190.1 406.0,190.4 407.2,190.1 408.0,190.6 407.5,191.8 406.8,191.8 406.7,193.1 406.1,193.6 407.2,194.7 408.2,195.2 409.7,196.3 411.0,197.0 412.1,197.4 413.0,197.0 413.5,195.8 413.9,193.4 413.7,192.3 414.0,191.3 414.1,190.1 414.5,189.2 414.5,188.9 415.0,188.5 415.4,189.1 415.7,190.0 415.9,190.5 416.2,191.1 416.4,191.9 416.4,192.4 417.6,192.9 418.6,193.9 418.5,194.5 418.8,195.6 418.9,196.3 419.3,196.4 419.6,197.6 419.5,198.1 419.9,199.1 421.3,199.8 422.9,200.9 423.5,202.1 424.0,203.4 424.5,203.2 425.0,203.8 425.3,204.4 425.4,205.0 426.4,205.8 428.0,207.4 428.3,208.5 428.4,209.2 428.3,210.1 428.9,211.2 428.8,212.4 428.3,214.3 428.3,215.0 428.0,216.0 427.5,217.4 426.5,218.0 426.0,219.1 425.7,219.8 425.3,221.1 424.8,221.8 424.5,222.8 424.3,223.8 424.4,224.2 423.7,224.8 422.3,224.8 421.1,225.4 420.5,226.0 419.8,226.5 418.8,226.0 418.0,225.7 418.1,224.9 417.5,225.2 416.4,226.3 415.2,225.8 414.6,225.7 413.9,225.5 412.6,225.1 411.8,224.2 411.6,223.1 411.4,222.3 410.7,221.8 409.5,221.6 409.9,220.9 409.6,219.9 409.0,220.9 407.8,221.2 408.6,220.3 408.7,219.5 409.2,218.8 409.1,217.8 408.1,219.1 407.3,219.5 406.8,220.6 405.8,220.1 405.8,219.2 405.1,218.2 404.5,217.7 404.7,217.4 403.1,216.6 402.2,216.6 400.9,215.9 398.7,216.0 397.1,216.4 395.7,217.0 394.4,216.8 393.2,217.5 392.0,218.0 391.8,218.7 391.4,219.2 390.3,219.2 389.5,219.4 388.4,219.1 387.5,219.2 386.6,219.3 385.9,220.1 385.5,220.1 384.9,220.3 384.3,220.9 383.4,220.8 382.5,220.8 381.2,219.9 380.5,219.6 380.5,218.8 381.1,218.7 381.4,218.4 381.4,217.8 381.5,216.8 381.4,216.0 380.7,214.6 380.5,213.8 380.5,213.1 380.0,212.2 380.0,211.7 379.5,211.2 379.2,210.1 378.7,209.0 378.4,208.5 379.0,209.0 378.5,207.8 379.1,208.2 379.5,208.8 379.5,208.1 378.9,207.0 378.7,206.6 378.5,206.2 378.6,205.4 378.9,205.2 379.0,204.5 378.9,203.7ZM421.5,229.2 422.3,229.4 422.4,231.2 421.9,231.6 421.8,232.8 421.4,232.4 420.5,233.4 420.3,233.4 419.4,233.3 418.6,232.1 418.5,231.0 417.8,229.8 417.8,229.1 418.6,229.2 419.9,229.7ZM453.3,220.1 455.3,222.5 456.3,223.9 456.8,223.6 458.8,225.0 460.2,224.7 459.5,226.8 458.3,227.9 457.0,230.0 456.0,230.6 455.9,230.1 455.4,230.0 456.0,228.8 455.6,227.9 454.3,227.3 455.3,226.3 455.4,224.2 454.9,223.2 454.9,222.9 454.3,222.3 453.4,221.1 452.8,220.1ZM453.0,228.8 453.5,230.0 454.8,230.0 454.8,230.7 453.5,232.5 452.9,233.1 453.4,233.9 451.4,234.4 451.0,235.4 450.3,237.0 449.2,237.8 448.6,238.1 447.5,238.1 446.7,237.6 445.4,237.5 445.1,237.0 445.7,235.7 447.4,234.2 448.1,233.9 450.1,232.5 450.9,231.8 451.5,230.7 451.9,230.3 452.1,229.4 453.0,228.8ZM255.6,124.6 255.3,125.8 255.4,126.2 255.1,126.9 254.1,126.4 253.5,126.2 251.8,125.5 252.0,124.8 253.4,124.9 254.8,124.8ZM247.7,120.2 248.5,121.2 248.4,123.2 247.7,123.2 247.2,123.6 246.7,123.2 246.7,121.4 246.5,120.6 247.1,120.6ZM248.2,118.7 247.7,119.9 247.2,119.6 246.9,118.5 247.1,118.1 248.0,117.5ZM265.9,128.2 266.6,128.7 267.6,128.7 268.6,128.7 268.6,129.2 267.6,129.3 266.7,128.9 265.7,128.8ZM278.8,129.1 279.6,128.2 278.7,128.9 278.2,129.2 277.2,129.1 277.5,128.7 277.9,128.9ZM252.1,96.9 251.4,98.3 250.0,97.3 250.3,96.3 251.8,96.1Z" fill="none" stroke="#fff" stroke-width=".6" stroke-linejoin="round"/><path d="M294.8,115.0 295.8,113.5 297.8,112.2 299.3,111.9 300.4,111.3 301.4,111.6 302.7,111.4 303.0,112.5 302.7,113.9 300.6,115.2 299.3,115.0 300.1,116.0 300.6,117.3 302.1,117.8 302.3,119.1 302.4,120.3 302.1,119.3 302.7,120.6 303.8,121.1 302.7,122.1 303.2,123.0 302.8,123.0 303.8,123.5 303.8,126.1 303.6,125.1 301.1,126.8 299.1,125.8 297.7,124.9 297.6,124.5 298.1,123.0 298.2,121.7 299.1,121.2 298.3,120.9 297.8,120.0 297.2,119.3 296.4,118.2 295.8,117.5 295.8,116.4 294.8,115.0ZM119.7,109.3 122.8,108.0 126.4,107.7 129.5,109.3 130.7,111.1 127.6,112.0 124.0,111.7 120.9,111.1ZM125.2,112.3 128.3,112.3 129.2,114.8 127.6,119.6 126.1,119.3 125.5,116.0ZM130.7,112.3 135.0,112.9 136.2,114.8 134.4,117.2 132.5,118.4 131.3,115.4ZM131.3,119.6 136.2,117.5 138.6,117.2 135.0,119.3ZM137.4,116.3 141.7,114.8 144.7,114.1 141.1,116.6Z" fill="#fff"/><path d="M141.7,114.6 146.0,112.4 150.2,110.5 154.5,108.3" fill="none" stroke="#fff" stroke-width="1.2"/></svg>
</div>

<!-- Top pages -->
<div class="card" style="left:8px;top:642px;width:474px;height:220px">
  <div class="ttl" style="top:17px">Top Pages</div>
  <svg class="abs" style="left:439.4px;top:16.4px" width="17.3" height="17.3" viewBox="0 0 24 24" stroke="#333"><path d="M9.594 3.94c.09-.542.56-.94 1.11-.94h2.593c.55 0 1.02.398 1.11.94l.213 1.281c.063.374.313.686.645.87.074.04.147.083.22.127.325.196.72.257 1.075.124l1.217-.456a1.125 1.125 0 0 1 1.37.49l1.296 2.247a1.125 1.125 0 0 1-.26 1.431l-1.003.827c-.293.241-.438.613-.43.992a7.723 7.723 0 0 1 0 .255c-.008.378.137.75.43.991l1.004.827c.424.35.534.955.26 1.43l-1.298 2.247a1.125 1.125 0 0 1-1.369.491l-1.217-.456c-.355-.133-.75-.072-1.076.124a6.47 6.47 0 0 1-.22.128c-.331.183-.581.495-.644.869l-.213 1.281c-.09.543-.56.94-1.11.94h-2.594c-.55 0-1.019-.398-1.11-.94l-.213-1.281c-.062-.374-.312-.686-.644-.87a6.52 6.52 0 0 1-.22-.127c-.325-.196-.72-.257-1.076-.124l-1.217.456a1.125 1.125 0 0 1-1.369-.49l-1.297-2.247a1.125 1.125 0 0 1 .26-1.431l1.004-.827c.292-.24.437-.613.43-.991a6.932 6.932 0 0 1 0-.255c.007-.38-.138-.751-.43-.992l-1.004-.827a1.125 1.125 0 0 1-.26-1.43l1.297-2.247a1.125 1.125 0 0 1 1.37-.491l1.216.456c.356.133.751.072 1.076-.124.072-.044.146-.086.22-.128.332-.183.582-.495.644-.869l.214-1.28Z M14.5 12a2.5 2.5 0 1 1-5 0 2.5 2.5 0 0 1 5 0Z" fill="none" stroke-width="1.5" stroke-linejoin="round"/></svg>
  <div class="hline" style="top:50px"></div>
  <div class="colh" style="left:16px;top:61px">URL PATH</div>
  <div class="colh" style="right:16px;top:61px">CWV RATING</div>
  <div class="hline" style="top:79px"></div>
  <div class="url" style="top:93px">/app/checkout/singapore/<small>2.4 K</small></div>
  <div class="bar" style="left:320px;top:96px;width:104px"><div class="o" style="width:75px"></div><div class="r" style="flex:1"></div></div>
  <div class="pct" style="top:96px">0%</div>
  <div class="hline" style="top:120px"></div>
  <div class="url" style="top:134px">/team<small>1.9 K</small></div>
  <div class="bar" style="left:320px;top:137px;width:104px"><div class="g" style="width:26px"></div><div class="o" style="width:74px"></div><div class="r" style="flex:1"></div></div>
  <div class="pct" style="top:137px">26%</div>
  <div class="hline" style="top:161px"></div>
  <div class="url" style="top:175px">/iceland<small>1.8 K</small></div>
  <div class="bar" style="left:320px;top:178px;width:104px"><div class="g" style="width:26px"></div><div class="o" style="width:29px"></div><div class="r" style="flex:1"></div></div>
  <div class="pct" style="top:178px">25%</div>
</div>

<!-- Slow pages -->
<div class="card" style="left:497px;top:642px;width:474px;height:220px">
  <div class="ttl" style="top:17px">Slow Pages</div>
  <svg class="abs" style="left:439.4px;top:16.4px" width="17.3" height="17.3" viewBox="0 0 24 24" stroke="#333"><path d="M9.594 3.94c.09-.542.56-.94 1.11-.94h2.593c.55 0 1.02.398 1.11.94l.213 1.281c.063.374.313.686.645.87.074.04.147.083.22.127.325.196.72.257 1.075.124l1.217-.456a1.125 1.125 0 0 1 1.37.49l1.296 2.247a1.125 1.125 0 0 1-.26 1.431l-1.003.827c-.293.241-.438.613-.43.992a7.723 7.723 0 0 1 0 .255c-.008.378.137.75.43.991l1.004.827c.424.35.534.955.26 1.43l-1.298 2.247a1.125 1.125 0 0 1-1.369.491l-1.217-.456c-.355-.133-.75-.072-1.076.124a6.47 6.47 0 0 1-.22.128c-.331.183-.581.495-.644.869l-.213 1.281c-.09.543-.56.94-1.11.94h-2.594c-.55 0-1.019-.398-1.11-.94l-.213-1.281c-.062-.374-.312-.686-.644-.87a6.52 6.52 0 0 1-.22-.127c-.325-.196-.72-.257-1.076-.124l-1.217.456a1.125 1.125 0 0 1-1.369-.49l-1.297-2.247a1.125 1.125 0 0 1 .26-1.431l1.004-.827c.292-.24.437-.613.43-.991a6.932 6.932 0 0 1 0-.255c.007-.38-.138-.751-.43-.992l-1.004-.827a1.125 1.125 0 0 1-.26-1.43l1.297-2.247a1.125 1.125 0 0 1 1.37-.491l1.216.456c.356.133.751.072 1.076-.124.072-.044.146-.086.22-.128.332-.183.582-.495.644-.869l.214-1.28Z M14.5 12a2.5 2.5 0 1 1-5 0 2.5 2.5 0 0 1 5 0Z" fill="none" stroke-width="1.5" stroke-linejoin="round"/></svg>
  <div class="hline" style="top:50px"></div>
  <div class="colh" style="left:16px;top:61px">URL PATH</div>
  <div class="colh" style="right:16px;top:61px">CWV RATING</div>
  <div class="hline" style="top:79px"></div>
  <div class="url" style="top:93px">/app/checkout/singapore/<small>2.4 K</small></div>
  <div class="bar" style="left:320px;top:96px;width:104px"><div class="o" style="width:75px"></div><div class="r" style="flex:1"></div></div>
  <div class="pct" style="top:96px">0%</div>
  <div class="hline" style="top:120px"></div>
  <div class="url" style="top:134px">/<small>1.3 K</small></div>
  <div class="bar" style="left:320px;top:137px;width:104px"><div class="g" style="width:6px"></div><div class="o" style="width:41px"></div><div class="r" style="flex:1"></div></div>
  <div class="pct" style="top:137px">6%</div>
  <div class="hline" style="top:161px"></div>
  <div class="url" style="top:175px">/app/<small>769</small></div>
  <div class="bar" style="left:320px;top:178px;width:104px"><div class="g" style="width:7px"></div><div class="o" style="width:33px"></div><div class="r" style="flex:1"></div></div>
  <div class="pct" style="top:178px">7%</div>
</div>

</body></html>
